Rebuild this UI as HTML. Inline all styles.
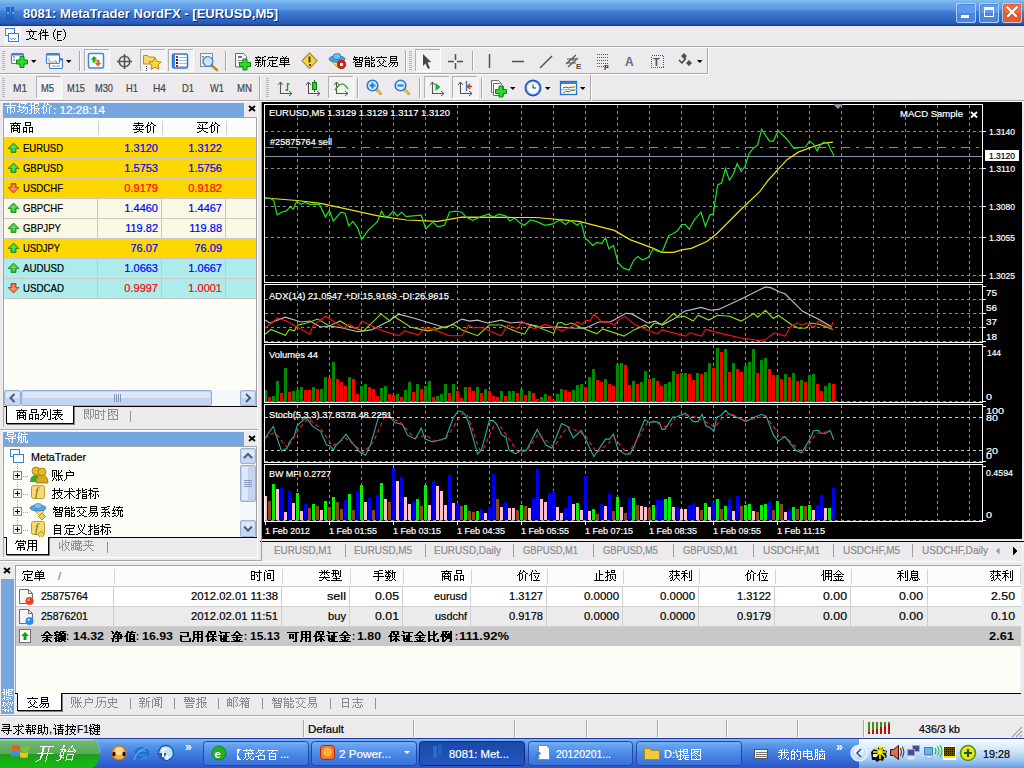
<!DOCTYPE html>
<html><head><meta charset="utf-8"><style>html,body{margin:0;padding:0;overflow:hidden;background:#ECEAEC}svg{display:block}</style></head>
<body><svg width="1024" height="768" viewBox="0 0 1024 768" shape-rendering="crispEdges" font-family="Liberation Sans"><rect x="0" y="0" width="1024" height="768" fill="#ECEAEC" /><rect x="0" y="0" width="1024" height="1" fill="#7DBDF0" /><rect x="0" y="1" width="1024" height="1" fill="#78B6EE" /><rect x="0" y="2" width="1024" height="1" fill="#72B0EC" /><rect x="0" y="3" width="1024" height="1" fill="#6CA9EA" /><rect x="0" y="4" width="1024" height="1" fill="#68A3EA" /><rect x="0" y="5" width="1024" height="1" fill="#66A0E9" /><rect x="0" y="6" width="1024" height="1" fill="#649EE9" /><rect x="0" y="7" width="1024" height="1" fill="#629CE8" /><rect x="0" y="8" width="1024" height="1" fill="#5F99E6" /><rect x="0" y="9" width="1024" height="1" fill="#5A94E3" /><rect x="0" y="10" width="1024" height="1" fill="#5089DC" /><rect x="0" y="11" width="1024" height="1" fill="#4180D5" /><rect x="0" y="12" width="1024" height="1" fill="#3D7CD2" /><rect x="0" y="13" width="1024" height="1" fill="#3A79CF" /><rect x="0" y="14" width="1024" height="1" fill="#3876CC" /><rect x="0" y="15" width="1024" height="1" fill="#3673C9" /><rect x="0" y="16" width="1024" height="1" fill="#3570C7" /><rect x="0" y="17" width="1024" height="1" fill="#336DC5" /><rect x="0" y="18" width="1024" height="1" fill="#316AC3" /><rect x="0" y="19" width="1024" height="1" fill="#2F67C1" /><rect x="0" y="20" width="1024" height="1" fill="#2D64BF" /><rect x="0" y="21" width="1024" height="1" fill="#2B60BC" /><rect x="0" y="22" width="1024" height="1" fill="#295CB9" /><rect x="0" y="23" width="1024" height="1" fill="#2658B5" /><rect x="0" y="24" width="1024" height="1" fill="#1E4CAD" /><rect x="0" y="25" width="1024" height="1" fill="#103A9C" /><rect x="6" y="7" width="4" height="13" fill="#1A6CC8" /><rect x="11" y="7" width="3" height="11" fill="#1A6CC8" /><rect x="7" y="12" width="2" height="2" fill="#5AAAE8" /><rect x="12" y="12" width="2" height="2" fill="#5AAAE8" /><rect x="6" y="17" width="8" height="3" fill="#1A62C0" /><text x="24" y="19" font-family="Liberation Sans" font-size="13" fill="#0A246A" text-anchor="start" textLength="255" lengthAdjust="spacingAndGlyphs" font-weight="bold" >8081: MetaTrader NordFX - [EURUSD,M5]</text><text x="23" y="18" font-family="Liberation Sans" font-size="13" fill="#FFFFFF" text-anchor="start" textLength="255" lengthAdjust="spacingAndGlyphs" font-weight="bold" >8081: MetaTrader NordFX - [EURUSD,M5]</text><rect x="956.5" y="3.5" width="19" height="19" rx="2.5" fill="#4A86E0" stroke="#D0E4FA" stroke-opacity="0.75"/><rect x="957.5" y="4.5" width="17" height="8" fill="#7EB0F0" opacity="0.5"/><rect x="961" y="15" width="8" height="3" fill="#FFFFFF" /><rect x="979.5" y="3.5" width="19" height="19" rx="2.5" fill="#4A86E0" stroke="#D0E4FA" stroke-opacity="0.75"/><rect x="980.5" y="4.5" width="17" height="8" fill="#7EB0F0" opacity="0.5"/><rect x="984.5" y="7.5" width="9" height="9" fill="none" stroke="#FFF" stroke-width="1"/><rect x="984" y="7" width="10" height="3" fill="#FFFFFF" /><rect x="1002.5" y="3.5" width="19" height="19" rx="2.5" fill="#E35B2E" stroke="#D0E4FA" stroke-opacity="0.75"/><rect x="1003.5" y="4.5" width="17" height="8" fill="#F08060" opacity="0.5"/><path d="M1007,7 L1017,17 M1017,7 L1007,17" stroke="#FFF" stroke-width="2.2"/><rect x="0" y="26" width="1024" height="20" fill="#ECEAEC" /><rect x="4" y="27" width="17" height="17" fill="#F8F8F6" /><rect x="5.5" y="28.5" width="9" height="7" fill="#FFF" stroke="#3A80D8"/><rect x="8.5" y="33.5" width="10" height="8" fill="#FFF" stroke="#3A80D8"/><path d="M10,38 l1.5,2 l1.5,-2 l1.5,2 l1.5,-2" stroke="#3A80D8" fill="none" stroke-width="0.8"/><path d="M30 29h1v1h-1zM31 30h1v1h-1zM26 31h11v1h-11zM29 32h1v1h-1zM33 32h1v1h-1zM29 33h1v1h-1zM33 33h1v1h-1zM29 34h1v1h-1zM33 34h1v1h-1zM30 35h1v1h-1zM32 35h1v1h-1zM30 36h1v1h-1zM32 36h1v1h-1zM31 37h1v1h-1zM29 38h2v1h-2zM32 38h2v1h-2zM26 39h3v1h-3zM34 39h3v1h-3zM41 29h1v1h-1zM45 29h1v1h-1zM41 30h1v1h-1zM43 30h1v1h-1zM45 30h1v1h-1zM40 31h1v1h-1zM43 31h1v1h-1zM45 31h1v1h-1zM40 32h1v1h-1zM42 32h6v1h-6zM39 33h3v1h-3zM45 33h1v1h-1zM38 34h1v1h-1zM40 34h1v1h-1zM45 34h1v1h-1zM40 35h1v1h-1zM42 35h7v1h-7zM40 36h1v1h-1zM45 36h1v1h-1zM40 37h1v1h-1zM45 37h1v1h-1zM40 38h1v1h-1zM45 38h1v1h-1zM40 39h1v1h-1zM45 39h1v1h-1z" fill="#000"/><path d="M55 29h1v1h-1zM54 30h1v1h-1zM54 31h1v1h-1zM53 32h1v1h-1zM53 33h1v1h-1zM53 34h1v1h-1zM53 35h1v1h-1zM53 36h1v1h-1zM54 37h1v1h-1zM54 38h1v1h-1zM55 39h1v1h-1zM57 31h5v1h-5zM57 32h1v1h-1zM57 33h1v1h-1zM57 34h4v1h-4zM57 35h1v1h-1zM57 36h1v1h-1zM57 37h1v1h-1zM57 38h1v1h-1zM63 29h1v1h-1zM64 30h1v1h-1zM64 31h1v1h-1zM65 32h1v1h-1zM65 33h1v1h-1zM65 34h1v1h-1zM65 35h1v1h-1zM65 36h1v1h-1zM64 37h1v1h-1zM64 38h1v1h-1zM63 39h1v1h-1z" fill="#000"/><rect x="57" y="40" width="5" height="1" fill="#000000" /><rect x="0" y="46" width="1024" height="1" fill="#ACA9AC" /><rect x="0" y="47" width="1024" height="1" fill="#FFFFFF" /><rect x="0" y="73" width="708" height="1" fill="#ACA9AC" /><rect x="0" y="74" width="709" height="1" fill="#FFFFFF" /><rect x="707" y="48" width="1" height="26" fill="#ACA9AC" /><rect x="708" y="47" width="1" height="28" fill="#FFFFFF" /><rect x="0" y="100" width="1024" height="1" fill="#ACA9AC" /><rect x="0" y="101" width="1024" height="1" fill="#FFFFFF" /><rect x="590" y="75" width="1" height="26" fill="#ACA9AC" /><rect x="591" y="74" width="1" height="27" fill="#FFFFFF" /><rect x="2" y="51" width="3" height="1" fill="#B8B6B8" /><rect x="2" y="53" width="3" height="1" fill="#B8B6B8" /><rect x="2" y="55" width="3" height="1" fill="#B8B6B8" /><rect x="2" y="57" width="3" height="1" fill="#B8B6B8" /><rect x="2" y="59" width="3" height="1" fill="#B8B6B8" /><rect x="2" y="61" width="3" height="1" fill="#B8B6B8" /><rect x="2" y="63" width="3" height="1" fill="#B8B6B8" /><rect x="2" y="65" width="3" height="1" fill="#B8B6B8" /><rect x="2" y="67" width="3" height="1" fill="#B8B6B8" /><rect x="2" y="69" width="3" height="1" fill="#B8B6B8" /><rect x="2" y="78" width="3" height="1" fill="#B8B6B8" /><rect x="2" y="80" width="3" height="1" fill="#B8B6B8" /><rect x="2" y="82" width="3" height="1" fill="#B8B6B8" /><rect x="2" y="84" width="3" height="1" fill="#B8B6B8" /><rect x="2" y="86" width="3" height="1" fill="#B8B6B8" /><rect x="2" y="88" width="3" height="1" fill="#B8B6B8" /><rect x="2" y="90" width="3" height="1" fill="#B8B6B8" /><rect x="2" y="92" width="3" height="1" fill="#B8B6B8" /><rect x="2" y="94" width="3" height="1" fill="#B8B6B8" /><rect x="2" y="96" width="3" height="1" fill="#B8B6B8" /><rect x="409" y="51" width="3" height="1" fill="#B8B6B8" /><rect x="409" y="53" width="3" height="1" fill="#B8B6B8" /><rect x="409" y="55" width="3" height="1" fill="#B8B6B8" /><rect x="409" y="57" width="3" height="1" fill="#B8B6B8" /><rect x="409" y="59" width="3" height="1" fill="#B8B6B8" /><rect x="409" y="61" width="3" height="1" fill="#B8B6B8" /><rect x="409" y="63" width="3" height="1" fill="#B8B6B8" /><rect x="409" y="65" width="3" height="1" fill="#B8B6B8" /><rect x="409" y="67" width="3" height="1" fill="#B8B6B8" /><rect x="409" y="69" width="3" height="1" fill="#B8B6B8" /><rect x="266" y="78" width="3" height="1" fill="#B8B6B8" /><rect x="266" y="80" width="3" height="1" fill="#B8B6B8" /><rect x="266" y="82" width="3" height="1" fill="#B8B6B8" /><rect x="266" y="84" width="3" height="1" fill="#B8B6B8" /><rect x="266" y="86" width="3" height="1" fill="#B8B6B8" /><rect x="266" y="88" width="3" height="1" fill="#B8B6B8" /><rect x="266" y="90" width="3" height="1" fill="#B8B6B8" /><rect x="266" y="92" width="3" height="1" fill="#B8B6B8" /><rect x="266" y="94" width="3" height="1" fill="#B8B6B8" /><rect x="266" y="96" width="3" height="1" fill="#B8B6B8" /><rect x="79" y="51" width="1" height="20" fill="#A9A7A9" /><rect x="80" y="51" width="1" height="20" fill="#FFFFFF" /><rect x="225" y="51" width="1" height="20" fill="#A9A7A9" /><rect x="226" y="51" width="1" height="20" fill="#FFFFFF" /><rect x="405" y="50" width="1" height="22" fill="#A9A7A9" /><rect x="406" y="50" width="1" height="22" fill="#FFFFFF" /><rect x="472" y="51" width="1" height="20" fill="#A9A7A9" /><rect x="473" y="51" width="1" height="20" fill="#FFFFFF" /><rect x="259" y="76" width="1" height="24" fill="#A9A7A9" /><rect x="260" y="76" width="1" height="24" fill="#FFFFFF" /><rect x="357" y="78" width="1" height="20" fill="#A9A7A9" /><rect x="358" y="78" width="1" height="20" fill="#FFFFFF" /><rect x="419" y="78" width="1" height="20" fill="#A9A7A9" /><rect x="420" y="78" width="1" height="20" fill="#FFFFFF" /><rect x="481" y="78" width="1" height="20" fill="#A9A7A9" /><rect x="482" y="78" width="1" height="20" fill="#FFFFFF" /><rect x="84" y="49" width="26" height="23" fill="#F4F3F4" /><rect x="84" y="49" width="26" height="1" fill="#B4B2B4" /><rect x="84" y="49" width="1" height="23" fill="#B4B2B4" /><rect x="84" y="71" width="26" height="1" fill="#FFFFFF" /><rect x="109" y="49" width="1" height="23" fill="#FFFFFF" /><rect x="140" y="49" width="26" height="23" fill="#F4F3F4" /><rect x="140" y="49" width="26" height="1" fill="#B4B2B4" /><rect x="140" y="49" width="1" height="23" fill="#B4B2B4" /><rect x="140" y="71" width="26" height="1" fill="#FFFFFF" /><rect x="165" y="49" width="1" height="23" fill="#FFFFFF" /><rect x="168" y="49" width="26" height="23" fill="#F4F3F4" /><rect x="168" y="49" width="26" height="1" fill="#B4B2B4" /><rect x="168" y="49" width="1" height="23" fill="#B4B2B4" /><rect x="168" y="71" width="26" height="1" fill="#FFFFFF" /><rect x="193" y="49" width="1" height="23" fill="#FFFFFF" /><rect x="415" y="49" width="26" height="23" fill="#F4F3F4" /><rect x="415" y="49" width="26" height="1" fill="#B4B2B4" /><rect x="415" y="49" width="1" height="23" fill="#B4B2B4" /><rect x="415" y="71" width="26" height="1" fill="#FFFFFF" /><rect x="440" y="49" width="1" height="23" fill="#FFFFFF" /><rect x="36" y="76" width="26" height="23" fill="#F4F3F4" /><rect x="36" y="76" width="26" height="1" fill="#B4B2B4" /><rect x="36" y="76" width="1" height="23" fill="#B4B2B4" /><rect x="36" y="98" width="26" height="1" fill="#FFFFFF" /><rect x="61" y="76" width="1" height="23" fill="#FFFFFF" /><rect x="328" y="76" width="26" height="23" fill="#F4F3F4" /><rect x="328" y="76" width="26" height="1" fill="#B4B2B4" /><rect x="328" y="76" width="1" height="23" fill="#B4B2B4" /><rect x="328" y="98" width="26" height="1" fill="#FFFFFF" /><rect x="353" y="76" width="1" height="23" fill="#FFFFFF" /><rect x="424" y="76" width="26" height="23" fill="#F4F3F4" /><rect x="424" y="76" width="26" height="1" fill="#B4B2B4" /><rect x="424" y="76" width="1" height="23" fill="#B4B2B4" /><rect x="424" y="98" width="26" height="1" fill="#FFFFFF" /><rect x="449" y="76" width="1" height="23" fill="#FFFFFF" /><rect x="452" y="76" width="26" height="23" fill="#F4F3F4" /><rect x="452" y="76" width="26" height="1" fill="#B4B2B4" /><rect x="452" y="76" width="1" height="23" fill="#B4B2B4" /><rect x="452" y="98" width="26" height="1" fill="#FFFFFF" /><rect x="477" y="76" width="1" height="23" fill="#FFFFFF" /><text x="13" y="92" font-family="Liberation Sans" font-size="11" fill="#444444" text-anchor="start" textLength="14" lengthAdjust="spacingAndGlyphs" stroke="#444444" stroke-width="0.2" >M1</text><text x="41" y="92" font-family="Liberation Sans" font-size="11" fill="#444444" text-anchor="start" textLength="13" lengthAdjust="spacingAndGlyphs" stroke="#444444" stroke-width="0.2" >M5</text><text x="67" y="92" font-family="Liberation Sans" font-size="11" fill="#444444" text-anchor="start" textLength="18" lengthAdjust="spacingAndGlyphs" stroke="#444444" stroke-width="0.2" >M15</text><text x="95" y="92" font-family="Liberation Sans" font-size="11" fill="#444444" text-anchor="start" textLength="18" lengthAdjust="spacingAndGlyphs" stroke="#444444" stroke-width="0.2" >M30</text><text x="126" y="92" font-family="Liberation Sans" font-size="11" fill="#444444" text-anchor="start" textLength="12" lengthAdjust="spacingAndGlyphs" stroke="#444444" stroke-width="0.2" >H1</text><text x="153" y="92" font-family="Liberation Sans" font-size="11" fill="#444444" text-anchor="start" textLength="13" lengthAdjust="spacingAndGlyphs" stroke="#444444" stroke-width="0.2" >H4</text><text x="182" y="92" font-family="Liberation Sans" font-size="11" fill="#444444" text-anchor="start" textLength="12" lengthAdjust="spacingAndGlyphs" stroke="#444444" stroke-width="0.2" >D1</text><text x="210" y="92" font-family="Liberation Sans" font-size="11" fill="#444444" text-anchor="start" textLength="14" lengthAdjust="spacingAndGlyphs" stroke="#444444" stroke-width="0.2" >W1</text><text x="237" y="92" font-family="Liberation Sans" font-size="11" fill="#444444" text-anchor="start" textLength="15" lengthAdjust="spacingAndGlyphs" stroke="#444444" stroke-width="0.2" >MN</text><path d="M258 56h1v1h-1zM264 56h2v1h-2zM255 57h6v1h-6zM262 57h2v1h-2zM256 58h1v1h-1zM260 58h1v1h-1zM262 58h1v1h-1zM257 59h1v1h-1zM259 59h1v1h-1zM262 59h1v1h-1zM255 60h6v1h-6zM262 60h4v1h-4zM258 61h1v1h-1zM262 61h1v1h-1zM264 61h1v1h-1zM255 62h6v1h-6zM262 62h1v1h-1zM264 62h1v1h-1zM258 63h1v1h-1zM262 63h1v1h-1zM264 63h1v1h-1zM256 64h1v1h-1zM258 64h1v1h-1zM260 64h1v1h-1zM262 64h1v1h-1zM264 64h1v1h-1zM255 65h1v1h-1zM258 65h1v1h-1zM261 65h1v1h-1zM264 65h1v1h-1zM257 66h2v1h-2zM260 66h1v1h-1zM264 66h1v1h-1zM272 56h1v1h-1zM268 57h10v1h-10zM268 58h1v1h-1zM277 58h1v1h-1zM267 59h1v1h-1zM276 59h1v1h-1zM269 60h8v1h-8zM272 61h1v1h-1zM269 62h1v1h-1zM272 62h1v1h-1zM269 63h1v1h-1zM272 63h4v1h-4zM269 64h1v1h-1zM272 64h1v1h-1zM268 65h1v1h-1zM270 65h1v1h-1zM272 65h1v1h-1zM267 66h1v1h-1zM271 66h7v1h-7zM282 56h1v1h-1zM286 56h1v1h-1zM283 57h1v1h-1zM285 57h1v1h-1zM280 58h9v1h-9zM280 59h1v1h-1zM284 59h1v1h-1zM288 59h1v1h-1zM280 60h9v1h-9zM280 61h1v1h-1zM284 61h1v1h-1zM288 61h1v1h-1zM280 62h9v1h-9zM284 63h1v1h-1zM279 64h11v1h-11zM284 65h1v1h-1zM284 66h1v1h-1z" fill="#000"/><path d="M354 56h1v1h-1zM354 57h4v1h-4zM359 57h4v1h-4zM353 58h1v1h-1zM355 58h1v1h-1zM359 58h1v1h-1zM362 58h1v1h-1zM353 59h7v1h-7zM362 59h1v1h-1zM355 60h2v1h-2zM359 60h4v1h-4zM354 61h1v1h-1zM357 61h1v1h-1zM359 61h1v1h-1zM362 61h1v1h-1zM353 62h1v1h-1zM355 62h7v1h-7zM355 63h1v1h-1zM361 63h1v1h-1zM355 64h7v1h-7zM355 65h1v1h-1zM361 65h1v1h-1zM355 66h7v1h-7zM366 56h1v1h-1zM371 56h1v1h-1zM365 57h1v1h-1zM368 57h1v1h-1zM371 57h1v1h-1zM373 57h1v1h-1zM364 58h6v1h-6zM371 58h2v1h-2zM371 59h1v1h-1zM374 59h1v1h-1zM365 60h5v1h-5zM371 60h4v1h-4zM365 61h1v1h-1zM369 61h1v1h-1zM365 62h5v1h-5zM371 62h1v1h-1zM373 62h1v1h-1zM365 63h1v1h-1zM369 63h1v1h-1zM371 63h2v1h-2zM365 64h5v1h-5zM371 64h1v1h-1zM374 64h1v1h-1zM365 65h1v1h-1zM369 65h1v1h-1zM371 65h1v1h-1zM374 65h1v1h-1zM365 66h1v1h-1zM368 66h2v1h-2zM371 66h4v1h-4zM381 56h1v1h-1zM376 57h11v1h-11zM379 59h1v1h-1zM383 59h1v1h-1zM378 60h1v1h-1zM384 60h1v1h-1zM377 61h1v1h-1zM379 61h1v1h-1zM383 61h1v1h-1zM385 61h1v1h-1zM379 62h1v1h-1zM383 62h1v1h-1zM380 63h1v1h-1zM382 63h1v1h-1zM381 64h1v1h-1zM379 65h2v1h-2zM382 65h2v1h-2zM377 66h2v1h-2zM384 66h3v1h-3zM390 56h7v1h-7zM390 57h1v1h-1zM396 57h1v1h-1zM390 58h7v1h-7zM390 59h1v1h-1zM396 59h1v1h-1zM390 60h7v1h-7zM390 61h1v1h-1zM390 62h8v1h-8zM389 63h1v1h-1zM392 63h1v1h-1zM394 63h1v1h-1zM397 63h1v1h-1zM388 64h1v1h-1zM391 64h1v1h-1zM394 64h1v1h-1zM397 64h1v1h-1zM390 65h1v1h-1zM393 65h1v1h-1zM397 65h1v1h-1zM389 66h1v1h-1zM392 66h1v1h-1zM395 66h2v1h-2z" fill="#000"/><rect x="257" y="102" width="1" height="456" fill="#FFFFFF" /><rect x="258" y="102" width="1" height="459" fill="#ECEAEC" /><rect x="3" y="103" width="241" height="14" fill="#75A6E0" /><path d="M10 103h1v1h-1zM10 104h1v1h-1zM5 105h11v1h-11zM10 106h1v1h-1zM7 107h8v1h-8zM7 108h1v1h-1zM10 108h1v1h-1zM14 108h1v1h-1zM7 109h1v1h-1zM10 109h1v1h-1zM14 109h1v1h-1zM7 110h1v1h-1zM10 110h1v1h-1zM14 110h1v1h-1zM7 111h1v1h-1zM10 111h1v1h-1zM12 111h1v1h-1zM14 111h1v1h-1zM7 112h1v1h-1zM10 112h1v1h-1zM13 112h1v1h-1zM10 113h1v1h-1zM19 103h1v1h-1zM21 103h6v1h-6zM19 104h1v1h-1zM25 104h1v1h-1zM19 105h1v1h-1zM24 105h1v1h-1zM17 106h4v1h-4zM23 106h1v1h-1zM19 107h1v1h-1zM21 107h7v1h-7zM19 108h1v1h-1zM23 108h1v1h-1zM25 108h1v1h-1zM27 108h1v1h-1zM19 109h1v1h-1zM22 109h1v1h-1zM25 109h1v1h-1zM27 109h1v1h-1zM19 110h3v1h-3zM24 110h1v1h-1zM27 110h1v1h-1zM17 111h2v1h-2zM23 111h1v1h-1zM27 111h1v1h-1zM21 112h2v1h-2zM27 112h1v1h-1zM25 113h2v1h-2zM31 103h1v1h-1zM34 103h5v1h-5zM31 104h1v1h-1zM34 104h1v1h-1zM38 104h1v1h-1zM29 105h6v1h-6zM38 105h1v1h-1zM31 106h1v1h-1zM34 106h1v1h-1zM36 106h2v1h-2zM31 107h1v1h-1zM33 107h2v1h-2zM31 108h2v1h-2zM34 108h6v1h-6zM30 109h2v1h-2zM34 109h1v1h-1zM36 109h1v1h-1zM38 109h1v1h-1zM29 110h1v1h-1zM31 110h1v1h-1zM34 110h1v1h-1zM36 110h1v1h-1zM38 110h1v1h-1zM31 111h1v1h-1zM34 111h1v1h-1zM37 111h1v1h-1zM31 112h1v1h-1zM34 112h1v1h-1zM36 112h1v1h-1zM38 112h1v1h-1zM29 113h3v1h-3zM34 113h2v1h-2zM39 113h1v1h-1zM44 103h1v1h-1zM47 103h1v1h-1zM44 104h1v1h-1zM47 104h2v1h-2zM43 105h1v1h-1zM46 105h1v1h-1zM49 105h1v1h-1zM43 106h3v1h-3zM50 106h2v1h-2zM42 107h2v1h-2zM46 107h1v1h-1zM49 107h1v1h-1zM41 108h1v1h-1zM43 108h1v1h-1zM46 108h1v1h-1zM49 108h1v1h-1zM43 109h1v1h-1zM46 109h1v1h-1zM49 109h1v1h-1zM43 110h1v1h-1zM46 110h1v1h-1zM49 110h1v1h-1zM43 111h1v1h-1zM46 111h1v1h-1zM49 111h1v1h-1zM43 112h1v1h-1zM45 112h1v1h-1zM49 112h1v1h-1zM43 113h2v1h-2zM49 113h1v1h-1z" fill="#FFFFFF"/><text x="53" y="114" font-family="Liberation Sans" font-size="11" fill="#FFFFFF" text-anchor="start" textLength="52" lengthAdjust="spacingAndGlyphs" stroke="#FFFFFF" stroke-width="0.2" >: 12:28:14</text><path d="M249,106 l6,5 M255,106 l-6,5" stroke="#000" stroke-width="1.8" shape-rendering="auto"/><rect x="3" y="117" width="254" height="289" fill="#A6A5A6" /><rect x="4" y="118" width="252" height="287" fill="#FCFDF7" /><rect x="4" y="118" width="252" height="19" fill="#FCFCFA" /><rect x="4" y="137" width="252" height="1" fill="#C9C9C9" /><rect x="98" y="121" width="1" height="14" fill="#D0D0D0" /><rect x="162" y="121" width="1" height="14" fill="#D0D0D0" /><rect x="226" y="121" width="1" height="14" fill="#D0D0D0" /><path d="M15 122h1v1h-1zM10 123h11v1h-11zM13 124h1v1h-1zM17 124h1v1h-1zM11 125h9v1h-9zM11 126h1v1h-1zM14 126h1v1h-1zM16 126h1v1h-1zM19 126h1v1h-1zM11 127h1v1h-1zM13 127h1v1h-1zM17 127h1v1h-1zM19 127h1v1h-1zM11 128h9v1h-9zM11 129h1v1h-1zM13 129h1v1h-1zM17 129h1v1h-1zM19 129h1v1h-1zM11 130h1v1h-1zM13 130h5v1h-5zM19 130h1v1h-1zM11 131h1v1h-1zM13 131h1v1h-1zM17 131h1v1h-1zM19 131h1v1h-1zM11 132h1v1h-1zM18 132h2v1h-2zM25 122h6v1h-6zM25 123h1v1h-1zM30 123h1v1h-1zM25 124h1v1h-1zM30 124h1v1h-1zM25 125h6v1h-6zM23 127h4v1h-4zM29 127h4v1h-4zM23 128h1v1h-1zM26 128h1v1h-1zM29 128h1v1h-1zM32 128h1v1h-1zM23 129h1v1h-1zM26 129h1v1h-1zM29 129h1v1h-1zM32 129h1v1h-1zM23 130h1v1h-1zM26 130h1v1h-1zM29 130h1v1h-1zM32 130h1v1h-1zM23 131h4v1h-4zM29 131h4v1h-4zM23 132h1v1h-1zM26 132h1v1h-1zM29 132h1v1h-1zM32 132h1v1h-1z" fill="#000"/><path d="M138 122h1v1h-1zM134 123h9v1h-9zM138 124h1v1h-1zM133 125h11v1h-11zM136 126h1v1h-1zM142 126h1v1h-1zM135 127h1v1h-1zM137 127h1v1h-1zM139 127h1v1h-1zM141 127h1v1h-1zM136 128h1v1h-1zM139 128h1v1h-1zM133 129h11v1h-11zM139 130h1v1h-1zM137 131h2v1h-2zM140 131h2v1h-2zM134 132h3v1h-3zM142 132h1v1h-1zM148 122h1v1h-1zM151 122h1v1h-1zM148 123h1v1h-1zM151 123h2v1h-2zM147 124h1v1h-1zM150 124h1v1h-1zM153 124h1v1h-1zM147 125h3v1h-3zM154 125h2v1h-2zM146 126h2v1h-2zM150 126h1v1h-1zM153 126h1v1h-1zM145 127h1v1h-1zM147 127h1v1h-1zM150 127h1v1h-1zM153 127h1v1h-1zM147 128h1v1h-1zM150 128h1v1h-1zM153 128h1v1h-1zM147 129h1v1h-1zM150 129h1v1h-1zM153 129h1v1h-1zM147 130h1v1h-1zM150 130h1v1h-1zM153 130h1v1h-1zM147 131h1v1h-1zM149 131h1v1h-1zM153 131h1v1h-1zM147 132h2v1h-2zM153 132h1v1h-1z" fill="#000"/><path d="M197 122h11v1h-11zM206 123h1v1h-1zM199 124h1v1h-1zM202 124h1v1h-1zM205 124h1v1h-1zM200 125h1v1h-1zM202 125h1v1h-1zM198 126h1v1h-1zM202 126h1v1h-1zM199 127h1v1h-1zM202 127h1v1h-1zM197 128h11v1h-11zM202 129h1v1h-1zM201 130h1v1h-1zM203 130h1v1h-1zM199 131h2v1h-2zM204 131h2v1h-2zM197 132h2v1h-2zM206 132h2v1h-2zM212 122h1v1h-1zM215 122h1v1h-1zM212 123h1v1h-1zM215 123h2v1h-2zM211 124h1v1h-1zM214 124h1v1h-1zM217 124h1v1h-1zM211 125h3v1h-3zM218 125h2v1h-2zM210 126h2v1h-2zM214 126h1v1h-1zM217 126h1v1h-1zM209 127h1v1h-1zM211 127h1v1h-1zM214 127h1v1h-1zM217 127h1v1h-1zM211 128h1v1h-1zM214 128h1v1h-1zM217 128h1v1h-1zM211 129h1v1h-1zM214 129h1v1h-1zM217 129h1v1h-1zM211 130h1v1h-1zM214 130h1v1h-1zM217 130h1v1h-1zM211 131h1v1h-1zM213 131h1v1h-1zM217 131h1v1h-1zM211 132h2v1h-2zM217 132h1v1h-1z" fill="#000"/><rect x="4" y="138" width="252" height="21" fill="#FFD700" /><rect x="4" y="158" width="252" height="21" fill="#FFD700" /><rect x="4" y="178" width="252" height="21" fill="#FFD700" /><rect x="4" y="198" width="252" height="21" fill="#F9F9E3" /><rect x="4" y="218" width="252" height="21" fill="#F9F9E3" /><rect x="4" y="238" width="252" height="21" fill="#FFD700" /><rect x="4" y="258" width="252" height="21" fill="#AEEBEB" /><rect x="4" y="278" width="252" height="21" fill="#AEEBEB" /><rect x="4" y="158" width="252" height="1" fill="#C8C8C8" /><rect x="4" y="178" width="252" height="1" fill="#C8C8C8" /><rect x="4" y="198" width="252" height="1" fill="#C8C8C8" /><rect x="4" y="218" width="252" height="1" fill="#C8C8C8" /><rect x="4" y="238" width="252" height="1" fill="#C8C8C8" /><rect x="4" y="258" width="252" height="1" fill="#C8C8C8" /><rect x="4" y="278" width="252" height="1" fill="#C8C8C8" /><rect x="4" y="298" width="252" height="1" fill="#C8C8C8" /><rect x="97" y="138" width="1" height="20" fill="#C8C8C8" /><rect x="161" y="138" width="1" height="20" fill="#C8C8C8" /><rect x="225" y="138" width="1" height="20" fill="#C8C8C8" /><path d="M13.5,143 L19,148.5 L16,148.5 L16,152.5 L11,152.5 L11,148.5 L8,148.5 Z" fill="#2EB82E" stroke="#178A17" stroke-width="0.8" shape-rendering="auto"/><path d="M13.5,144.5 L17,148 L14.5,148 L14.5,151 L12.5,151 L12.5,148 L10,148 Z" fill="#8CEB8C" opacity="0.6" shape-rendering="auto"/><text x="23" y="152" font-family="Liberation Sans" font-size="11" fill="#000" text-anchor="start" textLength="40" lengthAdjust="spacingAndGlyphs" stroke="#000" stroke-width="0.2" >EURUSD</text><text x="158" y="152" font-family="Liberation Sans" font-size="11" fill="#0000FF" text-anchor="end" stroke="#0000FF" stroke-width="0.2" >1.3120</text><text x="222" y="152" font-family="Liberation Sans" font-size="11" fill="#0000FF" text-anchor="end" stroke="#0000FF" stroke-width="0.2" >1.3122</text><rect x="97" y="158" width="1" height="20" fill="#C8C8C8" /><rect x="161" y="158" width="1" height="20" fill="#C8C8C8" /><rect x="225" y="158" width="1" height="20" fill="#C8C8C8" /><path d="M13.5,163 L19,168.5 L16,168.5 L16,172.5 L11,172.5 L11,168.5 L8,168.5 Z" fill="#2EB82E" stroke="#178A17" stroke-width="0.8" shape-rendering="auto"/><path d="M13.5,164.5 L17,168 L14.5,168 L14.5,171 L12.5,171 L12.5,168 L10,168 Z" fill="#8CEB8C" opacity="0.6" shape-rendering="auto"/><text x="23" y="172" font-family="Liberation Sans" font-size="11" fill="#000" text-anchor="start" textLength="40" lengthAdjust="spacingAndGlyphs" stroke="#000" stroke-width="0.2" >GBPUSD</text><text x="158" y="172" font-family="Liberation Sans" font-size="11" fill="#0000FF" text-anchor="end" stroke="#0000FF" stroke-width="0.2" >1.5753</text><text x="222" y="172" font-family="Liberation Sans" font-size="11" fill="#0000FF" text-anchor="end" stroke="#0000FF" stroke-width="0.2" >1.5756</text><rect x="97" y="178" width="1" height="20" fill="#C8C8C8" /><rect x="161" y="178" width="1" height="20" fill="#C8C8C8" /><rect x="225" y="178" width="1" height="20" fill="#C8C8C8" /><path d="M13.5,193 L19,187.5 L16,187.5 L16,183.5 L11,183.5 L11,187.5 L8,187.5 Z" fill="#F0603A" stroke="#B83A1A" stroke-width="0.8" shape-rendering="auto"/><path d="M13.5,191.5 L17,188 L14.5,188 L14.5,185 L12.5,185 L12.5,188 L10,188 Z" fill="#FFB090" opacity="0.6" shape-rendering="auto"/><text x="23" y="192" font-family="Liberation Sans" font-size="11" fill="#000" text-anchor="start" textLength="40" lengthAdjust="spacingAndGlyphs" stroke="#000" stroke-width="0.2" >USDCHF</text><text x="158" y="192" font-family="Liberation Sans" font-size="11" fill="#FF0000" text-anchor="end" stroke="#FF0000" stroke-width="0.2" >0.9179</text><text x="222" y="192" font-family="Liberation Sans" font-size="11" fill="#FF0000" text-anchor="end" stroke="#FF0000" stroke-width="0.2" >0.9182</text><rect x="97" y="198" width="1" height="20" fill="#C8C8C8" /><rect x="161" y="198" width="1" height="20" fill="#C8C8C8" /><rect x="225" y="198" width="1" height="20" fill="#C8C8C8" /><path d="M13.5,203 L19,208.5 L16,208.5 L16,212.5 L11,212.5 L11,208.5 L8,208.5 Z" fill="#2EB82E" stroke="#178A17" stroke-width="0.8" shape-rendering="auto"/><path d="M13.5,204.5 L17,208 L14.5,208 L14.5,211 L12.5,211 L12.5,208 L10,208 Z" fill="#8CEB8C" opacity="0.6" shape-rendering="auto"/><text x="23" y="212" font-family="Liberation Sans" font-size="11" fill="#000" text-anchor="start" textLength="40" lengthAdjust="spacingAndGlyphs" stroke="#000" stroke-width="0.2" >GBPCHF</text><text x="158" y="212" font-family="Liberation Sans" font-size="11" fill="#0000FF" text-anchor="end" stroke="#0000FF" stroke-width="0.2" >1.4460</text><text x="222" y="212" font-family="Liberation Sans" font-size="11" fill="#0000FF" text-anchor="end" stroke="#0000FF" stroke-width="0.2" >1.4467</text><rect x="97" y="218" width="1" height="20" fill="#C8C8C8" /><rect x="161" y="218" width="1" height="20" fill="#C8C8C8" /><rect x="225" y="218" width="1" height="20" fill="#C8C8C8" /><path d="M13.5,223 L19,228.5 L16,228.5 L16,232.5 L11,232.5 L11,228.5 L8,228.5 Z" fill="#2EB82E" stroke="#178A17" stroke-width="0.8" shape-rendering="auto"/><path d="M13.5,224.5 L17,228 L14.5,228 L14.5,231 L12.5,231 L12.5,228 L10,228 Z" fill="#8CEB8C" opacity="0.6" shape-rendering="auto"/><text x="23" y="232" font-family="Liberation Sans" font-size="11" fill="#000" text-anchor="start" textLength="38" lengthAdjust="spacingAndGlyphs" stroke="#000" stroke-width="0.2" >GBPJPY</text><text x="158" y="232" font-family="Liberation Sans" font-size="11" fill="#0000FF" text-anchor="end" stroke="#0000FF" stroke-width="0.2" >119.82</text><text x="222" y="232" font-family="Liberation Sans" font-size="11" fill="#0000FF" text-anchor="end" stroke="#0000FF" stroke-width="0.2" >119.88</text><rect x="97" y="238" width="1" height="20" fill="#C8C8C8" /><rect x="161" y="238" width="1" height="20" fill="#C8C8C8" /><rect x="225" y="238" width="1" height="20" fill="#C8C8C8" /><path d="M13.5,243 L19,248.5 L16,248.5 L16,252.5 L11,252.5 L11,248.5 L8,248.5 Z" fill="#2EB82E" stroke="#178A17" stroke-width="0.8" shape-rendering="auto"/><path d="M13.5,244.5 L17,248 L14.5,248 L14.5,251 L12.5,251 L12.5,248 L10,248 Z" fill="#8CEB8C" opacity="0.6" shape-rendering="auto"/><text x="23" y="252" font-family="Liberation Sans" font-size="11" fill="#000" text-anchor="start" textLength="37" lengthAdjust="spacingAndGlyphs" stroke="#000" stroke-width="0.2" >USDJPY</text><text x="158" y="252" font-family="Liberation Sans" font-size="11" fill="#0000FF" text-anchor="end" stroke="#0000FF" stroke-width="0.2" >76.07</text><text x="222" y="252" font-family="Liberation Sans" font-size="11" fill="#0000FF" text-anchor="end" stroke="#0000FF" stroke-width="0.2" >76.09</text><rect x="97" y="258" width="1" height="20" fill="#C8C8C8" /><rect x="161" y="258" width="1" height="20" fill="#C8C8C8" /><rect x="225" y="258" width="1" height="20" fill="#C8C8C8" /><path d="M13.5,263 L19,268.5 L16,268.5 L16,272.5 L11,272.5 L11,268.5 L8,268.5 Z" fill="#2EB82E" stroke="#178A17" stroke-width="0.8" shape-rendering="auto"/><path d="M13.5,264.5 L17,268 L14.5,268 L14.5,271 L12.5,271 L12.5,268 L10,268 Z" fill="#8CEB8C" opacity="0.6" shape-rendering="auto"/><text x="23" y="272" font-family="Liberation Sans" font-size="11" fill="#000" text-anchor="start" textLength="41" lengthAdjust="spacingAndGlyphs" stroke="#000" stroke-width="0.2" >AUDUSD</text><text x="158" y="272" font-family="Liberation Sans" font-size="11" fill="#0000FF" text-anchor="end" stroke="#0000FF" stroke-width="0.2" >1.0663</text><text x="222" y="272" font-family="Liberation Sans" font-size="11" fill="#0000FF" text-anchor="end" stroke="#0000FF" stroke-width="0.2" >1.0667</text><rect x="97" y="278" width="1" height="20" fill="#C8C8C8" /><rect x="161" y="278" width="1" height="20" fill="#C8C8C8" /><rect x="225" y="278" width="1" height="20" fill="#C8C8C8" /><path d="M13.5,293 L19,287.5 L16,287.5 L16,283.5 L11,283.5 L11,287.5 L8,287.5 Z" fill="#F0603A" stroke="#B83A1A" stroke-width="0.8" shape-rendering="auto"/><path d="M13.5,291.5 L17,288 L14.5,288 L14.5,285 L12.5,285 L12.5,288 L10,288 Z" fill="#FFB090" opacity="0.6" shape-rendering="auto"/><text x="23" y="292" font-family="Liberation Sans" font-size="11" fill="#000" text-anchor="start" textLength="41" lengthAdjust="spacingAndGlyphs" stroke="#000" stroke-width="0.2" >USDCAD</text><text x="158" y="292" font-family="Liberation Sans" font-size="11" fill="#FF0000" text-anchor="end" stroke="#FF0000" stroke-width="0.2" >0.9997</text><text x="222" y="292" font-family="Liberation Sans" font-size="11" fill="#FF0000" text-anchor="end" stroke="#FF0000" stroke-width="0.2" >1.0001</text><rect x="4" y="390" width="252" height="16" fill="#F4F7FC" /><rect x="4.5" y="390.5" width="16" height="15" rx="1.5" fill="#C6D6F2" stroke="#9AB0D8" shape-rendering="auto"/><rect x="6" y="392" width="13" height="6" fill="#DCE7F8" /><path d="M14.5,394.0 L10.5,398.0 L14.5,402.0" stroke="#4D5A78" stroke-width="2" fill="none" shape-rendering="auto"/><rect x="21.5" y="390.5" width="190" height="15" rx="1.5" fill="#C4D4F0" stroke="#98AEDA" shape-rendering="auto"/><rect x="23" y="392" width="187" height="6" fill="#DDE8F8" /><rect x="114" y="394" width="1" height="8" fill="#8898B8" /><rect x="116" y="394" width="1" height="8" fill="#8898B8" /><rect x="118" y="394" width="1" height="8" fill="#8898B8" /><rect x="120" y="394" width="1" height="8" fill="#8898B8" /><rect x="240.5" y="390.5" width="15" height="15" rx="1.5" fill="#C6D6F2" stroke="#9AB0D8" shape-rendering="auto"/><rect x="242" y="392" width="12" height="6" fill="#DCE7F8" /><path d="M246.0,394.0 L250.0,398.0 L246.0,402.0" stroke="#4D5A78" stroke-width="2" fill="none" shape-rendering="auto"/><rect x="3" y="406" width="254" height="20" fill="#ECEAEC" /><rect x="3" y="406" width="254" height="1" fill="#000000" /><rect x="6" y="406" width="68" height="18" fill="#FFFFFF" /><rect x="6" y="406" width="1" height="18" fill="#000" /><rect x="73" y="406" width="1" height="18" fill="#000" /><rect x="6" y="423" width="68" height="1" fill="#000" /><rect x="74" y="407" width="1" height="18" fill="#808080" /><rect x="7" y="424" width="68" height="1" fill="#808080" /><path d="M21 409h1v1h-1zM16 410h11v1h-11zM19 411h1v1h-1zM23 411h1v1h-1zM17 412h9v1h-9zM17 413h1v1h-1zM20 413h1v1h-1zM22 413h1v1h-1zM25 413h1v1h-1zM17 414h1v1h-1zM19 414h1v1h-1zM23 414h1v1h-1zM25 414h1v1h-1zM17 415h9v1h-9zM17 416h1v1h-1zM19 416h1v1h-1zM23 416h1v1h-1zM25 416h1v1h-1zM17 417h1v1h-1zM19 417h5v1h-5zM25 417h1v1h-1zM17 418h1v1h-1zM19 418h1v1h-1zM23 418h1v1h-1zM25 418h1v1h-1zM17 419h1v1h-1zM24 419h2v1h-2zM31 409h6v1h-6zM31 410h1v1h-1zM36 410h1v1h-1zM31 411h1v1h-1zM36 411h1v1h-1zM31 412h6v1h-6zM29 414h4v1h-4zM35 414h4v1h-4zM29 415h1v1h-1zM32 415h1v1h-1zM35 415h1v1h-1zM38 415h1v1h-1zM29 416h1v1h-1zM32 416h1v1h-1zM35 416h1v1h-1zM38 416h1v1h-1zM29 417h1v1h-1zM32 417h1v1h-1zM35 417h1v1h-1zM38 417h1v1h-1zM29 418h4v1h-4zM35 418h4v1h-4zM29 419h1v1h-1zM32 419h1v1h-1zM35 419h1v1h-1zM38 419h1v1h-1zM41 409h6v1h-6zM50 409h1v1h-1zM43 410h1v1h-1zM50 410h1v1h-1zM43 411h1v1h-1zM47 411h1v1h-1zM50 411h1v1h-1zM42 412h4v1h-4zM47 412h1v1h-1zM50 412h1v1h-1zM42 413h1v1h-1zM45 413h1v1h-1zM47 413h1v1h-1zM50 413h1v1h-1zM41 414h2v1h-2zM45 414h1v1h-1zM47 414h1v1h-1zM50 414h1v1h-1zM40 415h1v1h-1zM43 415h2v1h-2zM47 415h1v1h-1zM50 415h1v1h-1zM44 416h1v1h-1zM47 416h1v1h-1zM50 416h1v1h-1zM43 417h1v1h-1zM50 417h1v1h-1zM42 418h1v1h-1zM50 418h1v1h-1zM40 419h2v1h-2zM48 419h3v1h-3zM57 409h1v1h-1zM53 410h9v1h-9zM57 411h1v1h-1zM54 412h7v1h-7zM57 413h1v1h-1zM52 414h11v1h-11zM56 415h1v1h-1zM58 415h1v1h-1zM61 415h1v1h-1zM55 416h1v1h-1zM58 416h1v1h-1zM60 416h1v1h-1zM54 417h2v1h-2zM59 417h1v1h-1zM52 418h2v1h-2zM55 418h1v1h-1zM57 418h1v1h-1zM60 418h1v1h-1zM55 419h2v1h-2zM61 419h2v1h-2z" fill="#000"/><path d="M84 409h5v1h-5zM90 409h4v1h-4zM84 410h1v1h-1zM88 410h1v1h-1zM90 410h1v1h-1zM93 410h1v1h-1zM84 411h5v1h-5zM90 411h1v1h-1zM93 411h1v1h-1zM84 412h1v1h-1zM88 412h1v1h-1zM90 412h1v1h-1zM93 412h1v1h-1zM84 413h5v1h-5zM90 413h1v1h-1zM93 413h1v1h-1zM84 414h1v1h-1zM88 414h1v1h-1zM90 414h1v1h-1zM93 414h1v1h-1zM84 415h1v1h-1zM86 415h1v1h-1zM90 415h1v1h-1zM93 415h1v1h-1zM84 416h1v1h-1zM87 416h1v1h-1zM90 416h2v1h-2zM93 416h1v1h-1zM84 417h1v1h-1zM86 417h1v1h-1zM88 417h1v1h-1zM90 417h1v1h-1zM92 417h1v1h-1zM84 418h2v1h-2zM88 418h1v1h-1zM90 418h1v1h-1zM90 419h1v1h-1zM103 409h1v1h-1zM95 410h4v1h-4zM103 410h1v1h-1zM95 411h1v1h-1zM98 411h8v1h-8zM95 412h1v1h-1zM98 412h1v1h-1zM103 412h1v1h-1zM95 413h1v1h-1zM98 413h1v1h-1zM100 413h1v1h-1zM103 413h1v1h-1zM95 414h4v1h-4zM101 414h1v1h-1zM103 414h1v1h-1zM95 415h1v1h-1zM98 415h1v1h-1zM101 415h1v1h-1zM103 415h1v1h-1zM95 416h1v1h-1zM98 416h1v1h-1zM103 416h1v1h-1zM95 417h1v1h-1zM98 417h1v1h-1zM103 417h1v1h-1zM95 418h4v1h-4zM103 418h1v1h-1zM101 419h3v1h-3zM108 409h10v1h-10zM108 410h1v1h-1zM111 410h1v1h-1zM117 410h1v1h-1zM108 411h1v1h-1zM111 411h5v1h-5zM117 411h1v1h-1zM108 412h1v1h-1zM110 412h2v1h-2zM114 412h1v1h-1zM117 412h1v1h-1zM108 413h2v1h-2zM112 413h2v1h-2zM117 413h1v1h-1zM108 414h1v1h-1zM111 414h1v1h-1zM114 414h1v1h-1zM117 414h1v1h-1zM108 415h3v1h-3zM112 415h1v1h-1zM115 415h3v1h-3zM108 416h1v1h-1zM113 416h1v1h-1zM117 416h1v1h-1zM108 417h1v1h-1zM112 417h1v1h-1zM117 417h1v1h-1zM108 418h1v1h-1zM113 418h1v1h-1zM117 418h1v1h-1zM108 419h10v1h-10z" fill="#909090"/><rect x="130" y="411" width="1" height="11" fill="#909090" /><rect x="3" y="406" width="1" height="21" fill="#A8A8A8" /><rect x="0" y="429" width="258" height="1" fill="#A8A7A8" /><rect x="0" y="430" width="258" height="1" fill="#FFFFFF" /><rect x="3" y="432" width="241" height="14" fill="#75A6E0" /><path d="M7 432h7v1h-7zM7 433h1v1h-1zM13 433h1v1h-1zM7 434h7v1h-7zM15 434h1v1h-1zM7 435h1v1h-1zM15 435h1v1h-1zM8 436h8v1h-8zM12 437h1v1h-1zM5 438h11v1h-11zM8 439h1v1h-1zM12 439h1v1h-1zM9 440h1v1h-1zM12 440h1v1h-1zM9 441h1v1h-1zM12 441h1v1h-1zM11 442h2v1h-2zM19 432h1v1h-1zM24 432h1v1h-1zM18 433h4v1h-4zM25 433h1v1h-1zM18 434h1v1h-1zM21 434h7v1h-7zM18 435h2v1h-2zM21 435h1v1h-1zM18 436h1v1h-1zM20 436h2v1h-2zM23 436h3v1h-3zM17 437h5v1h-5zM23 437h1v1h-1zM25 437h1v1h-1zM18 438h1v1h-1zM21 438h1v1h-1zM23 438h1v1h-1zM25 438h1v1h-1zM18 439h2v1h-2zM21 439h1v1h-1zM23 439h1v1h-1zM25 439h1v1h-1zM18 440h1v1h-1zM20 440h2v1h-2zM23 440h1v1h-1zM25 440h1v1h-1zM27 440h1v1h-1zM18 441h1v1h-1zM21 441h1v1h-1zM23 441h1v1h-1zM25 441h1v1h-1zM27 441h1v1h-1zM17 442h1v1h-1zM20 442h3v1h-3zM25 442h3v1h-3z" fill="#FFFFFF"/><path d="M249,436 l6,5 M255,436 l-6,5" stroke="#000" stroke-width="1.8" shape-rendering="auto"/><rect x="3" y="446" width="254" height="92" fill="#A6A5A6" /><rect x="4" y="447" width="252" height="90" fill="#FCFDF7" /><rect x="10.5" y="449.5" width="9" height="7" fill="#FFF" stroke="#3A80D8"/><rect x="13.5" y="454.5" width="10" height="8" fill="#FFF" stroke="#3A80D8"/><text x="31" y="461" font-family="Liberation Sans" font-size="11" fill="#000" text-anchor="start" textLength="55" lengthAdjust="spacingAndGlyphs" stroke="#000" stroke-width="0.2" >MetaTrader</text><rect x="17" y="464" width="1" height="1" fill="#A0A0A0" /><rect x="17" y="466" width="1" height="1" fill="#A0A0A0" /><rect x="17" y="468" width="1" height="1" fill="#A0A0A0" /><rect x="17" y="470" width="1" height="1" fill="#A0A0A0" /><rect x="17" y="472" width="1" height="1" fill="#A0A0A0" /><rect x="17" y="474" width="1" height="1" fill="#A0A0A0" /><rect x="17" y="476" width="1" height="1" fill="#A0A0A0" /><rect x="23" y="476" width="1" height="1" fill="#A0A0A0" /><rect x="25" y="476" width="1" height="1" fill="#A0A0A0" /><rect x="27" y="476" width="1" height="1" fill="#A0A0A0" /><rect x="13.5" y="471.5" width="8" height="8" fill="#F4F4F4" stroke="#7A8AA8"/><rect x="15" y="475" width="5" height="1" fill="#000" /><rect x="17" y="473" width="1" height="5" fill="#000" /><path d="M52 470h5v1h-5zM58 470h1v1h-1zM61 470h1v1h-1zM52 471h1v1h-1zM56 471h1v1h-1zM58 471h1v1h-1zM61 471h1v1h-1zM52 472h1v1h-1zM54 472h1v1h-1zM56 472h1v1h-1zM58 472h1v1h-1zM60 472h1v1h-1zM52 473h1v1h-1zM54 473h1v1h-1zM56 473h1v1h-1zM58 473h2v1h-2zM52 474h1v1h-1zM54 474h1v1h-1zM56 474h1v1h-1zM58 474h1v1h-1zM52 475h1v1h-1zM54 475h1v1h-1zM56 475h7v1h-7zM52 476h1v1h-1zM54 476h1v1h-1zM56 476h1v1h-1zM58 476h1v1h-1zM60 476h1v1h-1zM54 477h1v1h-1zM58 477h1v1h-1zM60 477h1v1h-1zM53 478h1v1h-1zM55 478h1v1h-1zM58 478h1v1h-1zM61 478h1v1h-1zM53 479h1v1h-1zM56 479h1v1h-1zM58 479h2v1h-2zM61 479h1v1h-1zM52 480h1v1h-1zM56 480h1v1h-1zM58 480h1v1h-1zM62 480h1v1h-1zM69 470h1v1h-1zM70 471h1v1h-1zM66 472h8v1h-8zM66 473h1v1h-1zM73 473h1v1h-1zM66 474h1v1h-1zM73 474h1v1h-1zM66 475h8v1h-8zM66 476h1v1h-1zM66 477h1v1h-1zM66 478h1v1h-1zM65 479h1v1h-1zM64 480h1v1h-1z" fill="#000"/><rect x="17" y="482" width="1" height="1" fill="#A0A0A0" /><rect x="17" y="484" width="1" height="1" fill="#A0A0A0" /><rect x="17" y="486" width="1" height="1" fill="#A0A0A0" /><rect x="17" y="488" width="1" height="1" fill="#A0A0A0" /><rect x="17" y="490" width="1" height="1" fill="#A0A0A0" /><rect x="17" y="492" width="1" height="1" fill="#A0A0A0" /><rect x="17" y="494" width="1" height="1" fill="#A0A0A0" /><rect x="23" y="494" width="1" height="1" fill="#A0A0A0" /><rect x="25" y="494" width="1" height="1" fill="#A0A0A0" /><rect x="27" y="494" width="1" height="1" fill="#A0A0A0" /><rect x="13.5" y="489.5" width="8" height="8" fill="#F4F4F4" stroke="#7A8AA8"/><rect x="15" y="493" width="5" height="1" fill="#000" /><rect x="17" y="491" width="1" height="5" fill="#000" /><path d="M54 488h1v1h-1zM59 488h1v1h-1zM54 489h1v1h-1zM59 489h1v1h-1zM52 490h11v1h-11zM54 491h1v1h-1zM59 491h1v1h-1zM54 492h1v1h-1zM56 492h6v1h-6zM54 493h2v1h-2zM57 493h1v1h-1zM61 493h1v1h-1zM53 494h2v1h-2zM57 494h1v1h-1zM61 494h1v1h-1zM52 495h1v1h-1zM54 495h1v1h-1zM58 495h1v1h-1zM60 495h1v1h-1zM54 496h1v1h-1zM59 496h1v1h-1zM54 497h1v1h-1zM58 497h1v1h-1zM60 497h1v1h-1zM52 498h3v1h-3zM56 498h2v1h-2zM61 498h2v1h-2zM69 488h1v1h-1zM71 488h1v1h-1zM69 489h1v1h-1zM72 489h1v1h-1zM69 490h1v1h-1zM64 491h11v1h-11zM69 492h1v1h-1zM68 493h3v1h-3zM67 494h1v1h-1zM69 494h1v1h-1zM71 494h1v1h-1zM66 495h1v1h-1zM69 495h1v1h-1zM72 495h1v1h-1zM65 496h1v1h-1zM69 496h1v1h-1zM73 496h1v1h-1zM64 497h1v1h-1zM69 497h1v1h-1zM74 497h1v1h-1zM69 498h1v1h-1zM78 488h1v1h-1zM82 488h1v1h-1zM78 489h1v1h-1zM82 489h1v1h-1zM85 489h2v1h-2zM76 490h5v1h-5zM82 490h3v1h-3zM78 491h1v1h-1zM82 491h1v1h-1zM86 491h1v1h-1zM78 492h1v1h-1zM80 492h1v1h-1zM82 492h5v1h-5zM78 493h2v1h-2zM77 494h2v1h-2zM82 494h5v1h-5zM76 495h1v1h-1zM78 495h1v1h-1zM82 495h1v1h-1zM86 495h1v1h-1zM78 496h1v1h-1zM82 496h5v1h-5zM78 497h1v1h-1zM82 497h1v1h-1zM86 497h1v1h-1zM76 498h3v1h-3zM82 498h5v1h-5zM90 488h1v1h-1zM93 488h5v1h-5zM90 489h1v1h-1zM88 490h5v1h-5zM90 491h1v1h-1zM92 491h7v1h-7zM90 492h1v1h-1zM95 492h1v1h-1zM89 493h3v1h-3zM95 493h1v1h-1zM89 494h2v1h-2zM93 494h1v1h-1zM95 494h1v1h-1zM97 494h1v1h-1zM88 495h1v1h-1zM90 495h1v1h-1zM93 495h1v1h-1zM95 495h1v1h-1zM98 495h1v1h-1zM90 496h1v1h-1zM92 496h1v1h-1zM95 496h1v1h-1zM98 496h1v1h-1zM90 497h1v1h-1zM95 497h1v1h-1zM90 498h1v1h-1zM94 498h2v1h-2z" fill="#000"/><rect x="17" y="500" width="1" height="1" fill="#A0A0A0" /><rect x="17" y="502" width="1" height="1" fill="#A0A0A0" /><rect x="17" y="504" width="1" height="1" fill="#A0A0A0" /><rect x="17" y="506" width="1" height="1" fill="#A0A0A0" /><rect x="17" y="508" width="1" height="1" fill="#A0A0A0" /><rect x="17" y="510" width="1" height="1" fill="#A0A0A0" /><rect x="17" y="512" width="1" height="1" fill="#A0A0A0" /><rect x="23" y="512" width="1" height="1" fill="#A0A0A0" /><rect x="25" y="512" width="1" height="1" fill="#A0A0A0" /><rect x="27" y="512" width="1" height="1" fill="#A0A0A0" /><rect x="13.5" y="507.5" width="8" height="8" fill="#F4F4F4" stroke="#7A8AA8"/><rect x="15" y="511" width="5" height="1" fill="#000" /><rect x="17" y="509" width="1" height="5" fill="#000" /><path d="M54 506h1v1h-1zM54 507h4v1h-4zM59 507h4v1h-4zM53 508h1v1h-1zM55 508h1v1h-1zM59 508h1v1h-1zM62 508h1v1h-1zM53 509h7v1h-7zM62 509h1v1h-1zM55 510h2v1h-2zM59 510h4v1h-4zM54 511h1v1h-1zM57 511h1v1h-1zM59 511h1v1h-1zM62 511h1v1h-1zM53 512h1v1h-1zM55 512h7v1h-7zM55 513h1v1h-1zM61 513h1v1h-1zM55 514h7v1h-7zM55 515h1v1h-1zM61 515h1v1h-1zM55 516h7v1h-7zM66 506h1v1h-1zM71 506h1v1h-1zM65 507h1v1h-1zM68 507h1v1h-1zM71 507h1v1h-1zM73 507h1v1h-1zM64 508h6v1h-6zM71 508h2v1h-2zM71 509h1v1h-1zM74 509h1v1h-1zM65 510h5v1h-5zM71 510h4v1h-4zM65 511h1v1h-1zM69 511h1v1h-1zM65 512h5v1h-5zM71 512h1v1h-1zM73 512h1v1h-1zM65 513h1v1h-1zM69 513h1v1h-1zM71 513h2v1h-2zM65 514h5v1h-5zM71 514h1v1h-1zM74 514h1v1h-1zM65 515h1v1h-1zM69 515h1v1h-1zM71 515h1v1h-1zM74 515h1v1h-1zM65 516h1v1h-1zM68 516h2v1h-2zM71 516h4v1h-4zM81 506h1v1h-1zM76 507h11v1h-11zM79 509h1v1h-1zM83 509h1v1h-1zM78 510h1v1h-1zM84 510h1v1h-1zM77 511h1v1h-1zM79 511h1v1h-1zM83 511h1v1h-1zM85 511h1v1h-1zM79 512h1v1h-1zM83 512h1v1h-1zM80 513h1v1h-1zM82 513h1v1h-1zM81 514h1v1h-1zM79 515h2v1h-2zM82 515h2v1h-2zM77 516h2v1h-2zM84 516h3v1h-3zM90 506h7v1h-7zM90 507h1v1h-1zM96 507h1v1h-1zM90 508h7v1h-7zM90 509h1v1h-1zM96 509h1v1h-1zM90 510h7v1h-7zM90 511h1v1h-1zM90 512h8v1h-8zM89 513h1v1h-1zM92 513h1v1h-1zM94 513h1v1h-1zM97 513h1v1h-1zM88 514h1v1h-1zM91 514h1v1h-1zM94 514h1v1h-1zM97 514h1v1h-1zM90 515h1v1h-1zM93 515h1v1h-1zM97 515h1v1h-1zM89 516h1v1h-1zM92 516h1v1h-1zM95 516h2v1h-2zM107 506h3v1h-3zM101 507h6v1h-6zM104 508h1v1h-1zM108 508h1v1h-1zM102 509h6v1h-6zM105 510h1v1h-1zM104 511h1v1h-1zM108 511h1v1h-1zM101 512h9v1h-9zM105 513h1v1h-1zM109 513h1v1h-1zM103 514h1v1h-1zM105 514h1v1h-1zM107 514h1v1h-1zM102 515h1v1h-1zM105 515h1v1h-1zM108 515h1v1h-1zM101 516h1v1h-1zM104 516h2v1h-2zM109 516h1v1h-1zM114 506h1v1h-1zM119 506h1v1h-1zM114 507h1v1h-1zM116 507h7v1h-7zM113 508h1v1h-1zM118 508h1v1h-1zM113 509h1v1h-1zM115 509h1v1h-1zM117 509h1v1h-1zM121 509h1v1h-1zM112 510h3v1h-3zM116 510h7v1h-7zM114 511h1v1h-1zM118 511h1v1h-1zM120 511h1v1h-1zM122 511h1v1h-1zM113 512h1v1h-1zM118 512h1v1h-1zM120 512h1v1h-1zM112 513h4v1h-4zM118 513h1v1h-1zM120 513h1v1h-1zM118 514h1v1h-1zM120 514h1v1h-1zM122 514h1v1h-1zM114 515h2v1h-2zM117 515h1v1h-1zM120 515h1v1h-1zM122 515h1v1h-1zM112 516h2v1h-2zM116 516h1v1h-1zM120 516h3v1h-3z" fill="#000"/><rect x="17" y="518" width="1" height="1" fill="#A0A0A0" /><rect x="17" y="520" width="1" height="1" fill="#A0A0A0" /><rect x="17" y="522" width="1" height="1" fill="#A0A0A0" /><rect x="17" y="524" width="1" height="1" fill="#A0A0A0" /><rect x="17" y="526" width="1" height="1" fill="#A0A0A0" /><rect x="17" y="528" width="1" height="1" fill="#A0A0A0" /><rect x="17" y="530" width="1" height="1" fill="#A0A0A0" /><rect x="23" y="530" width="1" height="1" fill="#A0A0A0" /><rect x="25" y="530" width="1" height="1" fill="#A0A0A0" /><rect x="27" y="530" width="1" height="1" fill="#A0A0A0" /><rect x="13.5" y="525.5" width="8" height="8" fill="#F4F4F4" stroke="#7A8AA8"/><rect x="15" y="529" width="5" height="1" fill="#000" /><rect x="17" y="527" width="1" height="5" fill="#000" /><path d="M56 524h1v1h-1zM54 525h7v1h-7zM54 526h1v1h-1zM60 526h1v1h-1zM54 527h1v1h-1zM60 527h1v1h-1zM54 528h7v1h-7zM54 529h1v1h-1zM60 529h1v1h-1zM54 530h7v1h-7zM54 531h1v1h-1zM60 531h1v1h-1zM54 532h1v1h-1zM60 532h1v1h-1zM54 533h7v1h-7zM54 534h1v1h-1zM60 534h1v1h-1zM69 524h1v1h-1zM65 525h10v1h-10zM65 526h1v1h-1zM74 526h1v1h-1zM64 527h1v1h-1zM73 527h1v1h-1zM66 528h8v1h-8zM69 529h1v1h-1zM66 530h1v1h-1zM69 530h1v1h-1zM66 531h1v1h-1zM69 531h4v1h-4zM66 532h1v1h-1zM69 532h1v1h-1zM65 533h1v1h-1zM67 533h1v1h-1zM69 533h1v1h-1zM64 534h1v1h-1zM68 534h7v1h-7zM80 524h1v1h-1zM84 524h1v1h-1zM78 525h1v1h-1zM81 525h1v1h-1zM84 525h1v1h-1zM78 526h1v1h-1zM81 526h1v1h-1zM84 526h1v1h-1zM78 527h1v1h-1zM83 527h1v1h-1zM79 528h1v1h-1zM83 528h1v1h-1zM79 529h1v1h-1zM82 529h1v1h-1zM80 530h1v1h-1zM82 530h1v1h-1zM81 531h1v1h-1zM80 532h1v1h-1zM82 532h1v1h-1zM78 533h2v1h-2zM83 533h2v1h-2zM76 534h2v1h-2zM85 534h2v1h-2zM90 524h1v1h-1zM94 524h1v1h-1zM90 525h1v1h-1zM94 525h1v1h-1zM97 525h2v1h-2zM88 526h5v1h-5zM94 526h3v1h-3zM90 527h1v1h-1zM94 527h1v1h-1zM98 527h1v1h-1zM90 528h1v1h-1zM92 528h1v1h-1zM94 528h5v1h-5zM90 529h2v1h-2zM89 530h2v1h-2zM94 530h5v1h-5zM88 531h1v1h-1zM90 531h1v1h-1zM94 531h1v1h-1zM98 531h1v1h-1zM90 532h1v1h-1zM94 532h5v1h-5zM90 533h1v1h-1zM94 533h1v1h-1zM98 533h1v1h-1zM88 534h3v1h-3zM94 534h5v1h-5zM102 524h1v1h-1zM105 524h5v1h-5zM102 525h1v1h-1zM100 526h5v1h-5zM102 527h1v1h-1zM104 527h7v1h-7zM102 528h1v1h-1zM107 528h1v1h-1zM101 529h3v1h-3zM107 529h1v1h-1zM101 530h2v1h-2zM105 530h1v1h-1zM107 530h1v1h-1zM109 530h1v1h-1zM100 531h1v1h-1zM102 531h1v1h-1zM105 531h1v1h-1zM107 531h1v1h-1zM110 531h1v1h-1zM102 532h1v1h-1zM104 532h1v1h-1zM107 532h1v1h-1zM110 532h1v1h-1zM102 533h1v1h-1zM107 533h1v1h-1zM102 534h1v1h-1zM106 534h2v1h-2z" fill="#000"/><circle cx="36" cy="471" r="4" fill="#E8B828" stroke="#A07810" stroke-width="0.8" shape-rendering="auto"/><circle cx="42" cy="472" r="4" fill="#E8B828" stroke="#A07810" stroke-width="0.8" shape-rendering="auto"/><path d="M30,482 q0,-7 6,-7 q6,0 6,7 z" fill="#2CB02C" shape-rendering="auto"/><path d="M36,483 q0,-8 6,-8 q6,0 6,8 z" fill="#D8A820" stroke="#A07810" stroke-width="0.8" shape-rendering="auto"/><rect x="31.5" y="485.5" width="13" height="13" rx="2" fill="#F4DC70" stroke="#C09A28" shape-rendering="auto"/><text x="35" y="496" font-family="Liberation Serif" font-style="italic" font-size="12" fill="#806010">f</text><rect x="31.5" y="521.5" width="13" height="13" rx="2" fill="#F4DC70" stroke="#C09A28" shape-rendering="auto"/><text x="35" y="532" font-family="Liberation Serif" font-style="italic" font-size="12" fill="#806010">f</text><path d="M41,531 l3.5,3.5 l-3.5,3.5 l-3.5,-3.5 z" fill="#F4D050" stroke="#A88010" stroke-width="0.8" shape-rendering="auto"/><path d="M34,510 L41,517 L44,510 Z" fill="#F4E080" stroke="#B89020" stroke-width="0.8" shape-rendering="auto"/><ellipse cx="38" cy="508" rx="8" ry="3" fill="#58A8E8" stroke="#2070B8" stroke-width="0.8" shape-rendering="auto"/><ellipse cx="38" cy="506" rx="4" ry="2.5" fill="#80C8F8" stroke="#2070B8" stroke-width="0.6" shape-rendering="auto"/><path d="M42,513 l3.5,3.5 l-3.5,3.5 l-3.5,-3.5 z" fill="#F4D050" stroke="#A88010" stroke-width="0.8" shape-rendering="auto"/><rect x="240" y="447" width="16" height="90" fill="#F4F7FC" /><rect x="240.5" y="448.5" width="15" height="15" rx="1.5" fill="#C6D6F2" stroke="#9AB0D8" shape-rendering="auto"/><rect x="242" y="450" width="12" height="6" fill="#DCE7F8" /><path d="M244.0,458.0 L248.0,454.0 L252.0,458.0" stroke="#4D5A78" stroke-width="2" fill="none" shape-rendering="auto"/><rect x="240.5" y="465.5" width="15" height="36" rx="1.5" fill="#C4D4F0" stroke="#98AEDA" shape-rendering="auto"/><rect x="242" y="467" width="6" height="33" fill="#DDE8F8" /><rect x="244" y="480" width="8" height="1" fill="#8898B8" /><rect x="244" y="482" width="8" height="1" fill="#8898B8" /><rect x="244" y="484" width="8" height="1" fill="#8898B8" /><rect x="244" y="486" width="8" height="1" fill="#8898B8" /><rect x="240.5" y="520.5" width="15" height="16" rx="1.5" fill="#C6D6F2" stroke="#9AB0D8" shape-rendering="auto"/><rect x="242" y="522" width="12" height="6" fill="#DCE7F8" /><path d="M244.0,526.5 L248.0,530.5 L252.0,526.5" stroke="#4D5A78" stroke-width="2" fill="none" shape-rendering="auto"/><rect x="3" y="537" width="254" height="20" fill="#ECEAEC" /><rect x="3" y="537" width="254" height="1" fill="#000000" /><rect x="6" y="537" width="43" height="18" fill="#FFFFFF" /><rect x="6" y="537" width="1" height="18" fill="#000" /><rect x="48" y="537" width="1" height="18" fill="#000" /><rect x="6" y="554" width="43" height="1" fill="#000" /><rect x="49" y="538" width="1" height="18" fill="#808080" /><rect x="7" y="555" width="43" height="1" fill="#808080" /><path d="M17 540h1v1h-1zM20 540h1v1h-1zM23 540h1v1h-1zM16 541h10v1h-10zM16 542h1v1h-1zM25 542h1v1h-1zM15 543h1v1h-1zM18 543h6v1h-6zM25 543h1v1h-1zM18 544h1v1h-1zM23 544h1v1h-1zM18 545h6v1h-6zM20 546h1v1h-1zM17 547h8v1h-8zM17 548h1v1h-1zM20 548h1v1h-1zM24 548h1v1h-1zM17 549h1v1h-1zM20 549h1v1h-1zM23 549h2v1h-2zM20 550h1v1h-1zM28 540h9v1h-9zM28 541h1v1h-1zM32 541h1v1h-1zM36 541h1v1h-1zM28 542h1v1h-1zM32 542h1v1h-1zM36 542h1v1h-1zM28 543h9v1h-9zM28 544h1v1h-1zM32 544h1v1h-1zM36 544h1v1h-1zM28 545h1v1h-1zM32 545h1v1h-1zM36 545h1v1h-1zM28 546h9v1h-9zM28 547h1v1h-1zM32 547h1v1h-1zM36 547h1v1h-1zM28 548h1v1h-1zM32 548h1v1h-1zM36 548h1v1h-1zM27 549h1v1h-1zM32 549h1v1h-1zM36 549h1v1h-1zM27 550h1v1h-1zM32 550h1v1h-1zM35 550h2v1h-2z" fill="#000"/><path d="M62 540h1v1h-1zM65 540h1v1h-1zM62 541h1v1h-1zM65 541h1v1h-1zM59 542h1v1h-1zM62 542h1v1h-1zM65 542h5v1h-5zM59 543h1v1h-1zM62 543h1v1h-1zM64 543h1v1h-1zM68 543h1v1h-1zM59 544h1v1h-1zM62 544h2v1h-2zM65 544h1v1h-1zM68 544h1v1h-1zM59 545h1v1h-1zM62 545h1v1h-1zM65 545h1v1h-1zM68 545h1v1h-1zM59 546h1v1h-1zM61 546h2v1h-2zM65 546h1v1h-1zM67 546h1v1h-1zM59 547h2v1h-2zM62 547h1v1h-1zM66 547h1v1h-1zM59 548h1v1h-1zM62 548h1v1h-1zM66 548h2v1h-2zM62 549h1v1h-1zM65 549h1v1h-1zM68 549h1v1h-1zM62 550h1v1h-1zM64 550h1v1h-1zM69 550h1v1h-1zM75 540h1v1h-1zM78 540h1v1h-1zM71 541h11v1h-11zM75 542h1v1h-1zM78 542h1v1h-1zM80 542h1v1h-1zM71 543h1v1h-1zM73 543h9v1h-9zM71 544h1v1h-1zM73 544h1v1h-1zM75 544h1v1h-1zM77 544h1v1h-1zM79 544h1v1h-1zM71 545h3v1h-3zM75 545h5v1h-5zM81 545h1v1h-1zM73 546h1v1h-1zM75 546h1v1h-1zM79 546h1v1h-1zM81 546h1v1h-1zM71 547h3v1h-3zM75 547h6v1h-6zM71 548h1v1h-1zM73 548h1v1h-1zM75 548h1v1h-1zM77 548h1v1h-1zM79 548h1v1h-1zM81 548h1v1h-1zM71 549h1v1h-1zM73 549h1v1h-1zM75 549h5v1h-5zM81 549h1v1h-1zM72 550h1v1h-1zM78 550h1v1h-1zM80 550h2v1h-2zM88 540h1v1h-1zM84 541h9v1h-9zM88 542h1v1h-1zM85 543h1v1h-1zM88 543h1v1h-1zM91 543h1v1h-1zM86 544h1v1h-1zM88 544h1v1h-1zM90 544h1v1h-1zM83 545h11v1h-11zM88 546h1v1h-1zM87 547h1v1h-1zM89 547h1v1h-1zM86 548h1v1h-1zM90 548h1v1h-1zM85 549h1v1h-1zM91 549h1v1h-1zM83 550h2v1h-2zM92 550h2v1h-2z" fill="#909090"/><rect x="107" y="542" width="1" height="11" fill="#909090" /><rect x="3" y="537" width="1" height="21" fill="#A8A8A8" /><rect x="0" y="560" width="262" height="1" fill="#A8A7A8" /><rect x="0" y="561" width="1024" height="1" fill="#FFFFFF" /><rect x="0" y="557" width="258" height="1" fill="#FFFFFF" /><rect x="262" y="102" width="760" height="437" fill="#000000" /><line x1="297.5" y1="105" x2="297.5" y2="282" stroke="#7B8DA0" stroke-width="1" stroke-dasharray="3 3" stroke-dashoffset="0"/><line x1="329.5" y1="105" x2="329.5" y2="282" stroke="#7B8DA0" stroke-width="1" stroke-dasharray="3 3" stroke-dashoffset="0"/><line x1="361.5" y1="105" x2="361.5" y2="282" stroke="#7B8DA0" stroke-width="1" stroke-dasharray="3 3" stroke-dashoffset="0"/><line x1="393.5" y1="105" x2="393.5" y2="282" stroke="#7B8DA0" stroke-width="1" stroke-dasharray="3 3" stroke-dashoffset="0"/><line x1="425.5" y1="105" x2="425.5" y2="282" stroke="#7B8DA0" stroke-width="1" stroke-dasharray="3 3" stroke-dashoffset="0"/><line x1="457.5" y1="105" x2="457.5" y2="282" stroke="#7B8DA0" stroke-width="1" stroke-dasharray="3 3" stroke-dashoffset="0"/><line x1="489.5" y1="105" x2="489.5" y2="282" stroke="#7B8DA0" stroke-width="1" stroke-dasharray="3 3" stroke-dashoffset="0"/><line x1="521.5" y1="105" x2="521.5" y2="282" stroke="#7B8DA0" stroke-width="1" stroke-dasharray="3 3" stroke-dashoffset="0"/><line x1="553.5" y1="105" x2="553.5" y2="282" stroke="#7B8DA0" stroke-width="1" stroke-dasharray="3 3" stroke-dashoffset="0"/><line x1="585.5" y1="105" x2="585.5" y2="282" stroke="#7B8DA0" stroke-width="1" stroke-dasharray="3 3" stroke-dashoffset="0"/><line x1="617.5" y1="105" x2="617.5" y2="282" stroke="#7B8DA0" stroke-width="1" stroke-dasharray="3 3" stroke-dashoffset="0"/><line x1="649.5" y1="105" x2="649.5" y2="282" stroke="#7B8DA0" stroke-width="1" stroke-dasharray="3 3" stroke-dashoffset="0"/><line x1="681.5" y1="105" x2="681.5" y2="282" stroke="#7B8DA0" stroke-width="1" stroke-dasharray="3 3" stroke-dashoffset="0"/><line x1="713.5" y1="105" x2="713.5" y2="282" stroke="#7B8DA0" stroke-width="1" stroke-dasharray="3 3" stroke-dashoffset="0"/><line x1="745.5" y1="105" x2="745.5" y2="282" stroke="#7B8DA0" stroke-width="1" stroke-dasharray="3 3" stroke-dashoffset="0"/><line x1="777.5" y1="105" x2="777.5" y2="282" stroke="#7B8DA0" stroke-width="1" stroke-dasharray="3 3" stroke-dashoffset="0"/><line x1="809.5" y1="105" x2="809.5" y2="282" stroke="#7B8DA0" stroke-width="1" stroke-dasharray="3 3" stroke-dashoffset="0"/><line x1="841.5" y1="105" x2="841.5" y2="282" stroke="#7B8DA0" stroke-width="1" stroke-dasharray="3 3" stroke-dashoffset="0"/><line x1="873.5" y1="105" x2="873.5" y2="282" stroke="#7B8DA0" stroke-width="1" stroke-dasharray="3 3" stroke-dashoffset="0"/><line x1="905.5" y1="105" x2="905.5" y2="282" stroke="#7B8DA0" stroke-width="1" stroke-dasharray="3 3" stroke-dashoffset="0"/><line x1="937.5" y1="105" x2="937.5" y2="282" stroke="#7B8DA0" stroke-width="1" stroke-dasharray="3 3" stroke-dashoffset="0"/><line x1="969.5" y1="105" x2="969.5" y2="282" stroke="#7B8DA0" stroke-width="1" stroke-dasharray="3 3" stroke-dashoffset="0"/><line x1="297.5" y1="285" x2="297.5" y2="342" stroke="#7B8DA0" stroke-width="1" stroke-dasharray="3 3" stroke-dashoffset="0"/><line x1="329.5" y1="285" x2="329.5" y2="342" stroke="#7B8DA0" stroke-width="1" stroke-dasharray="3 3" stroke-dashoffset="0"/><line x1="361.5" y1="285" x2="361.5" y2="342" stroke="#7B8DA0" stroke-width="1" stroke-dasharray="3 3" stroke-dashoffset="0"/><line x1="393.5" y1="285" x2="393.5" y2="342" stroke="#7B8DA0" stroke-width="1" stroke-dasharray="3 3" stroke-dashoffset="0"/><line x1="425.5" y1="285" x2="425.5" y2="342" stroke="#7B8DA0" stroke-width="1" stroke-dasharray="3 3" stroke-dashoffset="0"/><line x1="457.5" y1="285" x2="457.5" y2="342" stroke="#7B8DA0" stroke-width="1" stroke-dasharray="3 3" stroke-dashoffset="0"/><line x1="489.5" y1="285" x2="489.5" y2="342" stroke="#7B8DA0" stroke-width="1" stroke-dasharray="3 3" stroke-dashoffset="0"/><line x1="521.5" y1="285" x2="521.5" y2="342" stroke="#7B8DA0" stroke-width="1" stroke-dasharray="3 3" stroke-dashoffset="0"/><line x1="553.5" y1="285" x2="553.5" y2="342" stroke="#7B8DA0" stroke-width="1" stroke-dasharray="3 3" stroke-dashoffset="0"/><line x1="585.5" y1="285" x2="585.5" y2="342" stroke="#7B8DA0" stroke-width="1" stroke-dasharray="3 3" stroke-dashoffset="0"/><line x1="617.5" y1="285" x2="617.5" y2="342" stroke="#7B8DA0" stroke-width="1" stroke-dasharray="3 3" stroke-dashoffset="0"/><line x1="649.5" y1="285" x2="649.5" y2="342" stroke="#7B8DA0" stroke-width="1" stroke-dasharray="3 3" stroke-dashoffset="0"/><line x1="681.5" y1="285" x2="681.5" y2="342" stroke="#7B8DA0" stroke-width="1" stroke-dasharray="3 3" stroke-dashoffset="0"/><line x1="713.5" y1="285" x2="713.5" y2="342" stroke="#7B8DA0" stroke-width="1" stroke-dasharray="3 3" stroke-dashoffset="0"/><line x1="745.5" y1="285" x2="745.5" y2="342" stroke="#7B8DA0" stroke-width="1" stroke-dasharray="3 3" stroke-dashoffset="0"/><line x1="777.5" y1="285" x2="777.5" y2="342" stroke="#7B8DA0" stroke-width="1" stroke-dasharray="3 3" stroke-dashoffset="0"/><line x1="809.5" y1="285" x2="809.5" y2="342" stroke="#7B8DA0" stroke-width="1" stroke-dasharray="3 3" stroke-dashoffset="0"/><line x1="841.5" y1="285" x2="841.5" y2="342" stroke="#7B8DA0" stroke-width="1" stroke-dasharray="3 3" stroke-dashoffset="0"/><line x1="873.5" y1="285" x2="873.5" y2="342" stroke="#7B8DA0" stroke-width="1" stroke-dasharray="3 3" stroke-dashoffset="0"/><line x1="905.5" y1="285" x2="905.5" y2="342" stroke="#7B8DA0" stroke-width="1" stroke-dasharray="3 3" stroke-dashoffset="0"/><line x1="937.5" y1="285" x2="937.5" y2="342" stroke="#7B8DA0" stroke-width="1" stroke-dasharray="3 3" stroke-dashoffset="0"/><line x1="969.5" y1="285" x2="969.5" y2="342" stroke="#7B8DA0" stroke-width="1" stroke-dasharray="3 3" stroke-dashoffset="0"/><line x1="297.5" y1="345" x2="297.5" y2="402" stroke="#7B8DA0" stroke-width="1" stroke-dasharray="3 3" stroke-dashoffset="0"/><line x1="329.5" y1="345" x2="329.5" y2="402" stroke="#7B8DA0" stroke-width="1" stroke-dasharray="3 3" stroke-dashoffset="0"/><line x1="361.5" y1="345" x2="361.5" y2="402" stroke="#7B8DA0" stroke-width="1" stroke-dasharray="3 3" stroke-dashoffset="0"/><line x1="393.5" y1="345" x2="393.5" y2="402" stroke="#7B8DA0" stroke-width="1" stroke-dasharray="3 3" stroke-dashoffset="0"/><line x1="425.5" y1="345" x2="425.5" y2="402" stroke="#7B8DA0" stroke-width="1" stroke-dasharray="3 3" stroke-dashoffset="0"/><line x1="457.5" y1="345" x2="457.5" y2="402" stroke="#7B8DA0" stroke-width="1" stroke-dasharray="3 3" stroke-dashoffset="0"/><line x1="489.5" y1="345" x2="489.5" y2="402" stroke="#7B8DA0" stroke-width="1" stroke-dasharray="3 3" stroke-dashoffset="0"/><line x1="521.5" y1="345" x2="521.5" y2="402" stroke="#7B8DA0" stroke-width="1" stroke-dasharray="3 3" stroke-dashoffset="0"/><line x1="553.5" y1="345" x2="553.5" y2="402" stroke="#7B8DA0" stroke-width="1" stroke-dasharray="3 3" stroke-dashoffset="0"/><line x1="585.5" y1="345" x2="585.5" y2="402" stroke="#7B8DA0" stroke-width="1" stroke-dasharray="3 3" stroke-dashoffset="0"/><line x1="617.5" y1="345" x2="617.5" y2="402" stroke="#7B8DA0" stroke-width="1" stroke-dasharray="3 3" stroke-dashoffset="0"/><line x1="649.5" y1="345" x2="649.5" y2="402" stroke="#7B8DA0" stroke-width="1" stroke-dasharray="3 3" stroke-dashoffset="0"/><line x1="681.5" y1="345" x2="681.5" y2="402" stroke="#7B8DA0" stroke-width="1" stroke-dasharray="3 3" stroke-dashoffset="0"/><line x1="713.5" y1="345" x2="713.5" y2="402" stroke="#7B8DA0" stroke-width="1" stroke-dasharray="3 3" stroke-dashoffset="0"/><line x1="745.5" y1="345" x2="745.5" y2="402" stroke="#7B8DA0" stroke-width="1" stroke-dasharray="3 3" stroke-dashoffset="0"/><line x1="777.5" y1="345" x2="777.5" y2="402" stroke="#7B8DA0" stroke-width="1" stroke-dasharray="3 3" stroke-dashoffset="0"/><line x1="809.5" y1="345" x2="809.5" y2="402" stroke="#7B8DA0" stroke-width="1" stroke-dasharray="3 3" stroke-dashoffset="0"/><line x1="841.5" y1="345" x2="841.5" y2="402" stroke="#7B8DA0" stroke-width="1" stroke-dasharray="3 3" stroke-dashoffset="0"/><line x1="873.5" y1="345" x2="873.5" y2="402" stroke="#7B8DA0" stroke-width="1" stroke-dasharray="3 3" stroke-dashoffset="0"/><line x1="905.5" y1="345" x2="905.5" y2="402" stroke="#7B8DA0" stroke-width="1" stroke-dasharray="3 3" stroke-dashoffset="0"/><line x1="937.5" y1="345" x2="937.5" y2="402" stroke="#7B8DA0" stroke-width="1" stroke-dasharray="3 3" stroke-dashoffset="0"/><line x1="969.5" y1="345" x2="969.5" y2="402" stroke="#7B8DA0" stroke-width="1" stroke-dasharray="3 3" stroke-dashoffset="0"/><line x1="297.5" y1="405" x2="297.5" y2="462" stroke="#7B8DA0" stroke-width="1" stroke-dasharray="3 3" stroke-dashoffset="0"/><line x1="329.5" y1="405" x2="329.5" y2="462" stroke="#7B8DA0" stroke-width="1" stroke-dasharray="3 3" stroke-dashoffset="0"/><line x1="361.5" y1="405" x2="361.5" y2="462" stroke="#7B8DA0" stroke-width="1" stroke-dasharray="3 3" stroke-dashoffset="0"/><line x1="393.5" y1="405" x2="393.5" y2="462" stroke="#7B8DA0" stroke-width="1" stroke-dasharray="3 3" stroke-dashoffset="0"/><line x1="425.5" y1="405" x2="425.5" y2="462" stroke="#7B8DA0" stroke-width="1" stroke-dasharray="3 3" stroke-dashoffset="0"/><line x1="457.5" y1="405" x2="457.5" y2="462" stroke="#7B8DA0" stroke-width="1" stroke-dasharray="3 3" stroke-dashoffset="0"/><line x1="489.5" y1="405" x2="489.5" y2="462" stroke="#7B8DA0" stroke-width="1" stroke-dasharray="3 3" stroke-dashoffset="0"/><line x1="521.5" y1="405" x2="521.5" y2="462" stroke="#7B8DA0" stroke-width="1" stroke-dasharray="3 3" stroke-dashoffset="0"/><line x1="553.5" y1="405" x2="553.5" y2="462" stroke="#7B8DA0" stroke-width="1" stroke-dasharray="3 3" stroke-dashoffset="0"/><line x1="585.5" y1="405" x2="585.5" y2="462" stroke="#7B8DA0" stroke-width="1" stroke-dasharray="3 3" stroke-dashoffset="0"/><line x1="617.5" y1="405" x2="617.5" y2="462" stroke="#7B8DA0" stroke-width="1" stroke-dasharray="3 3" stroke-dashoffset="0"/><line x1="649.5" y1="405" x2="649.5" y2="462" stroke="#7B8DA0" stroke-width="1" stroke-dasharray="3 3" stroke-dashoffset="0"/><line x1="681.5" y1="405" x2="681.5" y2="462" stroke="#7B8DA0" stroke-width="1" stroke-dasharray="3 3" stroke-dashoffset="0"/><line x1="713.5" y1="405" x2="713.5" y2="462" stroke="#7B8DA0" stroke-width="1" stroke-dasharray="3 3" stroke-dashoffset="0"/><line x1="745.5" y1="405" x2="745.5" y2="462" stroke="#7B8DA0" stroke-width="1" stroke-dasharray="3 3" stroke-dashoffset="0"/><line x1="777.5" y1="405" x2="777.5" y2="462" stroke="#7B8DA0" stroke-width="1" stroke-dasharray="3 3" stroke-dashoffset="0"/><line x1="809.5" y1="405" x2="809.5" y2="462" stroke="#7B8DA0" stroke-width="1" stroke-dasharray="3 3" stroke-dashoffset="0"/><line x1="841.5" y1="405" x2="841.5" y2="462" stroke="#7B8DA0" stroke-width="1" stroke-dasharray="3 3" stroke-dashoffset="0"/><line x1="873.5" y1="405" x2="873.5" y2="462" stroke="#7B8DA0" stroke-width="1" stroke-dasharray="3 3" stroke-dashoffset="0"/><line x1="905.5" y1="405" x2="905.5" y2="462" stroke="#7B8DA0" stroke-width="1" stroke-dasharray="3 3" stroke-dashoffset="0"/><line x1="937.5" y1="405" x2="937.5" y2="462" stroke="#7B8DA0" stroke-width="1" stroke-dasharray="3 3" stroke-dashoffset="0"/><line x1="969.5" y1="405" x2="969.5" y2="462" stroke="#7B8DA0" stroke-width="1" stroke-dasharray="3 3" stroke-dashoffset="0"/><line x1="297.5" y1="465" x2="297.5" y2="521" stroke="#7B8DA0" stroke-width="1" stroke-dasharray="3 3" stroke-dashoffset="0"/><line x1="329.5" y1="465" x2="329.5" y2="521" stroke="#7B8DA0" stroke-width="1" stroke-dasharray="3 3" stroke-dashoffset="0"/><line x1="361.5" y1="465" x2="361.5" y2="521" stroke="#7B8DA0" stroke-width="1" stroke-dasharray="3 3" stroke-dashoffset="0"/><line x1="393.5" y1="465" x2="393.5" y2="521" stroke="#7B8DA0" stroke-width="1" stroke-dasharray="3 3" stroke-dashoffset="0"/><line x1="425.5" y1="465" x2="425.5" y2="521" stroke="#7B8DA0" stroke-width="1" stroke-dasharray="3 3" stroke-dashoffset="0"/><line x1="457.5" y1="465" x2="457.5" y2="521" stroke="#7B8DA0" stroke-width="1" stroke-dasharray="3 3" stroke-dashoffset="0"/><line x1="489.5" y1="465" x2="489.5" y2="521" stroke="#7B8DA0" stroke-width="1" stroke-dasharray="3 3" stroke-dashoffset="0"/><line x1="521.5" y1="465" x2="521.5" y2="521" stroke="#7B8DA0" stroke-width="1" stroke-dasharray="3 3" stroke-dashoffset="0"/><line x1="553.5" y1="465" x2="553.5" y2="521" stroke="#7B8DA0" stroke-width="1" stroke-dasharray="3 3" stroke-dashoffset="0"/><line x1="585.5" y1="465" x2="585.5" y2="521" stroke="#7B8DA0" stroke-width="1" stroke-dasharray="3 3" stroke-dashoffset="0"/><line x1="617.5" y1="465" x2="617.5" y2="521" stroke="#7B8DA0" stroke-width="1" stroke-dasharray="3 3" stroke-dashoffset="0"/><line x1="649.5" y1="465" x2="649.5" y2="521" stroke="#7B8DA0" stroke-width="1" stroke-dasharray="3 3" stroke-dashoffset="0"/><line x1="681.5" y1="465" x2="681.5" y2="521" stroke="#7B8DA0" stroke-width="1" stroke-dasharray="3 3" stroke-dashoffset="0"/><line x1="713.5" y1="465" x2="713.5" y2="521" stroke="#7B8DA0" stroke-width="1" stroke-dasharray="3 3" stroke-dashoffset="0"/><line x1="745.5" y1="465" x2="745.5" y2="521" stroke="#7B8DA0" stroke-width="1" stroke-dasharray="3 3" stroke-dashoffset="0"/><line x1="777.5" y1="465" x2="777.5" y2="521" stroke="#7B8DA0" stroke-width="1" stroke-dasharray="3 3" stroke-dashoffset="0"/><line x1="809.5" y1="465" x2="809.5" y2="521" stroke="#7B8DA0" stroke-width="1" stroke-dasharray="3 3" stroke-dashoffset="0"/><line x1="841.5" y1="465" x2="841.5" y2="521" stroke="#7B8DA0" stroke-width="1" stroke-dasharray="3 3" stroke-dashoffset="0"/><line x1="873.5" y1="465" x2="873.5" y2="521" stroke="#7B8DA0" stroke-width="1" stroke-dasharray="3 3" stroke-dashoffset="0"/><line x1="905.5" y1="465" x2="905.5" y2="521" stroke="#7B8DA0" stroke-width="1" stroke-dasharray="3 3" stroke-dashoffset="0"/><line x1="937.5" y1="465" x2="937.5" y2="521" stroke="#7B8DA0" stroke-width="1" stroke-dasharray="3 3" stroke-dashoffset="0"/><line x1="969.5" y1="465" x2="969.5" y2="521" stroke="#7B8DA0" stroke-width="1" stroke-dasharray="3 3" stroke-dashoffset="0"/><line x1="265" y1="131.5" x2="982" y2="131.5" stroke="#7B8DA0" stroke-width="1" stroke-dasharray="3 3" stroke-dashoffset="0"/><line x1="265" y1="168.5" x2="982" y2="168.5" stroke="#7B8DA0" stroke-width="1" stroke-dasharray="3 3" stroke-dashoffset="0"/><line x1="265" y1="206.5" x2="982" y2="206.5" stroke="#7B8DA0" stroke-width="1" stroke-dasharray="3 3" stroke-dashoffset="0"/><line x1="265" y1="237.5" x2="982" y2="237.5" stroke="#7B8DA0" stroke-width="1" stroke-dasharray="3 3" stroke-dashoffset="0"/><line x1="265" y1="275.5" x2="982" y2="275.5" stroke="#7B8DA0" stroke-width="1" stroke-dasharray="3 3" stroke-dashoffset="0"/><line x1="265" y1="299.5" x2="982" y2="299.5" stroke="#7B8DA0" stroke-width="1" stroke-dasharray="3 3" stroke-dashoffset="0"/><line x1="265" y1="313.5" x2="982" y2="313.5" stroke="#7B8DA0" stroke-width="1" stroke-dasharray="3 3" stroke-dashoffset="0"/><line x1="265" y1="327.5" x2="982" y2="327.5" stroke="#7B8DA0" stroke-width="1" stroke-dasharray="3 3" stroke-dashoffset="0"/><line x1="265" y1="341.5" x2="982" y2="341.5" stroke="#7B8DA0" stroke-width="1" stroke-dasharray="3 3" stroke-dashoffset="0"/><line x1="265" y1="401.5" x2="982" y2="401.5" stroke="#7B8DA0" stroke-width="1" stroke-dasharray="3 3" stroke-dashoffset="0"/><line x1="265" y1="461.5" x2="982" y2="461.5" stroke="#7B8DA0" stroke-width="1" stroke-dasharray="3 3" stroke-dashoffset="0"/><line x1="265" y1="520.5" x2="982" y2="520.5" stroke="#7B8DA0" stroke-width="1" stroke-dasharray="3 3" stroke-dashoffset="0"/><line x1="265" y1="417.5" x2="982" y2="417.5" stroke="#C8C8C8" stroke-width="1" stroke-dasharray="3 3" stroke-dashoffset="0"/><line x1="265" y1="450.5" x2="982" y2="450.5" stroke="#C8C8C8" stroke-width="1" stroke-dasharray="3 3" stroke-dashoffset="0"/><rect x="264" y="104" width="719" height="1" fill="#FFFFFF" /><rect x="264" y="282" width="719" height="1" fill="#FFFFFF" /><rect x="264" y="104" width="1" height="179" fill="#FFFFFF" /><rect x="982" y="104" width="1" height="179" fill="#FFFFFF" /><rect x="264" y="284" width="719" height="1" fill="#FFFFFF" /><rect x="264" y="342" width="719" height="1" fill="#FFFFFF" /><rect x="264" y="284" width="1" height="59" fill="#FFFFFF" /><rect x="982" y="284" width="1" height="59" fill="#FFFFFF" /><rect x="264" y="344" width="719" height="1" fill="#FFFFFF" /><rect x="264" y="402" width="719" height="1" fill="#FFFFFF" /><rect x="264" y="344" width="1" height="59" fill="#FFFFFF" /><rect x="982" y="344" width="1" height="59" fill="#FFFFFF" /><rect x="264" y="404" width="719" height="1" fill="#FFFFFF" /><rect x="264" y="462" width="719" height="1" fill="#FFFFFF" /><rect x="264" y="404" width="1" height="59" fill="#FFFFFF" /><rect x="982" y="404" width="1" height="59" fill="#FFFFFF" /><rect x="264" y="464" width="719" height="1" fill="#FFFFFF" /><rect x="264" y="521" width="719" height="1" fill="#FFFFFF" /><rect x="264" y="464" width="1" height="58" fill="#FFFFFF" /><rect x="982" y="464" width="1" height="58" fill="#FFFFFF" /><rect x="983" y="131" width="3" height="1" fill="#FFFFFF" /><rect x="983" y="168" width="3" height="1" fill="#FFFFFF" /><rect x="983" y="206" width="3" height="1" fill="#FFFFFF" /><rect x="983" y="237" width="3" height="1" fill="#FFFFFF" /><rect x="983" y="275" width="3" height="1" fill="#FFFFFF" /><rect x="983" y="286" width="3" height="1" fill="#FFFFFF" /><rect x="983" y="299" width="3" height="1" fill="#FFFFFF" /><rect x="983" y="313" width="3" height="1" fill="#FFFFFF" /><rect x="983" y="327" width="3" height="1" fill="#FFFFFF" /><rect x="983" y="341" width="3" height="1" fill="#FFFFFF" /><rect x="983" y="346" width="3" height="1" fill="#FFFFFF" /><rect x="983" y="401" width="3" height="1" fill="#FFFFFF" /><rect x="983" y="406" width="3" height="1" fill="#FFFFFF" /><rect x="983" y="461" width="3" height="1" fill="#FFFFFF" /><rect x="983" y="466" width="3" height="1" fill="#FFFFFF" /><rect x="983" y="520" width="3" height="1" fill="#FFFFFF" /><line x1="265" y1="147.5" x2="982" y2="147.5" stroke="#22CC22" stroke-width="1" stroke-dasharray="9 6 3 6" stroke-dashoffset="0"/><rect x="265" y="156" width="717" height="1" fill="#8094A8" /><polyline points="265.0,198.0 297.0,200.5 320.6,203.4 346.0,208.9 379.2,216.1 406.5,220.0 437.8,221.4 462.0,217.1 514.7,217.5 536.2,217.5 579.2,221.4 614.3,230.4 630.0,239.6 653.4,248.4 662.0,252.3 673.7,252.3 681.5,249.9 691.3,248.4 706.9,241.5 716.7,233.7 740.1,210.3 759.7,191.7 768.4,180.0 787.0,159.7 798.7,151.9 812.4,147.0 824.1,143.1 832.9,142.1" fill="none" stroke="#F0E010" stroke-width="1.2" shape-rendering="auto"/><polyline points="265.0,197.6 270.8,198.5 273.7,200.5 277.2,214.8 281.5,212.2 286.4,210.9 290.3,206.4 293.2,209.3 296.8,201.1 301.0,204.4 305.0,202.5 309.9,204.4 319.6,204.4 325.5,217.1 329.4,210.3 333.3,221.0 341.1,212.2 345.0,213.2 348.9,225.9 352.8,221.4 357.7,227.9 361.6,239.6 368.4,229.8 377.2,222.0 381.5,211.2 385.0,217.1 389.0,216.0 393.2,211.2 397.2,216.1 401.6,212.2 406.1,216.7 410.4,216.1 421.2,215.2 425.7,228.8 432.9,222.0 437.8,226.9 444.6,225.3 449.5,212.2 455.4,211.2 462.0,212.2 465.9,217.1 472.7,220.4 480.6,216.7 488.4,214.2 493.2,217.1 499.1,214.2 506.0,216.1 509.9,221.0 514.7,218.1 520.6,223.4 524.5,225.3 530.4,220.0 536.2,221.4 545.0,225.3 552.8,223.9 559.7,220.0 565.5,224.5 570.4,220.6 577.2,225.3 581.1,222.0 585.0,237.6 592.9,245.4 596.8,242.5 601.6,243.5 605.5,237.6 608.9,248.8 613.4,245.4 618.2,263.0 623.1,267.9 629.0,270.2 633.9,260.1 637.8,256.6 642.7,260.1 648.5,257.1 653.4,248.8 657.3,251.3 662.0,252.3 668.8,235.7 672.7,233.7 677.6,230.8 681.5,224.5 685.4,224.5 689.3,229.2 694.2,220.0 701.0,212.2 705.4,226.5 709.9,214.8 713.2,214.2 714.7,203.6 717.7,185.0 721.6,183.1 725.5,168.5 729.4,180.2 733.3,174.3 737.2,163.6 741.1,171.4 745.0,166.5 748.9,153.8 752.8,148.9 757.7,145.0 761.6,129.4 769.4,141.1 773.3,141.1 778.2,130.8 787.0,139.2 793.8,148.4 805.5,147.0 809.5,141.1 813.4,144.1 817.3,150.9 820.2,145.0 824.1,142.1 828.0,143.7 833.9,155.8" fill="none" stroke="#22E022" stroke-width="1.2" shape-rendering="auto"/><text x="989" y="135" font-family="Liberation Sans" font-size="9.5" fill="#FFFFFF" text-anchor="start" textLength="26" lengthAdjust="spacingAndGlyphs" stroke="#FFFFFF" stroke-width="0.2" >1.3140</text><text x="989" y="172" font-family="Liberation Sans" font-size="9.5" fill="#FFFFFF" text-anchor="start" textLength="26" lengthAdjust="spacingAndGlyphs" stroke="#FFFFFF" stroke-width="0.2" >1.3110</text><text x="989" y="210" font-family="Liberation Sans" font-size="9.5" fill="#FFFFFF" text-anchor="start" textLength="26" lengthAdjust="spacingAndGlyphs" stroke="#FFFFFF" stroke-width="0.2" >1.3080</text><text x="989" y="241" font-family="Liberation Sans" font-size="9.5" fill="#FFFFFF" text-anchor="start" textLength="26" lengthAdjust="spacingAndGlyphs" stroke="#FFFFFF" stroke-width="0.2" >1.3055</text><text x="989" y="279" font-family="Liberation Sans" font-size="9.5" fill="#FFFFFF" text-anchor="start" textLength="26" lengthAdjust="spacingAndGlyphs" stroke="#FFFFFF" stroke-width="0.2" >1.3025</text><rect x="985" y="150" width="34" height="11" fill="#FFFFFF" /><text x="989" y="159" font-family="Liberation Sans" font-size="9.5" fill="#000000" text-anchor="start" textLength="26" lengthAdjust="spacingAndGlyphs" stroke="#000000" stroke-width="0.2" >1.3120</text><path d="M833,104 L843,104 L838,109 Z" fill="#8A9AAA" shape-rendering="auto"/><text x="269" y="116" font-family="Liberation Sans" font-size="9.5" fill="#FFFFFF" text-anchor="start" textLength="181" lengthAdjust="spacingAndGlyphs" stroke="#FFFFFF" stroke-width="0.2" >EURUSD,M5  1.3129 1.3129 1.3117 1.3120</text><text x="270" y="145" font-family="Liberation Sans" font-size="9.5" fill="#FFFFFF" text-anchor="start" textLength="62" lengthAdjust="spacingAndGlyphs" stroke="#FFFFFF" stroke-width="0.2" >#25875764 sell</text><text x="900" y="117" font-family="Liberation Sans" font-size="9.5" fill="#FFFFFF" text-anchor="start" textLength="63" lengthAdjust="spacingAndGlyphs" stroke="#FFFFFF" stroke-width="0.2" >MACD Sample</text><path d="M971,112 l6,5.5 M977,112 l-6,5.5" stroke="#FFF" stroke-width="1.7" shape-rendering="auto"/><text x="269" y="299" font-family="Liberation Sans" font-size="9.5" fill="#FFFFFF" text-anchor="start" textLength="180" lengthAdjust="spacingAndGlyphs" stroke="#FFFFFF" stroke-width="0.2" >ADX(14) 21.0547 +DI:15.9163 -DI:26.9615</text><polyline points="265.0,320.0 269.8,323.0 285.4,317.2 301.0,322.0 309.9,321.0 320.6,327.0 329.4,326.0 340.1,327.5 357.7,331.8 371.4,329.9 389.0,321.0 398.7,314.2 414.3,318.2 430.0,323.0 445.6,328.0 462.0,319.1 469.8,321.1 477.6,320.1 487.4,323.0 501.0,320.1 510.8,323.0 520.6,322.0 532.3,325.0 544.0,327.5 559.7,327.0 571.4,328.0 585.0,328.3 598.7,322.0 610.4,322.0 626.0,313.3 631.9,313.9 647.5,323.0 655.4,321.1 662.0,325.0 673.7,319.1 684.5,311.3 701.0,307.4 710.8,310.3 718.6,309.4 740.1,299.6 765.5,286.9 771.4,287.9 779.2,291.8 785.0,293.8 802.6,311.3 818.2,319.1 831.9,327.0" fill="none" stroke="#C0C0C0" stroke-width="1.1" shape-rendering="auto"/><polyline points="265.0,334.2 270.8,329.5 285.4,335.3 289.3,329.5 294.2,330.9 298.1,325.0 306.9,323.0 317.7,319.0 329.4,326.0 340.1,321.0 348.0,326.0 363.6,330.9 381.1,313.9 389.9,321.0 393.8,316.2 410.4,327.0 418.2,328.9 428.0,330.9 447.5,326.4 453.4,324.4 462.0,329.9 477.6,335.7 489.3,325.0 501.0,325.0 516.7,331.8 524.5,334.2 530.4,325.0 540.1,328.0 553.8,333.4 557.7,323.0 561.6,322.5 565.5,325.0 571.4,323.0 581.1,327.5 596.8,333.8 602.6,328.9 624.1,336.1 633.9,329.9 645.6,325.0 649.5,328.0 654.4,323.0 662.0,324.4 673.7,313.3 677.6,317.2 684.5,316.2 693.2,321.1 698.1,315.2 708.9,320.1 717.7,315.2 729.4,316.2 741.1,321.1 745.0,319.1 753.8,313.3 757.7,317.2 765.5,310.3 773.3,318.5 778.2,315.2 791.9,325.0 798.7,328.3 806.5,328.0 810.4,323.0 818.2,324.0 832.9,329.5" fill="none" stroke="#8EE010" stroke-width="1.1" shape-rendering="auto"/><polyline points="265.0,328.0 277.6,318.2 286.4,321.0 309.9,334.2 312.8,326.0 325.5,316.2 344.0,328.0 348.9,324.4 357.7,328.9 361.6,321.0 367.5,324.0 383.1,330.9 398.7,335.7 404.6,330.9 418.2,334.8 424.1,328.3 432.0,328.9 449.5,335.7 462.0,335.7 468.8,325.0 473.7,328.0 481.5,327.5 501.0,335.7 507.9,325.0 517.7,328.9 521.6,321.1 534.3,328.9 545.0,324.4 555.8,328.0 561.6,330.9 571.4,326.4 577.2,322.0 582.1,324.4 586.0,320.1 589.9,321.1 593.8,314.2 601.6,321.7 610.4,323.0 614.3,325.0 618.2,320.1 625.1,316.6 633.9,324.0 649.5,330.9 657.3,333.8 662.0,329.9 685.4,336.1 690.3,332.8 701.0,336.1 706.0,329.5 720.6,333.4 740.1,337.7 759.7,340.6 765.5,339.6 774.3,332.8 785.0,336.1 790.9,326.4 796.8,323.0 802.6,325.0 806.5,323.0 814.3,327.0 818.2,321.1 830.9,328.0 832.9,322.0" fill="none" stroke="#FF1010" stroke-width="1.1" shape-rendering="auto"/><text x="986" y="296" font-family="Liberation Sans" font-size="9.5" fill="#FFFFFF" text-anchor="start" textLength="11" lengthAdjust="spacingAndGlyphs" stroke="#FFFFFF" stroke-width="0.2" >75</text><text x="986" y="311" font-family="Liberation Sans" font-size="9.5" fill="#FFFFFF" text-anchor="start" textLength="11" lengthAdjust="spacingAndGlyphs" stroke="#FFFFFF" stroke-width="0.2" >56</text><text x="986" y="325" font-family="Liberation Sans" font-size="9.5" fill="#FFFFFF" text-anchor="start" textLength="11" lengthAdjust="spacingAndGlyphs" stroke="#FFFFFF" stroke-width="0.2" >37</text><text x="986" y="340" font-family="Liberation Sans" font-size="9.5" fill="#FFFFFF" text-anchor="start" textLength="11" lengthAdjust="spacingAndGlyphs" stroke="#FFFFFF" stroke-width="0.2" >18</text><text x="269" y="358" font-family="Liberation Sans" font-size="9.5" fill="#FFFFFF" text-anchor="start" textLength="49" lengthAdjust="spacingAndGlyphs" stroke="#FFFFFF" stroke-width="0.2" >Volumes 44</text><rect x="265" y="390" width="2" height="12" fill="#008A00" /><rect x="268" y="397" width="3" height="5" fill="#FF0000" /><rect x="272" y="396" width="3" height="6" fill="#008A00" /><rect x="276" y="381" width="3" height="21" fill="#008A00" /><rect x="280" y="393" width="3" height="9" fill="#FF0000" /><rect x="284" y="368" width="3" height="34" fill="#008A00" /><rect x="288" y="392" width="3" height="10" fill="#FF0000" /><rect x="292" y="391" width="3" height="11" fill="#008A00" /><rect x="296" y="390" width="3" height="12" fill="#008A00" /><rect x="300" y="387" width="3" height="15" fill="#008A00" /><rect x="304" y="390" width="3" height="12" fill="#FF0000" /><rect x="308" y="390" width="3" height="12" fill="#FF0000" /><rect x="312" y="387" width="3" height="15" fill="#008A00" /><rect x="316" y="389" width="3" height="13" fill="#FF0000" /><rect x="320" y="389" width="3" height="13" fill="#008A00" /><rect x="324" y="377" width="3" height="25" fill="#008A00" /><rect x="328" y="378" width="3" height="24" fill="#FF0000" /><rect x="332" y="362" width="3" height="40" fill="#008A00" /><rect x="336" y="379" width="3" height="23" fill="#FF0000" /><rect x="340" y="382" width="3" height="20" fill="#FF0000" /><rect x="344" y="386" width="3" height="16" fill="#FF0000" /><rect x="348" y="377" width="3" height="25" fill="#008A00" /><rect x="352" y="379" width="3" height="23" fill="#FF0000" /><rect x="356" y="394" width="3" height="8" fill="#FF0000" /><rect x="360" y="386" width="3" height="16" fill="#008A00" /><rect x="364" y="384" width="3" height="18" fill="#008A00" /><rect x="368" y="387" width="3" height="15" fill="#FF0000" /><rect x="372" y="389" width="3" height="13" fill="#FF0000" /><rect x="376" y="396" width="3" height="6" fill="#FF0000" /><rect x="380" y="388" width="3" height="14" fill="#008A00" /><rect x="384" y="386" width="3" height="16" fill="#008A00" /><rect x="388" y="394" width="3" height="8" fill="#FF0000" /><rect x="392" y="395" width="3" height="7" fill="#FF0000" /><rect x="396" y="394" width="3" height="8" fill="#008A00" /><rect x="400" y="397" width="3" height="5" fill="#FF0000" /><rect x="404" y="390" width="3" height="12" fill="#008A00" /><rect x="408" y="382" width="3" height="20" fill="#008A00" /><rect x="412" y="392" width="3" height="10" fill="#FF0000" /><rect x="416" y="384" width="3" height="18" fill="#008A00" /><rect x="420" y="389" width="3" height="13" fill="#FF0000" /><rect x="424" y="386" width="3" height="16" fill="#008A00" /><rect x="428" y="381" width="3" height="21" fill="#008A00" /><rect x="432" y="397" width="3" height="5" fill="#FF0000" /><rect x="436" y="396" width="3" height="6" fill="#008A00" /><rect x="440" y="394" width="3" height="8" fill="#008A00" /><rect x="444" y="384" width="3" height="18" fill="#008A00" /><rect x="448" y="393" width="3" height="9" fill="#FF0000" /><rect x="452" y="384" width="3" height="18" fill="#008A00" /><rect x="456" y="391" width="3" height="11" fill="#FF0000" /><rect x="460" y="398" width="3" height="4" fill="#FF0000" /><rect x="464" y="387" width="3" height="15" fill="#008A00" /><rect x="468" y="387" width="3" height="15" fill="#FF0000" /><rect x="472" y="391" width="3" height="11" fill="#FF0000" /><rect x="476" y="387" width="3" height="15" fill="#008A00" /><rect x="480" y="393" width="3" height="9" fill="#FF0000" /><rect x="484" y="389" width="3" height="13" fill="#008A00" /><rect x="488" y="391" width="3" height="11" fill="#FF0000" /><rect x="492" y="396" width="3" height="6" fill="#FF0000" /><rect x="496" y="397" width="3" height="5" fill="#FF0000" /><rect x="500" y="391" width="3" height="11" fill="#008A00" /><rect x="504" y="396" width="3" height="6" fill="#FF0000" /><rect x="508" y="391" width="3" height="11" fill="#008A00" /><rect x="512" y="391" width="3" height="11" fill="#008A00" /><rect x="516" y="393" width="3" height="9" fill="#FF0000" /><rect x="520" y="389" width="3" height="13" fill="#008A00" /><rect x="524" y="395" width="3" height="7" fill="#FF0000" /><rect x="528" y="391" width="3" height="11" fill="#008A00" /><rect x="532" y="393" width="3" height="9" fill="#FF0000" /><rect x="536" y="399" width="3" height="3" fill="#FF0000" /><rect x="540" y="397" width="3" height="5" fill="#008A00" /><rect x="544" y="394" width="3" height="8" fill="#008A00" /><rect x="548" y="396" width="3" height="6" fill="#FF0000" /><rect x="552" y="400" width="3" height="2" fill="#FF0000" /><rect x="556" y="394" width="3" height="8" fill="#008A00" /><rect x="560" y="389" width="3" height="13" fill="#008A00" /><rect x="564" y="390" width="3" height="12" fill="#FF0000" /><rect x="568" y="392" width="3" height="10" fill="#FF0000" /><rect x="572" y="390" width="3" height="12" fill="#008A00" /><rect x="576" y="385" width="3" height="17" fill="#008A00" /><rect x="580" y="384" width="3" height="18" fill="#008A00" /><rect x="584" y="387" width="3" height="15" fill="#FF0000" /><rect x="588" y="377" width="3" height="25" fill="#008A00" /><rect x="592" y="369" width="3" height="33" fill="#008A00" /><rect x="596" y="380" width="3" height="22" fill="#FF0000" /><rect x="600" y="382" width="3" height="20" fill="#FF0000" /><rect x="604" y="379" width="3" height="23" fill="#008A00" /><rect x="608" y="384" width="3" height="18" fill="#FF0000" /><rect x="612" y="386" width="3" height="16" fill="#FF0000" /><rect x="616" y="364" width="3" height="38" fill="#008A00" /><rect x="620" y="363" width="3" height="39" fill="#008A00" /><rect x="624" y="365" width="3" height="37" fill="#FF0000" /><rect x="628" y="385" width="3" height="17" fill="#FF0000" /><rect x="632" y="381" width="3" height="21" fill="#008A00" /><rect x="636" y="384" width="3" height="18" fill="#FF0000" /><rect x="640" y="382" width="3" height="20" fill="#008A00" /><rect x="644" y="371" width="3" height="31" fill="#008A00" /><rect x="648" y="379" width="3" height="23" fill="#FF0000" /><rect x="652" y="378" width="3" height="24" fill="#008A00" /><rect x="656" y="381" width="3" height="21" fill="#FF0000" /><rect x="660" y="386" width="3" height="16" fill="#FF0000" /><rect x="664" y="384" width="3" height="18" fill="#008A00" /><rect x="668" y="382" width="3" height="20" fill="#008A00" /><rect x="672" y="371" width="3" height="31" fill="#008A00" /><rect x="676" y="374" width="3" height="28" fill="#FF0000" /><rect x="680" y="373" width="3" height="29" fill="#008A00" /><rect x="684" y="373" width="3" height="29" fill="#008A00" /><rect x="688" y="374" width="3" height="28" fill="#FF0000" /><rect x="692" y="380" width="3" height="22" fill="#FF0000" /><rect x="696" y="373" width="3" height="29" fill="#008A00" /><rect x="700" y="374" width="3" height="28" fill="#FF0000" /><rect x="704" y="372" width="3" height="30" fill="#008A00" /><rect x="708" y="363" width="3" height="39" fill="#008A00" /><rect x="712" y="368" width="3" height="34" fill="#FF0000" /><rect x="716" y="348" width="3" height="54" fill="#008A00" /><rect x="720" y="352" width="3" height="50" fill="#FF0000" /><rect x="724" y="349" width="3" height="53" fill="#008A00" /><rect x="728" y="372" width="3" height="30" fill="#FF0000" /><rect x="732" y="363" width="3" height="39" fill="#008A00" /><rect x="736" y="369" width="3" height="33" fill="#FF0000" /><rect x="740" y="372" width="3" height="30" fill="#FF0000" /><rect x="744" y="366" width="3" height="36" fill="#008A00" /><rect x="748" y="362" width="3" height="40" fill="#008A00" /><rect x="752" y="349" width="3" height="53" fill="#008A00" /><rect x="756" y="373" width="3" height="29" fill="#FF0000" /><rect x="760" y="360" width="3" height="42" fill="#008A00" /><rect x="764" y="358" width="3" height="44" fill="#008A00" /><rect x="768" y="369" width="3" height="33" fill="#FF0000" /><rect x="772" y="375" width="3" height="27" fill="#FF0000" /><rect x="776" y="375" width="3" height="27" fill="#008A00" /><rect x="780" y="379" width="3" height="23" fill="#FF0000" /><rect x="784" y="374" width="3" height="28" fill="#008A00" /><rect x="788" y="377" width="3" height="25" fill="#FF0000" /><rect x="792" y="373" width="3" height="29" fill="#008A00" /><rect x="796" y="381" width="3" height="21" fill="#FF0000" /><rect x="800" y="380" width="3" height="22" fill="#008A00" /><rect x="804" y="382" width="3" height="20" fill="#FF0000" /><rect x="808" y="375" width="3" height="27" fill="#008A00" /><rect x="812" y="374" width="3" height="28" fill="#008A00" /><rect x="816" y="384" width="3" height="18" fill="#FF0000" /><rect x="820" y="391" width="3" height="11" fill="#FF0000" /><rect x="824" y="386" width="3" height="16" fill="#008A00" /><rect x="828" y="383" width="3" height="19" fill="#008A00" /><rect x="832" y="384" width="3" height="18" fill="#FF0000" /><text x="987" y="356" font-family="Liberation Sans" font-size="9.5" fill="#FFFFFF" text-anchor="start" textLength="14" lengthAdjust="spacingAndGlyphs" stroke="#FFFFFF" stroke-width="0.2" >144</text><text x="986" y="400" font-family="Liberation Sans" font-size="9.5" fill="#FFFFFF" text-anchor="start" textLength="6" lengthAdjust="spacingAndGlyphs" stroke="#FFFFFF" stroke-width="0.2" >0</text><polyline points="265.0,438.2 273.3,426.4 275.7,434.2 281.5,450.9 287.4,447.9 289.3,442.0 294.2,436.2 297.2,425.5 306.0,417.6 312.8,426.4 320.6,431.3 326.5,445.0 330.4,446.0 333.3,449.9 336.2,445.0 341.1,440.1 346.0,434.2 350.9,441.1 359.7,451.8 365.5,455.3 370.4,445.0 379.2,414.7 387.0,413.7 394.8,422.5 402.6,424.5 407.5,435.2 415.3,439.1 421.2,428.0 425.1,439.1 432.9,442.0 445.6,438.2 453.4,417.6 458.3,410.8 462.0,411.8 465.9,415.7 469.8,426.4 477.6,454.2 481.5,449.9 489.3,420.6 493.2,420.6 497.2,425.5 502.0,435.2 506.0,437.2 508.9,449.9 515.7,453.8 520.6,450.3 526.5,450.3 537.2,429.4 546.0,445.0 551.8,448.3 561.6,423.5 567.5,426.4 573.3,437.8 581.1,430.3 586.0,440.1 593.8,456.7 605.5,439.1 609.5,439.1 613.4,434.2 618.2,449.9 625.1,454.2 630.0,454.2 633.9,447.0 644.6,419.6 649.5,422.5 655.4,421.6 659.3,422.5 662.0,429.4 664.9,429.4 672.7,417.1 677.6,416.7 685.4,413.2 693.2,421.6 698.1,421.6 702.0,414.3 706.0,426.0 709.9,427.4 713.8,431.3 716.7,417.1 720.6,415.7 725.5,410.4 729.4,414.3 742.1,419.6 746.0,421.6 753.8,417.6 761.6,414.3 766.5,416.7 773.3,435.2 778.2,441.1 785.0,436.6 795.8,450.3 801.6,452.8 810.4,438.2 813.4,430.7 818.2,430.3 821.2,433.3 826.1,433.3 830.0,430.3 833.9,439.7" fill="none" stroke="#20B2AA" stroke-width="1.1" shape-rendering="auto"/><polyline points="265.0,438.2 274.7,432.3 287.4,447.9 299.1,428.4 307.9,418.6 320.6,428.4 332.3,446.0 346.0,438.2 363.6,452.8 373.3,442.0 385.0,415.7 400.7,422.5 414.3,438.2 426.1,435.2 433.9,441.1 445.6,439.1 462.0,413.7 466.9,413.7 479.6,449.9 483.5,448.9 495.2,422.5 501.0,427.4 518.6,452.8 526.5,450.9 538.2,434.2 553.8,447.0 567.5,426.4 585.0,435.2 596.8,452.8 614.3,438.2 628.0,454.2 647.5,422.5 653.4,421.2 662.0,425.5 669.8,427.4 676.6,415.7 687.4,415.1 695.2,417.1 710.8,424.5 714.7,427.4 721.6,418.6 729.4,413.2 746.0,421.0 765.5,415.7 775.3,429.4 778.2,435.2 787.0,438.2 798.7,449.9 804.6,450.3 816.3,433.3 828.0,431.9 830.0,432.3" fill="none" stroke="#FF2020" stroke-width="1.1" shape-rendering="auto" stroke-dasharray="4 3"/><text x="269" y="418" font-family="Liberation Sans" font-size="9.5" fill="#FFFFFF" text-anchor="start" textLength="123" lengthAdjust="spacingAndGlyphs" stroke="#FFFFFF" stroke-width="0.2" >Stoch(5,3,3) 37.8378 48.2251</text><text x="986" y="414" font-family="Liberation Sans" font-size="9.5" fill="#FFFFFF" text-anchor="start" textLength="18" lengthAdjust="spacingAndGlyphs" stroke="#FFFFFF" stroke-width="0.2" >100</text><text x="986" y="421" font-family="Liberation Sans" font-size="9.5" fill="#FFFFFF" text-anchor="start" textLength="12" lengthAdjust="spacingAndGlyphs" stroke="#FFFFFF" stroke-width="0.2" >80</text><text x="986" y="454" font-family="Liberation Sans" font-size="9.5" fill="#FFFFFF" text-anchor="start" textLength="12" lengthAdjust="spacingAndGlyphs" stroke="#FFFFFF" stroke-width="0.2" >20</text><text x="986" y="459" font-family="Liberation Sans" font-size="9.5" fill="#FFFFFF" text-anchor="start" textLength="6" lengthAdjust="spacingAndGlyphs" stroke="#FFFFFF" stroke-width="0.2" >0</text><rect x="265" y="496" width="2" height="24" fill="#FFC0CB" /><rect x="268" y="501" width="3" height="19" fill="#8B4A1A" /><rect x="272" y="484" width="3" height="36" fill="#00F000" /><rect x="276" y="489" width="3" height="31" fill="#FFC0CB" /><rect x="280" y="488" width="3" height="32" fill="#0000F0" /><rect x="284" y="512" width="3" height="8" fill="#FFC0CB" /><rect x="288" y="491" width="3" height="29" fill="#0000F0" /><rect x="292" y="503" width="3" height="17" fill="#FFC0CB" /><rect x="296" y="493" width="3" height="27" fill="#00F000" /><rect x="300" y="511" width="3" height="9" fill="#FFC0CB" /><rect x="304" y="504" width="3" height="16" fill="#0000F0" /><rect x="308" y="508" width="3" height="12" fill="#8B4A1A" /><rect x="312" y="504" width="3" height="16" fill="#00F000" /><rect x="316" y="506" width="3" height="14" fill="#8B4A1A" /><rect x="320" y="510" width="3" height="10" fill="#FFC0CB" /><rect x="324" y="501" width="3" height="19" fill="#00F000" /><rect x="328" y="507" width="3" height="13" fill="#8B4A1A" /><rect x="332" y="497" width="3" height="23" fill="#00F000" /><rect x="336" y="502" width="3" height="18" fill="#8B4A1A" /><rect x="340" y="509" width="3" height="11" fill="#8B4A1A" /><rect x="344" y="500" width="3" height="20" fill="#0000F0" /><rect x="348" y="494" width="3" height="26" fill="#00F000" /><rect x="352" y="510" width="3" height="10" fill="#8B4A1A" /><rect x="356" y="491" width="3" height="29" fill="#0000F0" /><rect x="360" y="485" width="3" height="35" fill="#00F000" /><rect x="364" y="502" width="3" height="18" fill="#FFC0CB" /><rect x="368" y="498" width="3" height="22" fill="#0000F0" /><rect x="372" y="510" width="3" height="10" fill="#8B4A1A" /><rect x="376" y="495" width="3" height="25" fill="#0000F0" /><rect x="380" y="483" width="3" height="37" fill="#00F000" /><rect x="384" y="499" width="3" height="21" fill="#FFC0CB" /><rect x="388" y="502" width="3" height="18" fill="#8B4A1A" /><rect x="392" y="468" width="3" height="52" fill="#0000F0" /><rect x="396" y="481" width="3" height="39" fill="#FFC0CB" /><rect x="400" y="477" width="3" height="43" fill="#0000F0" /><rect x="404" y="497" width="3" height="23" fill="#FFC0CB" /><rect x="408" y="504" width="3" height="16" fill="#FFC0CB" /><rect x="412" y="501" width="3" height="19" fill="#0000F0" /><rect x="416" y="499" width="3" height="21" fill="#00F000" /><rect x="420" y="506" width="3" height="14" fill="#8B4A1A" /><rect x="424" y="485" width="3" height="35" fill="#00F000" /><rect x="428" y="505" width="3" height="15" fill="#FFC0CB" /><rect x="432" y="481" width="3" height="39" fill="#0000F0" /><rect x="436" y="486" width="3" height="34" fill="#FFC0CB" /><rect x="440" y="491" width="3" height="29" fill="#FFC0CB" /><rect x="444" y="505" width="3" height="15" fill="#FFC0CB" /><rect x="448" y="475" width="3" height="45" fill="#0000F0" /><rect x="452" y="503" width="3" height="17" fill="#FFC0CB" /><rect x="456" y="503" width="3" height="17" fill="#0000F0" /><rect x="460" y="506" width="3" height="14" fill="#8B4A1A" /><rect x="464" y="505" width="3" height="15" fill="#00F000" /><rect x="468" y="511" width="3" height="9" fill="#8B4A1A" /><rect x="472" y="512" width="3" height="8" fill="#8B4A1A" /><rect x="476" y="511" width="3" height="9" fill="#00F000" /><rect x="480" y="509" width="3" height="11" fill="#0000F0" /><rect x="484" y="513" width="3" height="7" fill="#FFC0CB" /><rect x="488" y="507" width="3" height="13" fill="#0000F0" /><rect x="492" y="474" width="3" height="46" fill="#0000F0" /><rect x="496" y="499" width="3" height="21" fill="#8B4A1A" /><rect x="500" y="507" width="3" height="13" fill="#FFC0CB" /><rect x="504" y="502" width="3" height="18" fill="#0000F0" /><rect x="508" y="508" width="3" height="12" fill="#FFC0CB" /><rect x="512" y="508" width="3" height="12" fill="#FFC0CB" /><rect x="516" y="510" width="3" height="10" fill="#8B4A1A" /><rect x="520" y="505" width="3" height="15" fill="#00F000" /><rect x="524" y="506" width="3" height="14" fill="#8B4A1A" /><rect x="528" y="508" width="3" height="12" fill="#FFC0CB" /><rect x="532" y="498" width="3" height="22" fill="#0000F0" /><rect x="536" y="469" width="3" height="51" fill="#0000F0" /><rect x="540" y="499" width="3" height="21" fill="#FFC0CB" /><rect x="544" y="502" width="3" height="18" fill="#FFC0CB" /><rect x="548" y="493" width="3" height="27" fill="#0000F0" /><rect x="552" y="491" width="3" height="29" fill="#0000F0" /><rect x="556" y="507" width="3" height="13" fill="#FFC0CB" /><rect x="560" y="513" width="3" height="7" fill="#FFC0CB" /><rect x="564" y="508" width="3" height="12" fill="#0000F0" /><rect x="568" y="496" width="3" height="24" fill="#0000F0" /><rect x="572" y="504" width="3" height="16" fill="#FFC0CB" /><rect x="576" y="503" width="3" height="17" fill="#00F000" /><rect x="580" y="510" width="3" height="10" fill="#FFC0CB" /><rect x="584" y="476" width="3" height="44" fill="#0000F0" /><rect x="588" y="511" width="3" height="9" fill="#FFC0CB" /><rect x="592" y="509" width="3" height="11" fill="#00F000" /><rect x="596" y="514" width="3" height="6" fill="#8B4A1A" /><rect x="600" y="504" width="3" height="16" fill="#0000F0" /><rect x="604" y="506" width="3" height="14" fill="#FFC0CB" /><rect x="608" y="494" width="3" height="26" fill="#0000F0" /><rect x="612" y="511" width="3" height="9" fill="#8B4A1A" /><rect x="616" y="497" width="3" height="23" fill="#00F000" /><rect x="620" y="507" width="3" height="13" fill="#FFC0CB" /><rect x="624" y="513" width="3" height="7" fill="#8B4A1A" /><rect x="628" y="498" width="3" height="22" fill="#0000F0" /><rect x="632" y="498" width="3" height="22" fill="#00F000" /><rect x="636" y="505" width="3" height="15" fill="#8B4A1A" /><rect x="640" y="506" width="3" height="14" fill="#FFC0CB" /><rect x="644" y="507" width="3" height="13" fill="#FFC0CB" /><rect x="648" y="508" width="3" height="12" fill="#8B4A1A" /><rect x="652" y="505" width="3" height="15" fill="#00F000" /><rect x="656" y="500" width="3" height="20" fill="#0000F0" /><rect x="660" y="500" width="3" height="20" fill="#0000F0" /><rect x="664" y="499" width="3" height="21" fill="#00F000" /><rect x="668" y="497" width="3" height="23" fill="#00F000" /><rect x="672" y="507" width="3" height="13" fill="#FFC0CB" /><rect x="676" y="507" width="3" height="13" fill="#0000F0" /><rect x="680" y="509" width="3" height="11" fill="#FFC0CB" /><rect x="684" y="509" width="3" height="11" fill="#FFC0CB" /><rect x="688" y="505" width="3" height="15" fill="#0000F0" /><rect x="692" y="503" width="3" height="17" fill="#0000F0" /><rect x="696" y="507" width="3" height="13" fill="#FFC0CB" /><rect x="700" y="510" width="3" height="10" fill="#8B4A1A" /><rect x="704" y="503" width="3" height="17" fill="#00F000" /><rect x="708" y="507" width="3" height="13" fill="#FFC0CB" /><rect x="712" y="502" width="3" height="18" fill="#0000F0" /><rect x="716" y="499" width="3" height="21" fill="#00F000" /><rect x="720" y="509" width="3" height="11" fill="#8B4A1A" /><rect x="724" y="506" width="3" height="14" fill="#00F000" /><rect x="728" y="499" width="3" height="21" fill="#0000F0" /><rect x="732" y="511" width="3" height="9" fill="#FFC0CB" /><rect x="736" y="496" width="3" height="24" fill="#0000F0" /><rect x="740" y="506" width="3" height="14" fill="#8B4A1A" /><rect x="744" y="505" width="3" height="15" fill="#00F000" /><rect x="748" y="504" width="3" height="16" fill="#00F000" /><rect x="752" y="511" width="3" height="9" fill="#FFC0CB" /><rect x="756" y="512" width="3" height="8" fill="#8B4A1A" /><rect x="760" y="505" width="3" height="15" fill="#00F000" /><rect x="764" y="504" width="3" height="16" fill="#00F000" /><rect x="768" y="502" width="3" height="18" fill="#0000F0" /><rect x="772" y="510" width="3" height="10" fill="#8B4A1A" /><rect x="776" y="501" width="3" height="19" fill="#00F000" /><rect x="780" y="504" width="3" height="16" fill="#8B4A1A" /><rect x="784" y="512" width="3" height="8" fill="#FFC0CB" /><rect x="788" y="509" width="3" height="11" fill="#0000F0" /><rect x="792" y="507" width="3" height="13" fill="#00F000" /><rect x="796" y="509" width="3" height="11" fill="#8B4A1A" /><rect x="800" y="506" width="3" height="14" fill="#00F000" /><rect x="804" y="506" width="3" height="14" fill="#8B4A1A" /><rect x="808" y="505" width="3" height="15" fill="#00F000" /><rect x="812" y="510" width="3" height="10" fill="#FFC0CB" /><rect x="816" y="505" width="3" height="15" fill="#0000F0" /><rect x="820" y="495" width="3" height="25" fill="#0000F0" /><rect x="824" y="508" width="3" height="12" fill="#FFC0CB" /><rect x="828" y="508" width="3" height="12" fill="#00F000" /><rect x="832" y="488" width="3" height="32" fill="#0000F0" /><text x="269" y="477" font-family="Liberation Sans" font-size="9.5" fill="#FFFFFF" text-anchor="start" textLength="62" lengthAdjust="spacingAndGlyphs" stroke="#FFFFFF" stroke-width="0.2" >BW MFI 0.2727</text><text x="986" y="476" font-family="Liberation Sans" font-size="9.5" fill="#FFFFFF" text-anchor="start" textLength="27" lengthAdjust="spacingAndGlyphs" stroke="#FFFFFF" stroke-width="0.2" >0.4594</text><text x="986" y="518" font-family="Liberation Sans" font-size="9.5" fill="#FFFFFF" text-anchor="start" textLength="6" lengthAdjust="spacingAndGlyphs" stroke="#FFFFFF" stroke-width="0.2" >0</text><rect x="265" y="522" width="1" height="3" fill="#FFFFFF" /><text x="265" y="534" font-family="Liberation Sans" font-size="9.5" fill="#FFFFFF" text-anchor="start" textLength="45" lengthAdjust="spacingAndGlyphs" stroke="#FFFFFF" stroke-width="0.2" >1 Feb 2012</text><rect x="329" y="522" width="1" height="3" fill="#FFFFFF" /><text x="329" y="534" font-family="Liberation Sans" font-size="9.5" fill="#FFFFFF" text-anchor="start" textLength="48" lengthAdjust="spacingAndGlyphs" stroke="#FFFFFF" stroke-width="0.2" >1 Feb 01:55</text><rect x="393" y="522" width="1" height="3" fill="#FFFFFF" /><text x="393" y="534" font-family="Liberation Sans" font-size="9.5" fill="#FFFFFF" text-anchor="start" textLength="48" lengthAdjust="spacingAndGlyphs" stroke="#FFFFFF" stroke-width="0.2" >1 Feb 03:15</text><rect x="457" y="522" width="1" height="3" fill="#FFFFFF" /><text x="457" y="534" font-family="Liberation Sans" font-size="9.5" fill="#FFFFFF" text-anchor="start" textLength="48" lengthAdjust="spacingAndGlyphs" stroke="#FFFFFF" stroke-width="0.2" >1 Feb 04:35</text><rect x="521" y="522" width="1" height="3" fill="#FFFFFF" /><text x="521" y="534" font-family="Liberation Sans" font-size="9.5" fill="#FFFFFF" text-anchor="start" textLength="48" lengthAdjust="spacingAndGlyphs" stroke="#FFFFFF" stroke-width="0.2" >1 Feb 05:55</text><rect x="585" y="522" width="1" height="3" fill="#FFFFFF" /><text x="585" y="534" font-family="Liberation Sans" font-size="9.5" fill="#FFFFFF" text-anchor="start" textLength="48" lengthAdjust="spacingAndGlyphs" stroke="#FFFFFF" stroke-width="0.2" >1 Feb 07:15</text><rect x="649" y="522" width="1" height="3" fill="#FFFFFF" /><text x="649" y="534" font-family="Liberation Sans" font-size="9.5" fill="#FFFFFF" text-anchor="start" textLength="48" lengthAdjust="spacingAndGlyphs" stroke="#FFFFFF" stroke-width="0.2" >1 Feb 08:35</text><rect x="713" y="522" width="1" height="3" fill="#FFFFFF" /><text x="713" y="534" font-family="Liberation Sans" font-size="9.5" fill="#FFFFFF" text-anchor="start" textLength="48" lengthAdjust="spacingAndGlyphs" stroke="#FFFFFF" stroke-width="0.2" >1 Feb 09:55</text><rect x="777" y="522" width="1" height="3" fill="#FFFFFF" /><text x="777" y="534" font-family="Liberation Sans" font-size="9.5" fill="#FFFFFF" text-anchor="start" textLength="48" lengthAdjust="spacingAndGlyphs" stroke="#FFFFFF" stroke-width="0.2" >1 Feb 11:15</text><rect x="258" y="539" width="766" height="21" fill="#ECEAEC" /><rect x="260" y="541" width="764" height="1" fill="#000000" /><rect x="261" y="102" width="1" height="459" fill="#A0A0A0" /><rect x="1022" y="542" width="1" height="18" fill="#F8F8F8" /><text x="274" y="554" font-family="Liberation Sans" font-size="11" fill="#8A8A8A" text-anchor="start" textLength="58" lengthAdjust="spacingAndGlyphs" stroke="#8A8A8A" stroke-width="0.2" >EURUSD,M1</text><text x="354" y="554" font-family="Liberation Sans" font-size="11" fill="#8A8A8A" text-anchor="start" textLength="58" lengthAdjust="spacingAndGlyphs" stroke="#8A8A8A" stroke-width="0.2" >EURUSD,M5</text><text x="434" y="554" font-family="Liberation Sans" font-size="11" fill="#8A8A8A" text-anchor="start" textLength="67" lengthAdjust="spacingAndGlyphs" stroke="#8A8A8A" stroke-width="0.2" >EURUSD,Daily</text><text x="523" y="554" font-family="Liberation Sans" font-size="11" fill="#8A8A8A" text-anchor="start" textLength="55" lengthAdjust="spacingAndGlyphs" stroke="#8A8A8A" stroke-width="0.2" >GBPUSD,M1</text><text x="603" y="554" font-family="Liberation Sans" font-size="11" fill="#8A8A8A" text-anchor="start" textLength="55" lengthAdjust="spacingAndGlyphs" stroke="#8A8A8A" stroke-width="0.2" >GBPUSD,M5</text><text x="683" y="554" font-family="Liberation Sans" font-size="11" fill="#8A8A8A" text-anchor="start" textLength="55" lengthAdjust="spacingAndGlyphs" stroke="#8A8A8A" stroke-width="0.2" >GBPUSD,M1</text><text x="763" y="554" font-family="Liberation Sans" font-size="11" fill="#8A8A8A" text-anchor="start" textLength="57" lengthAdjust="spacingAndGlyphs" stroke="#8A8A8A" stroke-width="0.2" >USDCHF,M1</text><text x="843" y="554" font-family="Liberation Sans" font-size="11" fill="#8A8A8A" text-anchor="start" textLength="57" lengthAdjust="spacingAndGlyphs" stroke="#8A8A8A" stroke-width="0.2" >USDCHF,M5</text><text x="922" y="554" font-family="Liberation Sans" font-size="11" fill="#8A8A8A" text-anchor="start" textLength="66" lengthAdjust="spacingAndGlyphs" stroke="#8A8A8A" stroke-width="0.2" >USDCHF,Daily</text><rect x="345" y="544" width="1" height="13" fill="#A0A0A0" /><rect x="425" y="544" width="1" height="13" fill="#A0A0A0" /><rect x="513" y="544" width="1" height="13" fill="#A0A0A0" /><rect x="593" y="544" width="1" height="13" fill="#A0A0A0" /><rect x="673" y="544" width="1" height="13" fill="#A0A0A0" /><rect x="753" y="544" width="1" height="13" fill="#A0A0A0" /><rect x="833" y="544" width="1" height="13" fill="#A0A0A0" /><rect x="912" y="544" width="1" height="13" fill="#A0A0A0" /><path d="M999.5,547.5 l-3.5,3.5 l3.5,3.5 z" fill="#8A96A8" shape-rendering="auto"/><path d="M1013,547 l4,4 l-4,4 z" fill="#000000"/><rect x="0" y="562" width="1024" height="154" fill="#ECEAEC" /><path d="M4,568 l6,5 M10,568 l-6,5" stroke="#000" stroke-width="1.8" shape-rendering="auto"/><rect x="1" y="579" width="13" height="135" fill="#75A6E0" /><g transform="translate(0,712) rotate(-90)"><path d="M2 2h1v1h-1zM6 2h1v1h-1zM2 3h1v1h-1zM6 3h4v1h-4zM1 4h1v1h-1zM3 4h1v1h-1zM5 4h1v1h-1zM9 4h1v1h-1zM0 5h3v1h-3zM4 5h1v1h-1zM6 5h1v1h-1zM8 5h1v1h-1zM2 6h1v1h-1zM7 6h1v1h-1zM1 7h1v1h-1zM6 7h1v1h-1zM8 7h1v1h-1zM0 8h3v1h-3zM4 8h2v1h-2zM9 8h2v1h-2zM7 9h1v1h-1zM2 10h2v1h-2zM8 10h2v1h-2zM0 11h2v1h-2zM6 11h2v1h-2zM8 12h2v1h-2zM12 2h1v1h-1zM19 2h1v1h-1zM13 3h1v1h-1zM17 3h1v1h-1zM19 3h1v1h-1zM22 3h1v1h-1zM12 4h4v1h-4zM17 4h6v1h-6zM12 6h1v1h-1zM14 6h1v1h-1zM16 6h7v1h-7zM12 7h1v1h-1zM14 7h1v1h-1zM19 7h1v1h-1zM12 8h1v1h-1zM14 8h1v1h-1zM16 8h7v1h-7zM13 9h1v1h-1zM16 9h1v1h-1zM18 9h1v1h-1zM20 9h1v1h-1zM22 9h1v1h-1zM13 10h2v1h-2zM16 10h1v1h-1zM18 10h1v1h-1zM20 10h1v1h-1zM22 10h1v1h-1zM12 11h1v1h-1zM16 11h1v1h-1zM18 11h1v1h-1zM20 11h1v1h-1zM22 11h1v1h-1zM16 12h1v1h-1zM21 12h2v1h-2z" fill="#FFFFFF"/></g><rect x="15" y="565" width="1006" height="129" fill="#A6A5A6" /><rect x="16" y="566" width="1004" height="127" fill="#FCFDF7" /><rect x="1020" y="566" width="1" height="128" fill="#F0F0F0" /><rect x="16" y="566" width="1005" height="20" fill="#FCFCFA" /><rect x="16" y="586" width="1005" height="1" fill="#C9C9C9" /><rect x="114" y="569" width="1" height="15" fill="#D4D4D4" /><rect x="282" y="569" width="1" height="15" fill="#D4D4D4" /><rect x="350" y="569" width="1" height="15" fill="#D4D4D4" /><rect x="403" y="569" width="1" height="15" fill="#D4D4D4" /><rect x="471" y="569" width="1" height="15" fill="#D4D4D4" /><rect x="547" y="569" width="1" height="15" fill="#D4D4D4" /><rect x="623" y="569" width="1" height="15" fill="#D4D4D4" /><rect x="699" y="569" width="1" height="15" fill="#D4D4D4" /><rect x="775" y="569" width="1" height="15" fill="#D4D4D4" /><rect x="851" y="569" width="1" height="15" fill="#D4D4D4" /><rect x="927" y="569" width="1" height="15" fill="#D4D4D4" /><rect x="1020" y="569" width="1" height="15" fill="#D4D4D4" /><path d="M27 570h1v1h-1zM23 571h10v1h-10zM23 572h1v1h-1zM32 572h1v1h-1zM22 573h1v1h-1zM31 573h1v1h-1zM24 574h8v1h-8zM27 575h1v1h-1zM24 576h1v1h-1zM27 576h1v1h-1zM24 577h1v1h-1zM27 577h4v1h-4zM24 578h1v1h-1zM27 578h1v1h-1zM23 579h1v1h-1zM25 579h1v1h-1zM27 579h1v1h-1zM22 580h1v1h-1zM26 580h7v1h-7zM37 570h1v1h-1zM41 570h1v1h-1zM38 571h1v1h-1zM40 571h1v1h-1zM35 572h9v1h-9zM35 573h1v1h-1zM39 573h1v1h-1zM43 573h1v1h-1zM35 574h9v1h-9zM35 575h1v1h-1zM39 575h1v1h-1zM43 575h1v1h-1zM35 576h9v1h-9zM39 577h1v1h-1zM34 578h11v1h-11zM39 579h1v1h-1zM39 580h1v1h-1z" fill="#000"/><text x="58" y="580" font-family="Liberation Sans" font-size="11" fill="#808080" text-anchor="start" stroke="#808080" stroke-width="0.2" >/</text><path d="M259 570h1v1h-1zM251 571h4v1h-4zM259 571h1v1h-1zM251 572h1v1h-1zM254 572h8v1h-8zM251 573h1v1h-1zM254 573h1v1h-1zM259 573h1v1h-1zM251 574h1v1h-1zM254 574h1v1h-1zM256 574h1v1h-1zM259 574h1v1h-1zM251 575h4v1h-4zM257 575h1v1h-1zM259 575h1v1h-1zM251 576h1v1h-1zM254 576h1v1h-1zM257 576h1v1h-1zM259 576h1v1h-1zM251 577h1v1h-1zM254 577h1v1h-1zM259 577h1v1h-1zM251 578h1v1h-1zM254 578h1v1h-1zM259 578h1v1h-1zM251 579h4v1h-4zM259 579h1v1h-1zM257 580h3v1h-3zM265 570h1v1h-1zM268 570h6v1h-6zM266 571h1v1h-1zM273 571h1v1h-1zM264 572h1v1h-1zM273 572h1v1h-1zM264 573h1v1h-1zM267 573h4v1h-4zM273 573h1v1h-1zM264 574h1v1h-1zM267 574h1v1h-1zM270 574h1v1h-1zM273 574h1v1h-1zM264 575h1v1h-1zM267 575h4v1h-4zM273 575h1v1h-1zM264 576h1v1h-1zM267 576h1v1h-1zM270 576h1v1h-1zM273 576h1v1h-1zM264 577h1v1h-1zM267 577h1v1h-1zM270 577h1v1h-1zM273 577h1v1h-1zM264 578h1v1h-1zM267 578h4v1h-4zM273 578h1v1h-1zM264 579h1v1h-1zM273 579h1v1h-1zM264 580h1v1h-1zM271 580h3v1h-3z" fill="#000"/><path d="M321 570h1v1h-1zM324 570h1v1h-1zM327 570h1v1h-1zM322 571h1v1h-1zM324 571h1v1h-1zM326 571h1v1h-1zM319 572h11v1h-11zM322 573h1v1h-1zM324 573h1v1h-1zM326 573h1v1h-1zM321 574h1v1h-1zM324 574h1v1h-1zM327 574h1v1h-1zM320 575h1v1h-1zM328 575h1v1h-1zM324 576h1v1h-1zM319 577h11v1h-11zM323 578h1v1h-1zM325 578h1v1h-1zM322 579h1v1h-1zM326 579h1v1h-1zM319 580h3v1h-3zM327 580h3v1h-3zM332 570h6v1h-6zM340 570h1v1h-1zM333 571h1v1h-1zM335 571h1v1h-1zM338 571h1v1h-1zM340 571h1v1h-1zM333 572h1v1h-1zM335 572h1v1h-1zM338 572h1v1h-1zM340 572h1v1h-1zM331 573h8v1h-8zM340 573h1v1h-1zM333 574h1v1h-1zM335 574h1v1h-1zM338 574h1v1h-1zM340 574h1v1h-1zM333 575h1v1h-1zM335 575h1v1h-1zM340 575h1v1h-1zM332 576h1v1h-1zM335 576h2v1h-2zM339 576h2v1h-2zM336 577h1v1h-1zM333 578h7v1h-7zM336 579h1v1h-1zM331 580h11v1h-11z" fill="#000"/><path d="M379 570h4v1h-4zM374 571h5v1h-5zM378 572h1v1h-1zM374 573h9v1h-9zM378 574h1v1h-1zM378 575h1v1h-1zM373 576h11v1h-11zM378 577h1v1h-1zM378 578h1v1h-1zM378 579h1v1h-1zM377 580h2v1h-2zM385 570h1v1h-1zM388 570h1v1h-1zM390 570h1v1h-1zM392 570h1v1h-1zM386 571h1v1h-1zM388 571h2v1h-2zM392 571h1v1h-1zM385 572h6v1h-6zM392 572h4v1h-4zM387 573h2v1h-2zM391 573h2v1h-2zM394 573h1v1h-1zM386 574h1v1h-1zM388 574h2v1h-2zM392 574h1v1h-1zM394 574h1v1h-1zM385 575h1v1h-1zM388 575h1v1h-1zM390 575h1v1h-1zM392 575h1v1h-1zM394 575h1v1h-1zM385 576h6v1h-6zM392 576h1v1h-1zM394 576h1v1h-1zM387 577h1v1h-1zM389 577h1v1h-1zM392 577h1v1h-1zM394 577h1v1h-1zM386 578h2v1h-2zM389 578h1v1h-1zM393 578h1v1h-1zM388 579h1v1h-1zM392 579h1v1h-1zM394 579h1v1h-1zM385 580h3v1h-3zM389 580h3v1h-3zM395 580h1v1h-1z" fill="#000"/><path d="M446 570h1v1h-1zM441 571h11v1h-11zM444 572h1v1h-1zM448 572h1v1h-1zM442 573h9v1h-9zM442 574h1v1h-1zM445 574h1v1h-1zM447 574h1v1h-1zM450 574h1v1h-1zM442 575h1v1h-1zM444 575h1v1h-1zM448 575h1v1h-1zM450 575h1v1h-1zM442 576h9v1h-9zM442 577h1v1h-1zM444 577h1v1h-1zM448 577h1v1h-1zM450 577h1v1h-1zM442 578h1v1h-1zM444 578h5v1h-5zM450 578h1v1h-1zM442 579h1v1h-1zM444 579h1v1h-1zM448 579h1v1h-1zM450 579h1v1h-1zM442 580h1v1h-1zM449 580h2v1h-2zM456 570h6v1h-6zM456 571h1v1h-1zM461 571h1v1h-1zM456 572h1v1h-1zM461 572h1v1h-1zM456 573h6v1h-6zM454 575h4v1h-4zM460 575h4v1h-4zM454 576h1v1h-1zM457 576h1v1h-1zM460 576h1v1h-1zM463 576h1v1h-1zM454 577h1v1h-1zM457 577h1v1h-1zM460 577h1v1h-1zM463 577h1v1h-1zM454 578h1v1h-1zM457 578h1v1h-1zM460 578h1v1h-1zM463 578h1v1h-1zM454 579h4v1h-4zM460 579h4v1h-4zM454 580h1v1h-1zM457 580h1v1h-1zM460 580h1v1h-1zM463 580h1v1h-1z" fill="#000"/><path d="M520 570h1v1h-1zM523 570h1v1h-1zM520 571h1v1h-1zM523 571h2v1h-2zM519 572h1v1h-1zM522 572h1v1h-1zM525 572h1v1h-1zM519 573h3v1h-3zM526 573h2v1h-2zM518 574h2v1h-2zM522 574h1v1h-1zM525 574h1v1h-1zM517 575h1v1h-1zM519 575h1v1h-1zM522 575h1v1h-1zM525 575h1v1h-1zM519 576h1v1h-1zM522 576h1v1h-1zM525 576h1v1h-1zM519 577h1v1h-1zM522 577h1v1h-1zM525 577h1v1h-1zM519 578h1v1h-1zM522 578h1v1h-1zM525 578h1v1h-1zM519 579h1v1h-1zM521 579h1v1h-1zM525 579h1v1h-1zM519 580h2v1h-2zM525 580h1v1h-1zM532 570h1v1h-1zM535 570h1v1h-1zM532 571h1v1h-1zM536 571h1v1h-1zM531 572h1v1h-1zM531 573h1v1h-1zM533 573h7v1h-7zM530 574h2v1h-2zM529 575h1v1h-1zM531 575h1v1h-1zM534 575h1v1h-1zM538 575h1v1h-1zM531 576h1v1h-1zM535 576h1v1h-1zM538 576h1v1h-1zM531 577h1v1h-1zM535 577h1v1h-1zM537 577h1v1h-1zM531 578h1v1h-1zM537 578h1v1h-1zM531 579h1v1h-1zM536 579h1v1h-1zM531 580h1v1h-1zM533 580h7v1h-7z" fill="#000"/><path d="M599 570h1v1h-1zM599 571h1v1h-1zM599 572h1v1h-1zM596 573h1v1h-1zM599 573h1v1h-1zM596 574h1v1h-1zM599 574h4v1h-4zM596 575h1v1h-1zM599 575h1v1h-1zM596 576h1v1h-1zM599 576h1v1h-1zM596 577h1v1h-1zM599 577h1v1h-1zM596 578h1v1h-1zM599 578h1v1h-1zM596 579h1v1h-1zM599 579h1v1h-1zM594 580h10v1h-10zM607 570h1v1h-1zM611 570h4v1h-4zM607 571h1v1h-1zM611 571h1v1h-1zM614 571h1v1h-1zM605 572h5v1h-5zM611 572h4v1h-4zM607 573h1v1h-1zM607 574h1v1h-1zM609 574h7v1h-7zM607 575h2v1h-2zM610 575h1v1h-1zM615 575h1v1h-1zM606 576h2v1h-2zM610 576h1v1h-1zM612 576h1v1h-1zM615 576h1v1h-1zM605 577h1v1h-1zM607 577h1v1h-1zM610 577h1v1h-1zM612 577h1v1h-1zM615 577h1v1h-1zM607 578h1v1h-1zM610 578h1v1h-1zM612 578h1v1h-1zM615 578h1v1h-1zM607 579h1v1h-1zM611 579h1v1h-1zM613 579h1v1h-1zM605 580h3v1h-3zM609 580h2v1h-2zM614 580h2v1h-2z" fill="#000"/><path d="M672 570h1v1h-1zM676 570h1v1h-1zM669 571h11v1h-11zM672 572h1v1h-1zM676 572h1v1h-1zM670 573h1v1h-1zM672 573h1v1h-1zM676 573h2v1h-2zM671 574h1v1h-1zM676 574h1v1h-1zM678 574h1v1h-1zM670 575h1v1h-1zM672 575h1v1h-1zM674 575h6v1h-6zM669 576h1v1h-1zM672 576h1v1h-1zM676 576h1v1h-1zM671 577h2v1h-2zM676 577h1v1h-1zM670 578h1v1h-1zM672 578h1v1h-1zM675 578h1v1h-1zM677 578h1v1h-1zM672 579h1v1h-1zM674 579h1v1h-1zM678 579h1v1h-1zM670 580h2v1h-2zM673 580h1v1h-1zM679 580h1v1h-1zM685 570h2v1h-2zM691 570h1v1h-1zM682 571h3v1h-3zM689 571h1v1h-1zM691 571h1v1h-1zM684 572h1v1h-1zM689 572h1v1h-1zM691 572h1v1h-1zM681 573h7v1h-7zM689 573h1v1h-1zM691 573h1v1h-1zM684 574h1v1h-1zM689 574h1v1h-1zM691 574h1v1h-1zM683 575h3v1h-3zM689 575h1v1h-1zM691 575h1v1h-1zM683 576h2v1h-2zM686 576h1v1h-1zM689 576h1v1h-1zM691 576h1v1h-1zM682 577h1v1h-1zM684 577h1v1h-1zM687 577h1v1h-1zM689 577h1v1h-1zM691 577h1v1h-1zM681 578h1v1h-1zM684 578h1v1h-1zM691 578h1v1h-1zM684 579h1v1h-1zM691 579h1v1h-1zM684 580h1v1h-1zM689 580h3v1h-3z" fill="#000"/><path d="M748 570h1v1h-1zM751 570h1v1h-1zM748 571h1v1h-1zM751 571h2v1h-2zM747 572h1v1h-1zM750 572h1v1h-1zM753 572h1v1h-1zM747 573h3v1h-3zM754 573h2v1h-2zM746 574h2v1h-2zM750 574h1v1h-1zM753 574h1v1h-1zM745 575h1v1h-1zM747 575h1v1h-1zM750 575h1v1h-1zM753 575h1v1h-1zM747 576h1v1h-1zM750 576h1v1h-1zM753 576h1v1h-1zM747 577h1v1h-1zM750 577h1v1h-1zM753 577h1v1h-1zM747 578h1v1h-1zM750 578h1v1h-1zM753 578h1v1h-1zM747 579h1v1h-1zM749 579h1v1h-1zM753 579h1v1h-1zM747 580h2v1h-2zM753 580h1v1h-1zM760 570h1v1h-1zM763 570h1v1h-1zM760 571h1v1h-1zM764 571h1v1h-1zM759 572h1v1h-1zM759 573h1v1h-1zM761 573h7v1h-7zM758 574h2v1h-2zM757 575h1v1h-1zM759 575h1v1h-1zM762 575h1v1h-1zM766 575h1v1h-1zM759 576h1v1h-1zM763 576h1v1h-1zM766 576h1v1h-1zM759 577h1v1h-1zM763 577h1v1h-1zM765 577h1v1h-1zM759 578h1v1h-1zM765 578h1v1h-1zM759 579h1v1h-1zM764 579h1v1h-1zM759 580h1v1h-1zM761 580h7v1h-7z" fill="#000"/><path d="M823 570h1v1h-1zM825 570h7v1h-7zM823 571h1v1h-1zM825 571h1v1h-1zM828 571h1v1h-1zM831 571h1v1h-1zM823 572h1v1h-1zM825 572h1v1h-1zM828 572h1v1h-1zM831 572h1v1h-1zM823 573h1v1h-1zM825 573h7v1h-7zM822 574h2v1h-2zM825 574h1v1h-1zM828 574h1v1h-1zM831 574h1v1h-1zM821 575h1v1h-1zM823 575h1v1h-1zM825 575h1v1h-1zM828 575h1v1h-1zM831 575h1v1h-1zM823 576h1v1h-1zM825 576h7v1h-7zM823 577h1v1h-1zM825 577h1v1h-1zM828 577h1v1h-1zM831 577h1v1h-1zM823 578h1v1h-1zM825 578h1v1h-1zM828 578h1v1h-1zM831 578h1v1h-1zM823 579h1v1h-1zM825 579h1v1h-1zM828 579h1v1h-1zM831 579h1v1h-1zM823 580h2v1h-2zM830 580h2v1h-2zM838 570h1v1h-1zM837 571h1v1h-1zM839 571h1v1h-1zM836 572h1v1h-1zM840 572h1v1h-1zM835 573h1v1h-1zM841 573h1v1h-1zM833 574h2v1h-2zM836 574h5v1h-5zM842 574h2v1h-2zM838 575h1v1h-1zM834 576h9v1h-9zM838 577h1v1h-1zM835 578h1v1h-1zM838 578h1v1h-1zM841 578h1v1h-1zM836 579h1v1h-1zM838 579h1v1h-1zM840 579h1v1h-1zM833 580h11v1h-11z" fill="#000"/><path d="M901 570h2v1h-2zM907 570h1v1h-1zM898 571h3v1h-3zM905 571h1v1h-1zM907 571h1v1h-1zM900 572h1v1h-1zM905 572h1v1h-1zM907 572h1v1h-1zM897 573h7v1h-7zM905 573h1v1h-1zM907 573h1v1h-1zM900 574h1v1h-1zM905 574h1v1h-1zM907 574h1v1h-1zM899 575h3v1h-3zM905 575h1v1h-1zM907 575h1v1h-1zM899 576h2v1h-2zM902 576h1v1h-1zM905 576h1v1h-1zM907 576h1v1h-1zM898 577h1v1h-1zM900 577h1v1h-1zM903 577h1v1h-1zM905 577h1v1h-1zM907 577h1v1h-1zM897 578h1v1h-1zM900 578h1v1h-1zM907 578h1v1h-1zM900 579h1v1h-1zM907 579h1v1h-1zM900 580h1v1h-1zM905 580h3v1h-3zM913 570h1v1h-1zM911 571h7v1h-7zM911 572h1v1h-1zM917 572h1v1h-1zM911 573h7v1h-7zM911 574h1v1h-1zM917 574h1v1h-1zM911 575h7v1h-7zM911 576h1v1h-1zM917 576h1v1h-1zM911 577h7v1h-7zM910 578h1v1h-1zM912 578h1v1h-1zM914 578h1v1h-1zM918 578h1v1h-1zM910 579h1v1h-1zM912 579h1v1h-1zM915 579h1v1h-1zM917 579h1v1h-1zM919 579h1v1h-1zM909 580h1v1h-1zM913 580h5v1h-5z" fill="#000"/><path d="M993 570h1v1h-1zM997 570h1v1h-1zM990 571h11v1h-11zM993 572h1v1h-1zM997 572h1v1h-1zM991 573h1v1h-1zM993 573h1v1h-1zM997 573h2v1h-2zM992 574h1v1h-1zM997 574h1v1h-1zM999 574h1v1h-1zM991 575h1v1h-1zM993 575h1v1h-1zM995 575h6v1h-6zM990 576h1v1h-1zM993 576h1v1h-1zM997 576h1v1h-1zM992 577h2v1h-2zM997 577h1v1h-1zM991 578h1v1h-1zM993 578h1v1h-1zM996 578h1v1h-1zM998 578h1v1h-1zM993 579h1v1h-1zM995 579h1v1h-1zM999 579h1v1h-1zM991 580h2v1h-2zM994 580h1v1h-1zM1000 580h1v1h-1zM1006 570h2v1h-2zM1012 570h1v1h-1zM1003 571h3v1h-3zM1010 571h1v1h-1zM1012 571h1v1h-1zM1005 572h1v1h-1zM1010 572h1v1h-1zM1012 572h1v1h-1zM1002 573h7v1h-7zM1010 573h1v1h-1zM1012 573h1v1h-1zM1005 574h1v1h-1zM1010 574h1v1h-1zM1012 574h1v1h-1zM1004 575h3v1h-3zM1010 575h1v1h-1zM1012 575h1v1h-1zM1004 576h2v1h-2zM1007 576h1v1h-1zM1010 576h1v1h-1zM1012 576h1v1h-1zM1003 577h1v1h-1zM1005 577h1v1h-1zM1008 577h1v1h-1zM1010 577h1v1h-1zM1012 577h1v1h-1zM1002 578h1v1h-1zM1005 578h1v1h-1zM1012 578h1v1h-1zM1005 579h1v1h-1zM1012 579h1v1h-1zM1005 580h1v1h-1zM1010 580h3v1h-3z" fill="#000"/><rect x="16" y="587" width="1005" height="19" fill="#FFFFFF" /><rect x="16" y="606" width="1005" height="1" fill="#D0D0D0" /><rect x="16" y="607" width="1005" height="19" fill="#EBEBEB" /><rect x="16" y="626" width="1005" height="1" fill="#D0D0D0" /><rect x="113" y="587" width="1" height="39" fill="#D0D0D0" /><rect x="281" y="587" width="1" height="39" fill="#D0D0D0" /><rect x="349" y="587" width="1" height="39" fill="#D0D0D0" /><rect x="402" y="587" width="1" height="39" fill="#D0D0D0" /><rect x="470" y="587" width="1" height="39" fill="#D0D0D0" /><rect x="546" y="587" width="1" height="39" fill="#D0D0D0" /><rect x="622" y="587" width="1" height="39" fill="#D0D0D0" /><rect x="698" y="587" width="1" height="39" fill="#D0D0D0" /><rect x="774" y="587" width="1" height="39" fill="#D0D0D0" /><rect x="850" y="587" width="1" height="39" fill="#D0D0D0" /><rect x="927" y="587" width="1" height="39" fill="#D0D0D0" /><path d="M19.5,589.5 h9 l4,4 v10 h-13 z" fill="#F6F6F6" stroke="#6E6E6E" shape-rendering="auto"/><path d="M28.5,589.5 v4 h4" fill="none" stroke="#6E6E6E" shape-rendering="auto"/><circle cx="29.5" cy="601" r="3.8" fill="#E8401A" stroke="#E8401A" stroke-width="0.5" shape-rendering="auto"/><circle cx="28.7" cy="599.9" r="1.4" fill="#FF9070" shape-rendering="auto"/><path d="M19.5,609.5 h9 l4,4 v10 h-13 z" fill="#F6F6F6" stroke="#6E6E6E" shape-rendering="auto"/><path d="M28.5,609.5 v4 h4" fill="none" stroke="#6E6E6E" shape-rendering="auto"/><circle cx="29.5" cy="621" r="3.8" fill="#2A8AE8" stroke="#2A8AE8" stroke-width="0.5" shape-rendering="auto"/><circle cx="28.7" cy="619.9" r="1.4" fill="#90D0FF" shape-rendering="auto"/><text x="41" y="600" font-family="Liberation Sans" font-size="11" fill="#000" text-anchor="start" textLength="47" lengthAdjust="spacingAndGlyphs" stroke="#000" stroke-width="0.2" >25875764</text><text x="41" y="620" font-family="Liberation Sans" font-size="11" fill="#000" text-anchor="start" textLength="47" lengthAdjust="spacingAndGlyphs" stroke="#000" stroke-width="0.2" >25876201</text><text x="191" y="600" font-family="Liberation Sans" font-size="11" fill="#000" text-anchor="start" textLength="87" lengthAdjust="spacingAndGlyphs" stroke="#000" stroke-width="0.2" >2012.02.01 11:38</text><text x="327" y="600" font-family="Liberation Sans" font-size="11" fill="#000" text-anchor="start" textLength="19" lengthAdjust="spacingAndGlyphs" stroke="#000" stroke-width="0.2" >sell</text><text x="375" y="600" font-family="Liberation Sans" font-size="11" fill="#000" text-anchor="start" textLength="24" lengthAdjust="spacingAndGlyphs" stroke="#000" stroke-width="0.2" >0.05</text><text x="434" y="600" font-family="Liberation Sans" font-size="11" fill="#000" text-anchor="start" textLength="33" lengthAdjust="spacingAndGlyphs" stroke="#000" stroke-width="0.2" >eurusd</text><text x="509" y="600" font-family="Liberation Sans" font-size="11" fill="#000" text-anchor="start" textLength="34" lengthAdjust="spacingAndGlyphs" stroke="#000" stroke-width="0.2" >1.3127</text><text x="584" y="600" font-family="Liberation Sans" font-size="11" fill="#000" text-anchor="start" textLength="35" lengthAdjust="spacingAndGlyphs" stroke="#000" stroke-width="0.2" >0.0000</text><text x="660" y="600" font-family="Liberation Sans" font-size="11" fill="#000" text-anchor="start" textLength="35" lengthAdjust="spacingAndGlyphs" stroke="#000" stroke-width="0.2" >0.0000</text><text x="737" y="600" font-family="Liberation Sans" font-size="11" fill="#000" text-anchor="start" textLength="34" lengthAdjust="spacingAndGlyphs" stroke="#000" stroke-width="0.2" >1.3122</text><text x="823" y="600" font-family="Liberation Sans" font-size="11" fill="#000" text-anchor="start" textLength="24" lengthAdjust="spacingAndGlyphs" stroke="#000" stroke-width="0.2" >0.00</text><text x="899" y="600" font-family="Liberation Sans" font-size="11" fill="#000" text-anchor="start" textLength="24" lengthAdjust="spacingAndGlyphs" stroke="#000" stroke-width="0.2" >0.00</text><text x="991" y="600" font-family="Liberation Sans" font-size="11" fill="#000" text-anchor="start" textLength="24" lengthAdjust="spacingAndGlyphs" stroke="#000" stroke-width="0.2" >2.50</text><text x="191" y="620" font-family="Liberation Sans" font-size="11" fill="#000" text-anchor="start" textLength="87" lengthAdjust="spacingAndGlyphs" stroke="#000" stroke-width="0.2" >2012.02.01 11:51</text><text x="328" y="620" font-family="Liberation Sans" font-size="11" fill="#000" text-anchor="start" textLength="18" lengthAdjust="spacingAndGlyphs" stroke="#000" stroke-width="0.2" >buy</text><text x="375" y="620" font-family="Liberation Sans" font-size="11" fill="#000" text-anchor="start" textLength="24" lengthAdjust="spacingAndGlyphs" stroke="#000" stroke-width="0.2" >0.01</text><text x="435" y="620" font-family="Liberation Sans" font-size="11" fill="#000" text-anchor="start" textLength="32" lengthAdjust="spacingAndGlyphs" stroke="#000" stroke-width="0.2" >usdchf</text><text x="509" y="620" font-family="Liberation Sans" font-size="11" fill="#000" text-anchor="start" textLength="34" lengthAdjust="spacingAndGlyphs" stroke="#000" stroke-width="0.2" >0.9178</text><text x="584" y="620" font-family="Liberation Sans" font-size="11" fill="#000" text-anchor="start" textLength="35" lengthAdjust="spacingAndGlyphs" stroke="#000" stroke-width="0.2" >0.0000</text><text x="660" y="620" font-family="Liberation Sans" font-size="11" fill="#000" text-anchor="start" textLength="35" lengthAdjust="spacingAndGlyphs" stroke="#000" stroke-width="0.2" >0.0000</text><text x="737" y="620" font-family="Liberation Sans" font-size="11" fill="#000" text-anchor="start" textLength="34" lengthAdjust="spacingAndGlyphs" stroke="#000" stroke-width="0.2" >0.9179</text><text x="823" y="620" font-family="Liberation Sans" font-size="11" fill="#000" text-anchor="start" textLength="24" lengthAdjust="spacingAndGlyphs" stroke="#000" stroke-width="0.2" >0.00</text><text x="899" y="620" font-family="Liberation Sans" font-size="11" fill="#000" text-anchor="start" textLength="24" lengthAdjust="spacingAndGlyphs" stroke="#000" stroke-width="0.2" >0.00</text><text x="991" y="620" font-family="Liberation Sans" font-size="11" fill="#000" text-anchor="start" textLength="24" lengthAdjust="spacingAndGlyphs" stroke="#000" stroke-width="0.2" >0.10</text><rect x="16" y="627" width="1005" height="19" fill="#C8C8C8" /><rect x="19.5" y="629.5" width="11" height="13" fill="#FFFFFF" stroke="#707070" shape-rendering="auto"/><path d="M25,632 l4,4 h-2.5 v4 h-3 v-4 h-2.5 z" fill="#10A010" shape-rendering="auto"/><path d="M46 631h2v1h-2zM45 632h2v1h-2zM47 632h2v1h-2zM44 633h2v1h-2zM48 633h2v1h-2zM43 634h2v1h-2zM49 634h2v1h-2zM41 635h3v1h-3zM44 635h6v1h-6zM50 635h3v1h-3zM46 636h2v1h-2zM42 637h10v1h-10zM46 638h2v1h-2zM44 639h2v1h-2zM46 639h2v1h-2zM48 639h2v1h-2zM43 640h2v1h-2zM46 640h2v1h-2zM49 640h2v1h-2zM42 641h2v1h-2zM45 641h3v1h-3zM50 641h2v1h-2zM56 631h2v1h-2zM60 631h6v1h-6zM54 632h7v1h-7zM62 632h2v1h-2zM54 633h2v1h-2zM59 633h7v1h-7zM55 634h5v1h-5zM60 634h2v1h-2zM64 634h2v1h-2zM54 635h3v1h-3zM58 635h2v1h-2zM60 635h2v1h-2zM62 635h2v1h-2zM64 635h2v1h-2zM56 636h3v1h-3zM60 636h2v1h-2zM62 636h2v1h-2zM64 636h2v1h-2zM55 637h2v1h-2zM58 637h2v1h-2zM60 637h2v1h-2zM62 637h2v1h-2zM64 637h2v1h-2zM54 638h8v1h-8zM62 638h2v1h-2zM64 638h2v1h-2zM55 639h2v1h-2zM58 639h2v1h-2zM60 639h2v1h-2zM62 639h2v1h-2zM64 639h2v1h-2zM55 640h5v1h-5zM61 640h2v1h-2zM63 640h2v1h-2zM55 641h2v1h-2zM58 641h4v1h-4zM64 641h2v1h-2z" fill="#000"/><text x="66" y="640" font-family="Liberation Sans" font-size="11" fill="#000" text-anchor="start" textLength="3" lengthAdjust="spacingAndGlyphs" font-weight="bold" >:</text><text x="73" y="640" font-family="Liberation Sans" font-size="11" fill="#000" text-anchor="start" textLength="31" lengthAdjust="spacingAndGlyphs" font-weight="bold" >14.32</text><path d="M111 631h2v1h-2zM116 631h2v1h-2zM112 632h2v1h-2zM115 632h6v1h-6zM112 633h2v1h-2zM115 633h2v1h-2zM118 633h2v1h-2zM114 634h8v1h-8zM113 635h2v1h-2zM117 635h2v1h-2zM120 635h2v1h-2zM113 636h10v1h-10zM113 637h2v1h-2zM117 637h2v1h-2zM120 637h2v1h-2zM111 638h3v1h-3zM115 638h7v1h-7zM112 639h2v1h-2zM117 639h2v1h-2zM112 640h2v1h-2zM117 640h2v1h-2zM112 641h2v1h-2zM115 641h4v1h-4zM127 631h2v1h-2zM131 631h2v1h-2zM127 632h9v1h-9zM126 633h2v1h-2zM130 633h2v1h-2zM126 634h2v1h-2zM129 634h6v1h-6zM125 635h3v1h-3zM129 635h2v1h-2zM133 635h2v1h-2zM124 636h2v1h-2zM126 636h2v1h-2zM129 636h6v1h-6zM126 637h2v1h-2zM129 637h2v1h-2zM133 637h2v1h-2zM126 638h2v1h-2zM129 638h4v1h-4zM133 638h2v1h-2zM126 639h2v1h-2zM129 639h2v1h-2zM131 639h4v1h-4zM126 640h2v1h-2zM129 640h2v1h-2zM133 640h2v1h-2zM126 641h2v1h-2zM128 641h8v1h-8z" fill="#000"/><text x="136" y="640" font-family="Liberation Sans" font-size="11" fill="#000" text-anchor="start" textLength="3" lengthAdjust="spacingAndGlyphs" font-weight="bold" >:</text><text x="142" y="640" font-family="Liberation Sans" font-size="11" fill="#000" text-anchor="start" textLength="31" lengthAdjust="spacingAndGlyphs" font-weight="bold" >16.93</text><path d="M180 632h9v1h-9zM187 633h2v1h-2zM187 634h2v1h-2zM180 635h2v1h-2zM187 635h2v1h-2zM180 636h9v1h-9zM180 637h2v1h-2zM180 638h2v1h-2zM189 638h2v1h-2zM180 639h2v1h-2zM189 639h2v1h-2zM180 640h2v1h-2zM189 640h2v1h-2zM181 641h10v1h-10zM193 631h10v1h-10zM193 632h2v1h-2zM197 632h2v1h-2zM201 632h2v1h-2zM193 633h2v1h-2zM197 633h2v1h-2zM201 633h2v1h-2zM193 634h10v1h-10zM193 635h2v1h-2zM197 635h2v1h-2zM201 635h2v1h-2zM193 636h2v1h-2zM197 636h2v1h-2zM201 636h2v1h-2zM193 637h10v1h-10zM193 638h2v1h-2zM197 638h2v1h-2zM201 638h2v1h-2zM193 639h2v1h-2zM197 639h2v1h-2zM201 639h2v1h-2zM192 640h2v1h-2zM197 640h2v1h-2zM201 640h2v1h-2zM192 641h2v1h-2zM197 641h2v1h-2zM200 641h3v1h-3zM208 631h2v1h-2zM210 631h6v1h-6zM208 632h2v1h-2zM210 632h2v1h-2zM214 632h2v1h-2zM207 633h2v1h-2zM210 633h2v1h-2zM214 633h2v1h-2zM207 634h2v1h-2zM210 634h6v1h-6zM206 635h3v1h-3zM212 635h2v1h-2zM205 636h2v1h-2zM207 636h2v1h-2zM209 636h8v1h-8zM207 637h2v1h-2zM212 637h2v1h-2zM207 638h2v1h-2zM211 638h4v1h-4zM207 639h2v1h-2zM210 639h2v1h-2zM212 639h2v1h-2zM214 639h2v1h-2zM207 640h2v1h-2zM209 640h2v1h-2zM212 640h2v1h-2zM215 640h2v1h-2zM207 641h2v1h-2zM212 641h2v1h-2zM219 631h2v1h-2zM220 632h2v1h-2zM222 632h8v1h-8zM220 633h2v1h-2zM225 633h2v1h-2zM225 634h2v1h-2zM218 635h4v1h-4zM223 635h2v1h-2zM225 635h2v1h-2zM220 636h2v1h-2zM223 636h2v1h-2zM225 636h4v1h-4zM220 637h2v1h-2zM223 637h2v1h-2zM225 637h2v1h-2zM220 638h2v1h-2zM222 638h3v1h-3zM225 638h2v1h-2zM220 639h3v1h-3zM223 639h2v1h-2zM225 639h2v1h-2zM220 640h2v1h-2zM223 640h2v1h-2zM225 640h2v1h-2zM221 641h9v1h-9zM236 631h2v1h-2zM235 632h2v1h-2zM237 632h2v1h-2zM234 633h2v1h-2zM238 633h2v1h-2zM233 634h2v1h-2zM239 634h2v1h-2zM231 635h3v1h-3zM234 635h6v1h-6zM240 635h3v1h-3zM236 636h2v1h-2zM232 637h10v1h-10zM236 638h2v1h-2zM233 639h2v1h-2zM236 639h2v1h-2zM239 639h2v1h-2zM234 640h2v1h-2zM236 640h2v1h-2zM238 640h2v1h-2zM231 641h12v1h-12z" fill="#000"/><text x="244" y="640" font-family="Liberation Sans" font-size="11" fill="#000" text-anchor="start" textLength="3" lengthAdjust="spacingAndGlyphs" font-weight="bold" >:</text><text x="250" y="640" font-family="Liberation Sans" font-size="11" fill="#000" text-anchor="start" textLength="30" lengthAdjust="spacingAndGlyphs" font-weight="bold" >15.13</text><path d="M287 632h12v1h-12zM295 633h2v1h-2zM289 634h5v1h-5zM295 634h2v1h-2zM289 635h2v1h-2zM292 635h2v1h-2zM295 635h2v1h-2zM289 636h2v1h-2zM292 636h2v1h-2zM295 636h2v1h-2zM289 637h5v1h-5zM295 637h2v1h-2zM289 638h2v1h-2zM292 638h2v1h-2zM295 638h2v1h-2zM295 639h2v1h-2zM295 640h2v1h-2zM293 641h4v1h-4zM301 631h10v1h-10zM301 632h2v1h-2zM305 632h2v1h-2zM309 632h2v1h-2zM301 633h2v1h-2zM305 633h2v1h-2zM309 633h2v1h-2zM301 634h10v1h-10zM301 635h2v1h-2zM305 635h2v1h-2zM309 635h2v1h-2zM301 636h2v1h-2zM305 636h2v1h-2zM309 636h2v1h-2zM301 637h10v1h-10zM301 638h2v1h-2zM305 638h2v1h-2zM309 638h2v1h-2zM301 639h2v1h-2zM305 639h2v1h-2zM309 639h2v1h-2zM300 640h2v1h-2zM305 640h2v1h-2zM309 640h2v1h-2zM300 641h2v1h-2zM305 641h2v1h-2zM308 641h3v1h-3zM316 631h2v1h-2zM318 631h6v1h-6zM316 632h2v1h-2zM318 632h2v1h-2zM322 632h2v1h-2zM315 633h2v1h-2zM318 633h2v1h-2zM322 633h2v1h-2zM315 634h2v1h-2zM318 634h6v1h-6zM314 635h3v1h-3zM320 635h2v1h-2zM313 636h2v1h-2zM315 636h2v1h-2zM317 636h8v1h-8zM315 637h2v1h-2zM320 637h2v1h-2zM315 638h2v1h-2zM319 638h4v1h-4zM315 639h2v1h-2zM318 639h2v1h-2zM320 639h2v1h-2zM322 639h2v1h-2zM315 640h2v1h-2zM317 640h2v1h-2zM320 640h2v1h-2zM323 640h2v1h-2zM315 641h2v1h-2zM320 641h2v1h-2zM327 631h2v1h-2zM328 632h2v1h-2zM330 632h8v1h-8zM328 633h2v1h-2zM333 633h2v1h-2zM333 634h2v1h-2zM326 635h4v1h-4zM331 635h2v1h-2zM333 635h2v1h-2zM328 636h2v1h-2zM331 636h2v1h-2zM333 636h4v1h-4zM328 637h2v1h-2zM331 637h2v1h-2zM333 637h2v1h-2zM328 638h2v1h-2zM330 638h3v1h-3zM333 638h2v1h-2zM328 639h3v1h-3zM331 639h2v1h-2zM333 639h2v1h-2zM328 640h2v1h-2zM331 640h2v1h-2zM333 640h2v1h-2zM329 641h9v1h-9zM344 631h2v1h-2zM343 632h2v1h-2zM345 632h2v1h-2zM342 633h2v1h-2zM346 633h2v1h-2zM341 634h2v1h-2zM347 634h2v1h-2zM339 635h3v1h-3zM342 635h6v1h-6zM348 635h3v1h-3zM344 636h2v1h-2zM340 637h10v1h-10zM344 638h2v1h-2zM341 639h2v1h-2zM344 639h2v1h-2zM347 639h2v1h-2zM342 640h2v1h-2zM344 640h2v1h-2zM346 640h2v1h-2zM339 641h12v1h-12z" fill="#000"/><text x="352" y="640" font-family="Liberation Sans" font-size="11" fill="#000" text-anchor="start" textLength="3" lengthAdjust="spacingAndGlyphs" font-weight="bold" >:</text><text x="357" y="640" font-family="Liberation Sans" font-size="11" fill="#000" text-anchor="start" textLength="24" lengthAdjust="spacingAndGlyphs" font-weight="bold" >1.80</text><path d="M391 631h2v1h-2zM393 631h6v1h-6zM391 632h2v1h-2zM393 632h2v1h-2zM397 632h2v1h-2zM390 633h2v1h-2zM393 633h2v1h-2zM397 633h2v1h-2zM390 634h2v1h-2zM393 634h6v1h-6zM389 635h3v1h-3zM395 635h2v1h-2zM388 636h2v1h-2zM390 636h2v1h-2zM392 636h8v1h-8zM390 637h2v1h-2zM395 637h2v1h-2zM390 638h2v1h-2zM394 638h4v1h-4zM390 639h2v1h-2zM393 639h2v1h-2zM395 639h2v1h-2zM397 639h2v1h-2zM390 640h2v1h-2zM392 640h2v1h-2zM395 640h2v1h-2zM398 640h2v1h-2zM390 641h2v1h-2zM395 641h2v1h-2zM402 631h2v1h-2zM403 632h2v1h-2zM405 632h8v1h-8zM403 633h2v1h-2zM408 633h2v1h-2zM408 634h2v1h-2zM401 635h4v1h-4zM406 635h2v1h-2zM408 635h2v1h-2zM403 636h2v1h-2zM406 636h2v1h-2zM408 636h4v1h-4zM403 637h2v1h-2zM406 637h2v1h-2zM408 637h2v1h-2zM403 638h2v1h-2zM405 638h3v1h-3zM408 638h2v1h-2zM403 639h3v1h-3zM406 639h2v1h-2zM408 639h2v1h-2zM403 640h2v1h-2zM406 640h2v1h-2zM408 640h2v1h-2zM404 641h9v1h-9zM419 631h2v1h-2zM418 632h2v1h-2zM420 632h2v1h-2zM417 633h2v1h-2zM421 633h2v1h-2zM416 634h2v1h-2zM422 634h2v1h-2zM414 635h3v1h-3zM417 635h6v1h-6zM423 635h3v1h-3zM419 636h2v1h-2zM415 637h10v1h-10zM419 638h2v1h-2zM416 639h2v1h-2zM419 639h2v1h-2zM422 639h2v1h-2zM417 640h2v1h-2zM419 640h2v1h-2zM421 640h2v1h-2zM414 641h12v1h-12zM428 631h2v1h-2zM433 631h2v1h-2zM428 632h2v1h-2zM433 632h2v1h-2zM428 633h2v1h-2zM433 633h2v1h-2zM436 633h2v1h-2zM428 634h2v1h-2zM433 634h2v1h-2zM435 634h2v1h-2zM428 635h5v1h-5zM433 635h3v1h-3zM428 636h2v1h-2zM433 636h2v1h-2zM428 637h2v1h-2zM433 637h2v1h-2zM428 638h2v1h-2zM433 638h2v1h-2zM428 639h2v1h-2zM430 639h3v1h-3zM433 639h2v1h-2zM437 639h2v1h-2zM428 640h3v1h-3zM433 640h2v1h-2zM437 640h2v1h-2zM428 641h2v1h-2zM434 641h5v1h-5zM442 631h7v1h-7zM450 631h2v1h-2zM442 632h2v1h-2zM445 632h2v1h-2zM450 632h2v1h-2zM442 633h2v1h-2zM445 633h2v1h-2zM448 633h2v1h-2zM450 633h2v1h-2zM441 634h3v1h-3zM444 634h2v1h-2zM446 634h4v1h-4zM450 634h2v1h-2zM441 635h3v1h-3zM444 635h2v1h-2zM447 635h3v1h-3zM450 635h2v1h-2zM440 636h2v1h-2zM442 636h4v1h-4zM446 636h2v1h-2zM448 636h2v1h-2zM450 636h2v1h-2zM442 637h2v1h-2zM445 637h3v1h-3zM448 637h2v1h-2zM450 637h2v1h-2zM442 638h2v1h-2zM446 638h2v1h-2zM448 638h2v1h-2zM450 638h2v1h-2zM442 639h2v1h-2zM445 639h2v1h-2zM450 639h2v1h-2zM442 640h2v1h-2zM444 640h2v1h-2zM450 640h2v1h-2zM442 641h3v1h-3zM449 641h3v1h-3z" fill="#000"/><text x="455" y="640" font-family="Liberation Sans" font-size="11" fill="#000" text-anchor="start" textLength="3" lengthAdjust="spacingAndGlyphs" font-weight="bold" >:</text><text x="459" y="640" font-family="Liberation Sans" font-size="11" fill="#000" text-anchor="start" textLength="50" lengthAdjust="spacingAndGlyphs" font-weight="bold" >111.92%</text><text x="1014" y="640" font-family="Liberation Sans" font-size="11.5" fill="#000" text-anchor="end" textLength="25" lengthAdjust="spacingAndGlyphs" font-weight="bold" >2.61</text><rect x="15" y="693" width="1006" height="21" fill="#ECEAEC" /><rect x="15" y="693" width="1006" height="1" fill="#000000" /><rect x="17" y="693" width="45" height="17" fill="#FFFFFF" /><rect x="17" y="693" width="1" height="18" fill="#000" /><rect x="61" y="693" width="1" height="18" fill="#000" /><rect x="17" y="710" width="45" height="1" fill="#000" /><rect x="62" y="694" width="1" height="18" fill="#808080" /><rect x="18" y="711" width="45" height="1" fill="#808080" /><path d="M32 697h1v1h-1zM27 698h11v1h-11zM30 700h1v1h-1zM34 700h1v1h-1zM29 701h1v1h-1zM35 701h1v1h-1zM28 702h1v1h-1zM30 702h1v1h-1zM34 702h1v1h-1zM36 702h1v1h-1zM30 703h1v1h-1zM34 703h1v1h-1zM31 704h1v1h-1zM33 704h1v1h-1zM32 705h1v1h-1zM30 706h2v1h-2zM33 706h2v1h-2zM28 707h2v1h-2zM35 707h3v1h-3zM41 697h7v1h-7zM41 698h1v1h-1zM47 698h1v1h-1zM41 699h7v1h-7zM41 700h1v1h-1zM47 700h1v1h-1zM41 701h7v1h-7zM41 702h1v1h-1zM41 703h8v1h-8zM40 704h1v1h-1zM43 704h1v1h-1zM45 704h1v1h-1zM48 704h1v1h-1zM39 705h1v1h-1zM42 705h1v1h-1zM45 705h1v1h-1zM48 705h1v1h-1zM41 706h1v1h-1zM44 706h1v1h-1zM48 706h1v1h-1zM40 707h1v1h-1zM43 707h1v1h-1zM46 707h2v1h-2z" fill="#000"/><path d="M71 697h5v1h-5zM77 697h1v1h-1zM80 697h1v1h-1zM71 698h1v1h-1zM75 698h1v1h-1zM77 698h1v1h-1zM80 698h1v1h-1zM71 699h1v1h-1zM73 699h1v1h-1zM75 699h1v1h-1zM77 699h1v1h-1zM79 699h1v1h-1zM71 700h1v1h-1zM73 700h1v1h-1zM75 700h1v1h-1zM77 700h2v1h-2zM71 701h1v1h-1zM73 701h1v1h-1zM75 701h1v1h-1zM77 701h1v1h-1zM71 702h1v1h-1zM73 702h1v1h-1zM75 702h7v1h-7zM71 703h1v1h-1zM73 703h1v1h-1zM75 703h1v1h-1zM77 703h1v1h-1zM79 703h1v1h-1zM73 704h1v1h-1zM77 704h1v1h-1zM79 704h1v1h-1zM72 705h1v1h-1zM74 705h1v1h-1zM77 705h1v1h-1zM80 705h1v1h-1zM72 706h1v1h-1zM75 706h1v1h-1zM77 706h2v1h-2zM80 706h1v1h-1zM71 707h1v1h-1zM75 707h1v1h-1zM77 707h1v1h-1zM81 707h1v1h-1zM88 697h1v1h-1zM89 698h1v1h-1zM85 699h8v1h-8zM85 700h1v1h-1zM92 700h1v1h-1zM85 701h1v1h-1zM92 701h1v1h-1zM85 702h8v1h-8zM85 703h1v1h-1zM85 704h1v1h-1zM85 705h1v1h-1zM84 706h1v1h-1zM83 707h1v1h-1zM97 697h9v1h-9zM97 698h1v1h-1zM97 699h1v1h-1zM101 699h1v1h-1zM97 700h1v1h-1zM101 700h1v1h-1zM97 701h1v1h-1zM99 701h7v1h-7zM97 702h1v1h-1zM101 702h1v1h-1zM105 702h1v1h-1zM97 703h1v1h-1zM101 703h1v1h-1zM105 703h1v1h-1zM97 704h1v1h-1zM100 704h1v1h-1zM105 704h1v1h-1zM96 705h1v1h-1zM100 705h1v1h-1zM105 705h1v1h-1zM96 706h1v1h-1zM99 706h1v1h-1zM105 706h1v1h-1zM95 707h1v1h-1zM98 707h1v1h-1zM103 707h2v1h-2zM112 697h1v1h-1zM112 698h1v1h-1zM108 699h9v1h-9zM108 700h1v1h-1zM112 700h1v1h-1zM116 700h1v1h-1zM108 701h1v1h-1zM112 701h1v1h-1zM116 701h1v1h-1zM108 702h9v1h-9zM109 703h1v1h-1zM112 703h1v1h-1zM110 704h1v1h-1zM112 704h1v1h-1zM111 705h1v1h-1zM110 706h1v1h-1zM112 706h2v1h-2zM107 707h3v1h-3zM114 707h4v1h-4z" fill="#8C8C8C"/><path d="M142 697h1v1h-1zM148 697h2v1h-2zM139 698h6v1h-6zM146 698h2v1h-2zM140 699h1v1h-1zM144 699h1v1h-1zM146 699h1v1h-1zM141 700h1v1h-1zM143 700h1v1h-1zM146 700h1v1h-1zM139 701h6v1h-6zM146 701h4v1h-4zM142 702h1v1h-1zM146 702h1v1h-1zM148 702h1v1h-1zM139 703h6v1h-6zM146 703h1v1h-1zM148 703h1v1h-1zM142 704h1v1h-1zM146 704h1v1h-1zM148 704h1v1h-1zM140 705h1v1h-1zM142 705h1v1h-1zM144 705h1v1h-1zM146 705h1v1h-1zM148 705h1v1h-1zM139 706h1v1h-1zM142 706h1v1h-1zM145 706h1v1h-1zM148 706h1v1h-1zM141 707h2v1h-2zM144 707h1v1h-1zM148 707h1v1h-1zM153 697h1v1h-1zM156 697h6v1h-6zM154 698h1v1h-1zM161 698h1v1h-1zM152 699h1v1h-1zM154 699h6v1h-6zM161 699h1v1h-1zM152 700h1v1h-1zM155 700h1v1h-1zM158 700h1v1h-1zM161 700h1v1h-1zM152 701h1v1h-1zM155 701h4v1h-4zM161 701h1v1h-1zM152 702h1v1h-1zM155 702h1v1h-1zM158 702h1v1h-1zM161 702h1v1h-1zM152 703h1v1h-1zM155 703h4v1h-4zM161 703h1v1h-1zM152 704h1v1h-1zM155 704h1v1h-1zM158 704h2v1h-2zM161 704h1v1h-1zM152 705h1v1h-1zM154 705h5v1h-5zM161 705h1v1h-1zM152 706h1v1h-1zM158 706h1v1h-1zM161 706h1v1h-1zM152 707h1v1h-1zM160 707h2v1h-2z" fill="#8C8C8C"/><path d="M184 697h6v1h-6zM191 697h1v1h-1zM185 698h1v1h-1zM188 698h1v1h-1zM191 698h4v1h-4zM184 699h7v1h-7zM192 699h1v1h-1zM185 700h1v1h-1zM187 700h1v1h-1zM189 700h1v1h-1zM191 700h1v1h-1zM193 700h1v1h-1zM184 701h11v1h-11zM185 703h9v1h-9zM186 705h7v1h-7zM186 706h1v1h-1zM192 706h1v1h-1zM186 707h7v1h-7zM198 697h1v1h-1zM201 697h5v1h-5zM198 698h1v1h-1zM201 698h1v1h-1zM205 698h1v1h-1zM196 699h6v1h-6zM205 699h1v1h-1zM198 700h1v1h-1zM201 700h1v1h-1zM203 700h2v1h-2zM198 701h1v1h-1zM200 701h2v1h-2zM198 702h2v1h-2zM201 702h6v1h-6zM197 703h2v1h-2zM201 703h1v1h-1zM203 703h1v1h-1zM205 703h1v1h-1zM196 704h1v1h-1zM198 704h1v1h-1zM201 704h1v1h-1zM203 704h1v1h-1zM205 704h1v1h-1zM198 705h1v1h-1zM201 705h1v1h-1zM204 705h1v1h-1zM198 706h1v1h-1zM201 706h1v1h-1zM203 706h1v1h-1zM205 706h1v1h-1zM196 707h3v1h-3zM201 707h2v1h-2zM206 707h1v1h-1z" fill="#8C8C8C"/><path d="M229 697h1v1h-1zM233 697h5v1h-5zM229 698h1v1h-1zM233 698h1v1h-1zM237 698h1v1h-1zM227 699h5v1h-5zM233 699h1v1h-1zM236 699h1v1h-1zM227 700h1v1h-1zM229 700h1v1h-1zM231 700h1v1h-1zM233 700h1v1h-1zM236 700h1v1h-1zM227 701h1v1h-1zM229 701h1v1h-1zM231 701h1v1h-1zM233 701h1v1h-1zM235 701h1v1h-1zM227 702h5v1h-5zM233 702h1v1h-1zM236 702h1v1h-1zM227 703h1v1h-1zM229 703h1v1h-1zM231 703h1v1h-1zM233 703h1v1h-1zM237 703h1v1h-1zM227 704h1v1h-1zM229 704h1v1h-1zM231 704h1v1h-1zM233 704h1v1h-1zM237 704h1v1h-1zM227 705h5v1h-5zM233 705h1v1h-1zM235 705h1v1h-1zM237 705h1v1h-1zM227 706h1v1h-1zM231 706h1v1h-1zM233 706h1v1h-1zM236 706h1v1h-1zM233 707h1v1h-1zM241 697h1v1h-1zM246 697h1v1h-1zM241 698h4v1h-4zM246 698h4v1h-4zM240 699h1v1h-1zM243 699h1v1h-1zM245 699h1v1h-1zM247 699h1v1h-1zM239 700h1v1h-1zM242 700h1v1h-1zM244 700h1v1h-1zM248 700h1v1h-1zM240 701h9v1h-9zM242 702h1v1h-1zM245 702h1v1h-1zM248 702h1v1h-1zM241 703h3v1h-3zM245 703h4v1h-4zM240 704h1v1h-1zM242 704h1v1h-1zM244 704h2v1h-2zM248 704h1v1h-1zM239 705h1v1h-1zM242 705h1v1h-1zM245 705h4v1h-4zM242 706h1v1h-1zM245 706h1v1h-1zM248 706h1v1h-1zM242 707h1v1h-1zM245 707h4v1h-4z" fill="#8C8C8C"/><path d="M273 697h1v1h-1zM273 698h4v1h-4zM278 698h4v1h-4zM272 699h1v1h-1zM274 699h1v1h-1zM278 699h1v1h-1zM281 699h1v1h-1zM272 700h7v1h-7zM281 700h1v1h-1zM274 701h2v1h-2zM278 701h4v1h-4zM273 702h1v1h-1zM276 702h1v1h-1zM278 702h1v1h-1zM281 702h1v1h-1zM272 703h1v1h-1zM274 703h7v1h-7zM274 704h1v1h-1zM280 704h1v1h-1zM274 705h7v1h-7zM274 706h1v1h-1zM280 706h1v1h-1zM274 707h7v1h-7zM285 697h1v1h-1zM290 697h1v1h-1zM284 698h1v1h-1zM287 698h1v1h-1zM290 698h1v1h-1zM292 698h1v1h-1zM283 699h6v1h-6zM290 699h2v1h-2zM290 700h1v1h-1zM293 700h1v1h-1zM284 701h5v1h-5zM290 701h4v1h-4zM284 702h1v1h-1zM288 702h1v1h-1zM284 703h5v1h-5zM290 703h1v1h-1zM292 703h1v1h-1zM284 704h1v1h-1zM288 704h1v1h-1zM290 704h2v1h-2zM284 705h5v1h-5zM290 705h1v1h-1zM293 705h1v1h-1zM284 706h1v1h-1zM288 706h1v1h-1zM290 706h1v1h-1zM293 706h1v1h-1zM284 707h1v1h-1zM287 707h2v1h-2zM290 707h4v1h-4zM300 697h1v1h-1zM295 698h11v1h-11zM298 700h1v1h-1zM302 700h1v1h-1zM297 701h1v1h-1zM303 701h1v1h-1zM296 702h1v1h-1zM298 702h1v1h-1zM302 702h1v1h-1zM304 702h1v1h-1zM298 703h1v1h-1zM302 703h1v1h-1zM299 704h1v1h-1zM301 704h1v1h-1zM300 705h1v1h-1zM298 706h2v1h-2zM301 706h2v1h-2zM296 707h2v1h-2zM303 707h3v1h-3zM309 697h7v1h-7zM309 698h1v1h-1zM315 698h1v1h-1zM309 699h7v1h-7zM309 700h1v1h-1zM315 700h1v1h-1zM309 701h7v1h-7zM309 702h1v1h-1zM309 703h8v1h-8zM308 704h1v1h-1zM311 704h1v1h-1zM313 704h1v1h-1zM316 704h1v1h-1zM307 705h1v1h-1zM310 705h1v1h-1zM313 705h1v1h-1zM316 705h1v1h-1zM309 706h1v1h-1zM312 706h1v1h-1zM316 706h1v1h-1zM308 707h1v1h-1zM311 707h1v1h-1zM314 707h2v1h-2z" fill="#8C8C8C"/><path d="M342 698h7v1h-7zM342 699h1v1h-1zM348 699h1v1h-1zM342 700h1v1h-1zM348 700h1v1h-1zM342 701h1v1h-1zM348 701h1v1h-1zM342 702h7v1h-7zM342 703h1v1h-1zM348 703h1v1h-1zM342 704h1v1h-1zM348 704h1v1h-1zM342 705h1v1h-1zM348 705h1v1h-1zM342 706h7v1h-7zM342 707h1v1h-1zM348 707h1v1h-1zM357 697h1v1h-1zM357 698h1v1h-1zM352 699h11v1h-11zM357 700h1v1h-1zM357 701h1v1h-1zM353 702h9v1h-9zM357 703h1v1h-1zM355 704h1v1h-1zM358 704h1v1h-1zM361 704h1v1h-1zM353 705h1v1h-1zM355 705h1v1h-1zM358 705h1v1h-1zM360 705h1v1h-1zM362 705h1v1h-1zM353 706h1v1h-1zM355 706h1v1h-1zM360 706h1v1h-1zM362 706h1v1h-1zM352 707h1v1h-1zM356 707h5v1h-5z" fill="#8C8C8C"/><rect x="130" y="698" width="1" height="11" fill="#909090" /><rect x="174" y="698" width="1" height="11" fill="#909090" /><rect x="218" y="698" width="1" height="11" fill="#909090" /><rect x="262" y="698" width="1" height="11" fill="#909090" /><rect x="330" y="698" width="1" height="11" fill="#909090" /><rect x="375" y="698" width="1" height="11" fill="#909090" /><rect x="0" y="715" width="1024" height="1" fill="#A8A7A8" /><rect x="0" y="716" width="1024" height="1" fill="#FFFFFF" /><rect x="0" y="717" width="1024" height="21" fill="#ECEAEC" /><path d="M2 724h8v1h-8zM9 725h1v1h-1zM3 726h7v1h-7zM9 727h1v1h-1zM2 728h8v1h-8zM8 729h1v1h-1zM1 730h11v1h-11zM3 731h1v1h-1zM8 731h1v1h-1zM4 732h1v1h-1zM8 732h1v1h-1zM6 733h1v1h-1zM8 733h1v1h-1zM7 734h1v1h-1zM18 724h1v1h-1zM21 724h1v1h-1zM18 725h1v1h-1zM22 725h1v1h-1zM13 726h11v1h-11zM18 727h1v1h-1zM15 728h1v1h-1zM18 728h1v1h-1zM21 728h1v1h-1zM16 729h1v1h-1zM18 729h1v1h-1zM20 729h1v1h-1zM17 730h3v1h-3zM16 731h1v1h-1zM18 731h1v1h-1zM20 731h1v1h-1zM15 732h1v1h-1zM18 732h1v1h-1zM21 732h1v1h-1zM13 733h2v1h-2zM18 733h1v1h-1zM22 733h2v1h-2zM17 734h2v1h-2zM28 724h1v1h-1zM26 725h5v1h-5zM32 725h4v1h-4zM28 726h1v1h-1zM32 726h1v1h-1zM35 726h1v1h-1zM26 727h5v1h-5zM32 727h1v1h-1zM34 727h1v1h-1zM28 728h1v1h-1zM32 728h1v1h-1zM35 728h1v1h-1zM25 729h6v1h-6zM32 729h4v1h-4zM27 730h1v1h-1zM30 730h1v1h-1zM32 730h1v1h-1zM26 731h9v1h-9zM27 732h1v1h-1zM30 732h1v1h-1zM34 732h1v1h-1zM27 733h1v1h-1zM30 733h1v1h-1zM33 733h2v1h-2zM30 734h1v1h-1zM44 724h1v1h-1zM38 725h4v1h-4zM44 725h1v1h-1zM38 726h1v1h-1zM41 726h1v1h-1zM44 726h1v1h-1zM38 727h1v1h-1zM41 727h1v1h-1zM43 727h5v1h-5zM38 728h4v1h-4zM44 728h1v1h-1zM47 728h1v1h-1zM38 729h1v1h-1zM41 729h1v1h-1zM44 729h1v1h-1zM47 729h1v1h-1zM38 730h4v1h-4zM44 730h1v1h-1zM47 730h1v1h-1zM38 731h1v1h-1zM41 731h1v1h-1zM44 731h1v1h-1zM47 731h1v1h-1zM38 732h1v1h-1zM40 732h4v1h-4zM47 732h1v1h-1zM37 733h3v1h-3zM43 733h1v1h-1zM45 733h1v1h-1zM47 733h1v1h-1zM42 734h1v1h-1zM46 734h1v1h-1z" fill="#000"/><text x="49" y="733" font-family="Liberation Sans" font-size="11" fill="#000" text-anchor="start" stroke="#000" stroke-width="0.2" >,</text><path d="M54 724h1v1h-1zM60 724h1v1h-1zM55 725h1v1h-1zM57 725h7v1h-7zM55 726h1v1h-1zM60 726h1v1h-1zM58 727h5v1h-5zM53 728h3v1h-3zM60 728h1v1h-1zM55 729h1v1h-1zM57 729h7v1h-7zM55 730h1v1h-1zM58 730h1v1h-1zM62 730h1v1h-1zM55 731h1v1h-1zM58 731h5v1h-5zM55 732h1v1h-1zM58 732h1v1h-1zM62 732h1v1h-1zM55 733h2v1h-2zM58 733h5v1h-5zM55 734h1v1h-1zM58 734h1v1h-1zM62 734h1v1h-1zM67 724h1v1h-1zM72 724h1v1h-1zM67 725h1v1h-1zM73 725h1v1h-1zM65 726h11v1h-11zM67 727h1v1h-1zM70 727h1v1h-1zM72 727h1v1h-1zM75 727h1v1h-1zM67 728h1v1h-1zM69 728h1v1h-1zM72 728h1v1h-1zM67 729h2v1h-2zM70 729h6v1h-6zM66 730h2v1h-2zM71 730h1v1h-1zM74 730h1v1h-1zM65 731h1v1h-1zM67 731h1v1h-1zM70 731h2v1h-2zM74 731h1v1h-1zM67 732h1v1h-1zM72 732h2v1h-2zM67 733h1v1h-1zM71 733h1v1h-1zM73 733h1v1h-1zM65 734h3v1h-3zM69 734h2v1h-2zM74 734h2v1h-2z" fill="#000"/><text x="77" y="733" font-family="Liberation Sans" font-size="11" fill="#000" text-anchor="start" textLength="12" lengthAdjust="spacingAndGlyphs" stroke="#000" stroke-width="0.2" >F1</text><path d="M90 724h1v1h-1zM92 724h3v1h-3zM97 724h1v1h-1zM90 725h1v1h-1zM94 725h6v1h-6zM90 726h2v1h-2zM93 726h1v1h-1zM97 726h1v1h-1zM99 726h1v1h-1zM89 727h1v1h-1zM93 727h1v1h-1zM95 727h5v1h-5zM89 728h6v1h-6zM97 728h1v1h-1zM99 728h1v1h-1zM90 729h1v1h-1zM94 729h6v1h-6zM89 730h3v1h-3zM94 730h1v1h-1zM97 730h1v1h-1zM90 731h1v1h-1zM92 731h1v1h-1zM94 731h6v1h-6zM90 732h1v1h-1zM93 732h1v1h-1zM97 732h1v1h-1zM90 733h2v1h-2zM93 733h2v1h-2zM97 733h1v1h-1zM90 734h1v1h-1zM92 734h1v1h-1zM95 734h5v1h-5z" fill="#000"/><rect x="303" y="720" width="1" height="17" fill="#A8A8A8" /><rect x="304" y="720" width="1" height="17" fill="#FFFFFF" /><rect x="413" y="720" width="1" height="17" fill="#A8A8A8" /><rect x="414" y="720" width="1" height="17" fill="#FFFFFF" /><rect x="514" y="720" width="1" height="17" fill="#A8A8A8" /><rect x="515" y="720" width="1" height="17" fill="#FFFFFF" /><rect x="586" y="720" width="1" height="17" fill="#A8A8A8" /><rect x="587" y="720" width="1" height="17" fill="#FFFFFF" /><rect x="657" y="720" width="1" height="17" fill="#A8A8A8" /><rect x="658" y="720" width="1" height="17" fill="#FFFFFF" /><rect x="726" y="720" width="1" height="17" fill="#A8A8A8" /><rect x="727" y="720" width="1" height="17" fill="#FFFFFF" /><rect x="797" y="720" width="1" height="17" fill="#A8A8A8" /><rect x="798" y="720" width="1" height="17" fill="#FFFFFF" /><rect x="863" y="720" width="1" height="17" fill="#A8A8A8" /><rect x="864" y="720" width="1" height="17" fill="#FFFFFF" /><text x="308" y="733" font-family="Liberation Sans" font-size="11" fill="#000" text-anchor="start" textLength="36" lengthAdjust="spacingAndGlyphs" stroke="#000" stroke-width="0.2" >Default</text><rect x="868" y="722" width="2" height="10" fill="#4A8A18" /><rect x="868" y="732" width="2" height="2" fill="#B81010" /><rect x="872" y="722" width="2" height="8" fill="#4A8A18" /><rect x="872" y="730" width="2" height="4" fill="#B81010" /><rect x="876" y="722" width="2" height="7" fill="#4A8A18" /><rect x="876" y="729" width="2" height="5" fill="#B81010" /><rect x="880" y="722" width="2" height="5" fill="#4A8A18" /><rect x="880" y="727" width="2" height="7" fill="#B81010" /><rect x="884" y="722" width="2" height="4" fill="#4A8A18" /><rect x="884" y="726" width="2" height="8" fill="#B81010" /><rect x="888" y="722" width="2" height="2" fill="#4A8A18" /><rect x="888" y="724" width="2" height="10" fill="#B81010" /><text x="919" y="733" font-family="Liberation Sans" font-size="11" fill="#000" text-anchor="start" textLength="41" lengthAdjust="spacingAndGlyphs" stroke="#000" stroke-width="0.2" >436/3 kb</text><path d="M1022,736 l0,0" /><path d="M1019,736 l0,0" /><path d="M1016,736 l0,0" /><path d="M1013,736 l0,0" /><path d="M1012,737 L1022,727 M1016,737 L1022,731 M1020,737 L1022,735" stroke="#A0A0A0" stroke-width="1.2" shape-rendering="auto"/><rect x="0" y="738" width="1024" height="1" fill="#223CA0" /><rect x="0" y="739" width="1024" height="1" fill="#76B4F2" /><rect x="0" y="740" width="1024" height="1" fill="#6EAEF1" /><rect x="0" y="741" width="1024" height="1" fill="#66A8F0" /><rect x="0" y="742" width="1024" height="1" fill="#62A4EE" /><rect x="0" y="743" width="1024" height="1" fill="#5E9FED" /><rect x="0" y="744" width="1024" height="1" fill="#5A9AEC" /><rect x="0" y="745" width="1024" height="1" fill="#5696EA" /><rect x="0" y="746" width="1024" height="1" fill="#5393E8" /><rect x="0" y="747" width="1024" height="1" fill="#5090E7" /><rect x="0" y="748" width="1024" height="1" fill="#4E8CE5" /><rect x="0" y="749" width="1024" height="1" fill="#4B89E4" /><rect x="0" y="750" width="1024" height="1" fill="#4886E2" /><rect x="0" y="751" width="1024" height="1" fill="#4683E1" /><rect x="0" y="752" width="1024" height="1" fill="#4480DF" /><rect x="0" y="753" width="1024" height="1" fill="#427DDE" /><rect x="0" y="754" width="1024" height="1" fill="#407ADD" /><rect x="0" y="755" width="1024" height="1" fill="#3E77DB" /><rect x="0" y="756" width="1024" height="1" fill="#3C74DA" /><rect x="0" y="757" width="1024" height="1" fill="#3A71D9" /><rect x="0" y="758" width="1024" height="1" fill="#396FD7" /><rect x="0" y="759" width="1024" height="1" fill="#376CD6" /><rect x="0" y="760" width="1024" height="1" fill="#3569D5" /><rect x="0" y="761" width="1024" height="1" fill="#3467D3" /><rect x="0" y="762" width="1024" height="1" fill="#3264D2" /><rect x="0" y="763" width="1024" height="1" fill="#3062D0" /><rect x="0" y="764" width="1024" height="1" fill="#2F5FCE" /><rect x="0" y="765" width="1024" height="1" fill="#2D5DCC" /><rect x="0" y="766" width="1024" height="1" fill="#2C5ACA" /><rect x="0" y="767" width="1024" height="1" fill="#2A58C8" /><defs><linearGradient id="sg" x1="0" y1="0" x2="0" y2="1"><stop offset="0" stop-color="#B8DCB8"/><stop offset="0.08" stop-color="#70B870"/><stop offset="0.5" stop-color="#58A858"/><stop offset="0.54" stop-color="#1C9A1C"/><stop offset="0.8" stop-color="#16B416"/><stop offset="1" stop-color="#10BE10"/></linearGradient><linearGradient id="tray" x1="0" y1="0" x2="0" y2="1"><stop offset="0" stop-color="#FFFFFF"/><stop offset="0.1" stop-color="#EEF6FE"/><stop offset="0.35" stop-color="#D4E8FA"/><stop offset="0.6" stop-color="#B4D6F6"/><stop offset="0.8" stop-color="#90BEF0"/><stop offset="1" stop-color="#6A9AE2"/></linearGradient><linearGradient id="btn" x1="0" y1="0" x2="0" y2="1"><stop offset="0" stop-color="#70ACF4"/><stop offset="0.3" stop-color="#5A98EC"/><stop offset="0.6" stop-color="#4684E2"/><stop offset="1" stop-color="#3A70D8"/></linearGradient><linearGradient id="btna" x1="0" y1="0" x2="0" y2="1"><stop offset="0" stop-color="#1A4AA8"/><stop offset="0.5" stop-color="#1E50B4"/><stop offset="1" stop-color="#2458C0"/></linearGradient></defs><path d="M0,739 H90 Q99,739 99,753.5 Q99,768 90,768 H0 Z" fill="url(#sg)" shape-rendering="auto"/><path d="M92,739 Q100,741 100,753" stroke="#8AD88A" stroke-width="1" fill="none" opacity="0.6" shape-rendering="auto"/><path d="M12,746 q4,-2 8,0 v5 q-4,-2 -8,0 z" fill="#F05A24" shape-rendering="auto"/><path d="M21,746 q4,2 8,0 v5 q-4,2 -8,0 z" fill="#7BC242" shape-rendering="auto"/><path d="M11,752 q4,-2 8,0 v5 q-4,-2 -8,0 z" fill="#3E8AE8" shape-rendering="auto"/><path d="M20,752 q4,2 8,0 v5 q-4,2 -8,0 z" fill="#F8C400" shape-rendering="auto"/><g transform="translate(39,742) skewX(-14)"><path d="M25 3h2v1h-2zM34 3h1v1h-1zM2 4h14v1h-14zM25 4h2v1h-2zM33 4h2v1h-2zM5 5h2v1h-2zM11 5h1v1h-1zM25 5h1v1h-1zM33 5h1v1h-1zM5 6h2v1h-2zM11 6h1v1h-1zM25 6h1v1h-1zM32 6h1v1h-1zM36 6h1v1h-1zM5 7h2v1h-2zM11 7h1v1h-1zM23 7h6v1h-6zM32 7h1v1h-1zM36 7h2v1h-2zM5 8h2v1h-2zM11 8h1v1h-1zM25 8h1v1h-1zM27 8h2v1h-2zM31 8h1v1h-1zM37 8h2v1h-2zM5 9h2v1h-2zM11 9h1v1h-1zM24 9h2v1h-2zM27 9h2v1h-2zM30 9h7v1h-7zM38 9h1v1h-1zM5 10h2v1h-2zM11 10h1v1h-1zM24 10h1v1h-1zM27 10h1v1h-1zM38 10h1v1h-1zM1 11h16v1h-16zM24 11h1v1h-1zM27 11h1v1h-1zM5 12h2v1h-2zM11 12h1v1h-1zM24 12h1v1h-1zM27 12h1v1h-1zM31 12h7v1h-7zM5 13h2v1h-2zM11 13h1v1h-1zM23 13h5v1h-5zM31 13h1v1h-1zM37 13h1v1h-1zM5 14h2v1h-2zM11 14h1v1h-1zM25 14h2v1h-2zM31 14h1v1h-1zM37 14h1v1h-1zM5 15h2v1h-2zM11 15h1v1h-1zM25 15h4v1h-4zM31 15h1v1h-1zM37 15h1v1h-1zM5 16h1v1h-1zM11 16h1v1h-1zM25 16h1v1h-1zM28 16h1v1h-1zM31 16h1v1h-1zM37 16h1v1h-1zM4 17h2v1h-2zM11 17h1v1h-1zM24 17h2v1h-2zM31 17h7v1h-7zM3 18h2v1h-2zM11 18h1v1h-1zM22 18h3v1h-3zM31 18h1v1h-1zM37 18h1v1h-1zM1 19h2v1h-2zM11 19h1v1h-1z" fill="#FFFFFF"/></g><circle cx="119" cy="753" r="7" fill="#F8B040" stroke="#D86A10" stroke-width="1.2" shape-rendering="auto"/><circle cx="119" cy="751" r="4" fill="#FFE8B0" opacity="0.8" shape-rendering="auto"/><ellipse cx="114" cy="754" rx="1.6" ry="2.2" fill="#101020" shape-rendering="auto"/><ellipse cx="124" cy="754" rx="1.6" ry="2.2" fill="#101020" shape-rendering="auto"/><ellipse cx="142" cy="753" rx="6" ry="5" fill="none" stroke="#1A70D0" stroke-width="2.2" shape-rendering="auto"/><path d="M137,753 h10" stroke="#1A70D0" stroke-width="1.8" shape-rendering="auto"/><path d="M147.5,756 q-3,3.5 -7,2.5" stroke="#2E8EE8" stroke-width="2" fill="none" shape-rendering="auto"/><path d="M134,760 q2,-9 14,-13" stroke="#48A8F0" stroke-width="1.5" fill="none" shape-rendering="auto"/><circle cx="166" cy="753" r="7.5" fill="#B8E8F4" stroke="#1A58B8" stroke-width="1.4" shape-rendering="auto"/><path d="M159,753 a7,7 0 0 0 7,7 v-7 z" fill="#1A58B8" shape-rendering="auto"/><path d="M163,747 v10 M163,749 h4 M166.5,755 v5 M164,757.5 h5" stroke="#FFFFFF" stroke-width="2" shape-rendering="auto"/><text x="185" y="751" font-family="Liberation Sans" font-size="12" fill="#FFFFFF" text-anchor="start" font-weight="bold" >»</text><rect x="203.5" y="741.5" width="105" height="24" rx="3" fill="url(#btn)" stroke="#2048A8" shape-rendering="auto"/><rect x="205" y="743" width="102" height="1" fill="#7AB0F8" opacity="0.7"/><rect x="311.5" y="741.5" width="105" height="24" rx="3" fill="url(#btn)" stroke="#2048A8" shape-rendering="auto"/><rect x="313" y="743" width="102" height="1" fill="#7AB0F8" opacity="0.7"/><rect x="419.5" y="741.5" width="105" height="24" rx="3" fill="url(#btna)" stroke="#0E2A70" shape-rendering="auto"/><rect x="528.5" y="741.5" width="104" height="24" rx="3" fill="url(#btn)" stroke="#2048A8" shape-rendering="auto"/><rect x="530" y="743" width="101" height="1" fill="#7AB0F8" opacity="0.7"/><rect x="636.5" y="741.5" width="105" height="24" rx="3" fill="url(#btn)" stroke="#2048A8" shape-rendering="auto"/><rect x="638" y="743" width="102" height="1" fill="#7AB0F8" opacity="0.7"/><circle cx="219" cy="753" r="7" fill="#22B022" stroke="#0A7A0A" stroke-width="0.8" shape-rendering="auto"/><text x="214.5" y="757.5" font-family="Liberation Sans" font-weight="bold" font-size="11" fill="#FFF" shape-rendering="auto">e</text><path d="M237 749h4v1h-4zM237 750h3v1h-3zM237 751h2v1h-2zM237 752h2v1h-2zM237 753h1v1h-1zM237 754h1v1h-1zM237 755h1v1h-1zM237 756h2v1h-2zM237 757h2v1h-2zM237 758h3v1h-3zM237 759h4v1h-4z" fill="#FFFFFF"/><path d="M246 749h1v1h-1zM250 749h1v1h-1zM243 750h11v1h-11zM246 751h1v1h-1zM251 751h1v1h-1zM248 752h1v1h-1zM252 752h1v1h-1zM245 753h9v1h-9zM245 754h1v1h-1zM248 754h1v1h-1zM245 755h1v1h-1zM248 755h1v1h-1zM251 755h1v1h-1zM245 756h1v1h-1zM248 756h1v1h-1zM250 756h1v1h-1zM245 757h1v1h-1zM249 757h1v1h-1zM253 757h1v1h-1zM244 758h1v1h-1zM248 758h1v1h-1zM250 758h1v1h-1zM253 758h1v1h-1zM243 759h1v1h-1zM246 759h2v1h-2zM251 759h3v1h-3zM258 749h1v1h-1zM258 750h7v1h-7zM258 751h1v1h-1zM263 751h1v1h-1zM257 752h1v1h-1zM259 752h1v1h-1zM262 752h1v1h-1zM256 753h1v1h-1zM260 753h2v1h-2zM260 754h1v1h-1zM258 755h7v1h-7zM255 756h4v1h-4zM264 756h1v1h-1zM258 757h1v1h-1zM264 757h1v1h-1zM258 758h1v1h-1zM264 758h1v1h-1zM258 759h7v1h-7zM267 750h11v1h-11zM272 751h1v1h-1zM271 752h1v1h-1zM269 753h7v1h-7zM269 754h1v1h-1zM275 754h1v1h-1zM269 755h1v1h-1zM275 755h1v1h-1zM269 756h7v1h-7zM269 757h1v1h-1zM275 757h1v1h-1zM269 758h1v1h-1zM275 758h1v1h-1zM269 759h7v1h-7z" fill="#FFFFFF"/><text x="280" y="758" font-family="Liberation Sans" font-size="11" fill="#FFFFFF" text-anchor="start" stroke="#FFFFFF" stroke-width="0.2" >...</text><rect x="320.5" y="745.5" width="14" height="14" rx="3" fill="#F07A2A" stroke="#B82010" shape-rendering="auto"/><circle cx="327.5" cy="752" r="4.5" fill="#FFB040" shape-rendering="auto"/><text x="339" y="758" font-family="Liberation Sans" font-size="11.5" fill="#FFFFFF" text-anchor="start" textLength="52" lengthAdjust="spacingAndGlyphs" stroke="#FFFFFF" stroke-width="0.2" >2 Power...</text><path d="M404,751 h6 l-3,3 z" fill="#FFF" shape-rendering="auto"/><rect x="433" y="746" width="4" height="12" fill="#2A6AC8" /><rect x="438" y="744" width="4" height="12" fill="#2460C0" /><text x="449" y="758" font-family="Liberation Sans" font-size="11.5" fill="#FFFFFF" text-anchor="start" textLength="60" lengthAdjust="spacingAndGlyphs" stroke="#FFFFFF" stroke-width="0.2" >8081: Met...</text><path d="M538.5,745.5 h8 l3,3 v11 h-11 z" fill="#FFF" stroke="#888" shape-rendering="auto"/><text x="535" y="758" font-family="Liberation Serif" font-style="italic" font-weight="bold" font-size="13" fill="#2A80E0" shape-rendering="auto">e</text><text x="556" y="758" font-family="Liberation Sans" font-size="11.5" fill="#FFFFFF" text-anchor="start" textLength="55" lengthAdjust="spacingAndGlyphs" stroke="#FFFFFF" stroke-width="0.2" >20120201...</text><path d="M644.5,748.5 h5 l2,2 h8 v9 h-15 z" fill="#F0C840" stroke="#A88A10" shape-rendering="auto"/><text x="664" y="758" font-family="Liberation Sans" font-size="11.5" fill="#FFFFFF" text-anchor="start" textLength="14" lengthAdjust="spacingAndGlyphs" stroke="#FFFFFF" stroke-width="0.2" >D:\</text><path d="M680 749h1v1h-1zM683 749h5v1h-5zM680 750h1v1h-1zM683 750h1v1h-1zM687 750h1v1h-1zM678 751h10v1h-10zM680 752h1v1h-1zM683 752h1v1h-1zM687 752h1v1h-1zM680 753h1v1h-1zM683 753h5v1h-5zM680 754h2v1h-2zM679 755h2v1h-2zM682 755h7v1h-7zM678 756h1v1h-1zM680 756h1v1h-1zM683 756h1v1h-1zM685 756h1v1h-1zM680 757h1v1h-1zM683 757h1v1h-1zM685 757h4v1h-4zM680 758h1v1h-1zM682 758h1v1h-1zM684 758h2v1h-2zM678 759h4v1h-4zM685 759h4v1h-4zM691 749h10v1h-10zM691 750h1v1h-1zM694 750h1v1h-1zM700 750h1v1h-1zM691 751h1v1h-1zM694 751h5v1h-5zM700 751h1v1h-1zM691 752h1v1h-1zM693 752h2v1h-2zM697 752h1v1h-1zM700 752h1v1h-1zM691 753h2v1h-2zM695 753h2v1h-2zM700 753h1v1h-1zM691 754h1v1h-1zM694 754h1v1h-1zM697 754h1v1h-1zM700 754h1v1h-1zM691 755h3v1h-3zM695 755h1v1h-1zM698 755h3v1h-3zM691 756h1v1h-1zM696 756h1v1h-1zM700 756h1v1h-1zM691 757h1v1h-1zM695 757h1v1h-1zM700 757h1v1h-1zM691 758h1v1h-1zM696 758h1v1h-1zM700 758h1v1h-1zM691 759h10v1h-10z" fill="#FFFFFF"/><rect x="754.5" y="749.5" width="13" height="9" fill="#F4F4F4" stroke="#555" shape-rendering="auto"/><rect x="756" y="752" width="11" height="1" fill="#777" /><rect x="756" y="754" width="11" height="1" fill="#777" /><rect x="756" y="756" width="11" height="1" fill="#777" /><path d="M782 749h1v1h-1zM784 749h1v1h-1zM786 749h1v1h-1zM779 750h3v1h-3zM784 750h1v1h-1zM787 750h1v1h-1zM781 751h1v1h-1zM784 751h1v1h-1zM778 752h11v1h-11zM781 753h1v1h-1zM784 753h1v1h-1zM781 754h2v1h-2zM784 754h1v1h-1zM787 754h1v1h-1zM780 755h2v1h-2zM784 755h1v1h-1zM786 755h1v1h-1zM778 756h2v1h-2zM781 756h1v1h-1zM785 756h1v1h-1zM781 757h1v1h-1zM784 757h2v1h-2zM788 757h1v1h-1zM779 758h1v1h-1zM781 758h1v1h-1zM783 758h1v1h-1zM786 758h1v1h-1zM788 758h1v1h-1zM780 759h1v1h-1zM787 759h2v1h-2zM793 749h1v1h-1zM797 749h1v1h-1zM792 750h1v1h-1zM797 750h1v1h-1zM791 751h4v1h-4zM796 751h5v1h-5zM791 752h1v1h-1zM794 752h2v1h-2zM800 752h1v1h-1zM791 753h1v1h-1zM794 753h1v1h-1zM800 753h1v1h-1zM791 754h4v1h-4zM796 754h1v1h-1zM800 754h1v1h-1zM791 755h1v1h-1zM794 755h1v1h-1zM797 755h1v1h-1zM800 755h1v1h-1zM791 756h1v1h-1zM794 756h1v1h-1zM797 756h1v1h-1zM800 756h1v1h-1zM791 757h1v1h-1zM794 757h1v1h-1zM800 757h1v1h-1zM791 758h4v1h-4zM800 758h1v1h-1zM791 759h1v1h-1zM794 759h1v1h-1zM798 759h2v1h-2zM807 749h1v1h-1zM807 750h1v1h-1zM803 751h9v1h-9zM803 752h1v1h-1zM807 752h1v1h-1zM811 752h1v1h-1zM803 753h9v1h-9zM803 754h1v1h-1zM807 754h1v1h-1zM811 754h1v1h-1zM803 755h1v1h-1zM807 755h1v1h-1zM811 755h1v1h-1zM803 756h9v1h-9zM807 757h1v1h-1zM812 757h1v1h-1zM807 758h1v1h-1zM812 758h1v1h-1zM808 759h5v1h-5zM815 749h3v1h-3zM821 749h1v1h-1zM815 750h1v1h-1zM817 750h1v1h-1zM822 750h1v1h-1zM815 751h1v1h-1zM817 751h1v1h-1zM819 751h6v1h-6zM815 752h3v1h-3zM815 753h1v1h-1zM817 753h1v1h-1zM819 753h1v1h-1zM822 753h1v1h-1zM824 753h1v1h-1zM815 754h1v1h-1zM817 754h1v1h-1zM819 754h2v1h-2zM822 754h1v1h-1zM824 754h1v1h-1zM815 755h3v1h-3zM819 755h1v1h-1zM821 755h1v1h-1zM824 755h1v1h-1zM815 756h1v1h-1zM817 756h1v1h-1zM819 756h2v1h-2zM822 756h1v1h-1zM824 756h1v1h-1zM815 757h1v1h-1zM817 757h1v1h-1zM819 757h1v1h-1zM824 757h1v1h-1zM814 758h1v1h-1zM817 758h1v1h-1zM819 758h6v1h-6zM814 759h1v1h-1zM816 759h2v1h-2zM819 759h1v1h-1zM824 759h1v1h-1z" fill="#FFFFFF"/><text x="836" y="751" font-family="Liberation Sans" font-size="12" fill="#FFFFFF" text-anchor="start" font-weight="bold" >»</text><path d="M859,739 H1024 V768 H859 Z" fill="url(#tray)"/><circle cx="859" cy="753" r="8" fill="#C8DEF8" stroke="#F4F8FF" stroke-width="1.2" shape-rendering="auto"/><circle cx="859" cy="751" r="5" fill="#E8F2FE" shape-rendering="auto"/><path d="M861,749 l-4,4 l4,4" stroke="#2A4A9A" stroke-width="1.5" fill="none" shape-rendering="auto"/><path d="M871,752 l3,-3 l2,1 l3,-3 l2,2 l2,-2 l1,3 l3,1 l-1,3 l1,3 l-3,1 l-1,3 l-3,-1 l-3,2 l-2,-2 l-3,0 z" fill="#101010" shape-rendering="auto"/><path d="M880,745 v14 M873,752 h13 M875,747 l10,10 M885,747 l-10,10" stroke="#F8F000" stroke-width="1.6" shape-rendering="auto"/><rect x="873" y="754" width="4" height="3" fill="#F0F0F0" /><path d="M890.5,749.5 h3 l5,-4 v14 l-5,-4 h-3 z" fill="#E86A40" stroke="#301008" stroke-width="1" shape-rendering="auto"/><path d="M900.5,748 q2,4 0,8 M902.5,746.5 q3,5.5 0,11" stroke="#601808" stroke-width="1" fill="none" shape-rendering="auto"/><rect x="912.5" y="745.5" width="7" height="6" fill="#40508C" stroke="#A0A8E0" stroke-width="0.8" shape-rendering="auto"/><rect x="907.5" y="749.5" width="7" height="6" fill="#40508C" stroke="#A0A8E0" stroke-width="0.8" shape-rendering="auto"/><ellipse cx="911" cy="758" rx="4" ry="1.5" fill="#E0E4F0" shape-rendering="auto"/><rect x="924.5" y="747.5" width="8" height="7" fill="#60B8F0" stroke="#3A6AB0" stroke-width="0.8" shape-rendering="auto"/><ellipse cx="929" cy="757" rx="4" ry="1.5" fill="#E0E8F8" stroke="#6080C0" stroke-width="0.5" shape-rendering="auto"/><path d="M935,748 q2,3 0,6 M937.5,746.5 q3,4.5 0,9 M940,745 q4,6 0,12" stroke="#20C020" stroke-width="1.1" fill="none" shape-rendering="auto"/><rect x="943" y="746" width="13" height="14" fill="#FFFFFF" /><rect x="944" y="747" width="11" height="10" fill="#605000" /><rect x="944" y="747" width="1" height="1" fill="#101000" /><rect x="946" y="747" width="1" height="1" fill="#101000" /><rect x="948" y="747" width="1" height="1" fill="#101000" /><rect x="950" y="747" width="1" height="1" fill="#101000" /><rect x="952" y="747" width="1" height="1" fill="#101000" /><rect x="954" y="747" width="1" height="1" fill="#101000" /><rect x="944" y="749" width="1" height="1" fill="#101000" /><rect x="946" y="749" width="1" height="1" fill="#101000" /><rect x="948" y="749" width="1" height="1" fill="#101000" /><rect x="950" y="749" width="1" height="1" fill="#101000" /><rect x="952" y="749" width="1" height="1" fill="#101000" /><rect x="954" y="749" width="1" height="1" fill="#101000" /><rect x="944" y="751" width="1" height="1" fill="#101000" /><rect x="946" y="751" width="1" height="1" fill="#101000" /><rect x="948" y="751" width="1" height="1" fill="#101000" /><rect x="950" y="751" width="1" height="1" fill="#101000" /><rect x="952" y="751" width="1" height="1" fill="#101000" /><rect x="954" y="751" width="1" height="1" fill="#101000" /><rect x="944" y="753" width="1" height="1" fill="#101000" /><rect x="946" y="753" width="1" height="1" fill="#101000" /><rect x="948" y="753" width="1" height="1" fill="#101000" /><rect x="950" y="753" width="1" height="1" fill="#101000" /><rect x="952" y="753" width="1" height="1" fill="#101000" /><rect x="954" y="753" width="1" height="1" fill="#101000" /><rect x="944" y="755" width="1" height="1" fill="#101000" /><rect x="946" y="755" width="1" height="1" fill="#101000" /><rect x="948" y="755" width="1" height="1" fill="#101000" /><rect x="950" y="755" width="1" height="1" fill="#101000" /><rect x="952" y="755" width="1" height="1" fill="#101000" /><rect x="954" y="755" width="1" height="1" fill="#101000" /><rect x="944" y="756" width="11" height="2" fill="#F8E800" /><circle cx="968" cy="753" r="7.5" fill="#F0E020" stroke="#3A9A10" stroke-width="1.5" shape-rendering="auto"/><path d="M964,753 h8 M968,749 v8" stroke="#106010" stroke-width="2.2" shape-rendering="auto"/><text x="983" y="758" font-family="Liberation Sans" font-size="11.5" fill="#000000" text-anchor="start" textLength="27" lengthAdjust="spacingAndGlyphs" stroke="#000000" stroke-width="0.2" >19:28</text><rect x="11.5" y="53.5" width="12" height="10" rx="1" fill="#FFFFFF" stroke="#3A84DA" stroke-width="1.2" shape-rendering="auto"/><rect x="12" y="53.5" width="11" height="2" fill="#3A84DA" shape-rendering="auto"/><path d="M14,56 v5 M13,57 l1,-1 l1,1 M13,60 l1,1 l1,-1" stroke="#8898A8" stroke-width="0.9" fill="none" shape-rendering="auto"/><path d="M20.0,56.5 h4.0 v3.5 h3.5 v4.0 h-3.5 v3.5 h-4.0 v-3.5 h-3.5 v-4.0 h3.5 z" fill="#2ED82E" stroke="#0A8A0A" stroke-width="1" shape-rendering="auto"/><path d="M31,60 h5.5 l-2.75,3 z" fill="#000" shape-rendering="auto"/><rect x="49.5" y="58.5" width="13" height="10" rx="1" fill="#FFFFFF" stroke="#3A84DA" stroke-width="1.2" shape-rendering="auto"/><rect x="50" y="58.5" width="12" height="2" fill="#3A84DA" shape-rendering="auto"/><rect x="46.5" y="53.5" width="13" height="10" rx="1" fill="#FFFFFF" stroke="#3A84DA" stroke-width="1.2" shape-rendering="auto"/><rect x="47" y="53.5" width="12" height="2" fill="#3A84DA" shape-rendering="auto"/><path d="M49,58 v4 h8 M55,60 l2,2 l-2,2 M52,66 h8" stroke="#8898A8" stroke-width="0.9" fill="none" shape-rendering="auto"/><path d="M66,60 h5.5 l-2.75,3 z" fill="#000" shape-rendering="auto"/><rect x="88.5" y="53.5" width="15" height="14.5" rx="1.5" fill="#FFFFFF" stroke="#3A88E0" stroke-width="1.5" shape-rendering="auto"/><path d="M94,56 l3.5,3.5 h-2 v3 h-3 v-3 h-2 z" fill="#1EAA1E" shape-rendering="auto"/><path d="M98,66.5 l3.5,-3.5 h-2 v-3 h-3 v3 h-2 z" fill="#F0602A" shape-rendering="auto"/><circle cx="124.5" cy="61.5" r="5.3" fill="none" stroke="#555" stroke-width="1.6" shape-rendering="auto"/><path d="M124.5,54 v15 M117,61.5 h15" stroke="#555" stroke-width="1.6" shape-rendering="auto"/><path d="M143.5,55.5 h4 l1.5,1.5 h5.5 v7 h-11 z" fill="#F4D870" stroke="#B89020" shape-rendering="auto"/><path d="M155,57.5 l1.9,3.9 l4.3,0.6 l-3.1,3 l0.8,4.3 l-3.9,-2 l-3.9,2 l0.8,-4.3 l-3.1,-3 l4.3,-0.6 z" fill="#F8D838" stroke="#A88010" stroke-width="0.9" shape-rendering="auto"/><rect x="146" y="66" width="1" height="1" fill="#303070" /><rect x="146" y="68" width="1" height="1" fill="#303070" /><rect x="146" y="70" width="1" height="1" fill="#303070" /><rect x="172.5" y="54" width="15" height="14" rx="1.5" fill="#FFFFFF" stroke="#2A78D0" stroke-width="1.5" shape-rendering="auto"/><rect x="173" y="55" width="2" height="12" fill="#3A84DA" /><rect x="176" y="56" width="2" height="2" fill="#E01010" /><rect x="179" y="57" width="8" height="1" fill="#A8B8D0" /><rect x="176" y="59" width="2" height="2" fill="#202020" /><rect x="179" y="60" width="8" height="1" fill="#A8B8D0" /><rect x="176" y="62" width="2" height="2" fill="#202020" /><rect x="179" y="63" width="8" height="1" fill="#A8B8D0" /><rect x="176" y="65" width="2" height="2" fill="#E01010" /><rect x="179" y="66" width="8" height="1" fill="#A8B8D0" /><rect x="200.5" y="53.5" width="12" height="13" fill="#F8F8F8" stroke="#8A8A8A" shape-rendering="auto"/><path d="M203,56 v8 M202,57 l1,-1 l1,1 M206,56 v4 h4" stroke="#707070" stroke-width="0.8" fill="none" shape-rendering="auto"/><path d="M211,65 L217,70" stroke="#B89018" stroke-width="2.6" stroke-linecap="round" shape-rendering="auto"/><circle cx="208" cy="61.5" r="4.8" fill="#C8E4F8" fill-opacity="0.85" stroke="#3A88D8" stroke-width="1.3" shape-rendering="auto"/><path d="M235.5,53.5 h8 l3,3 v10.5 h-11 z" fill="#F8F8F8" stroke="#6A6A6A" shape-rendering="auto"/><rect x="238" y="56" width="4" height="2" fill="#707070" /><rect x="238" y="60" width="7" height="1" fill="#909090" /><rect x="238" y="62" width="5" height="1" fill="#909090" /><path d="M243.0,59.0 h4.0 v3.5 h3.5 v4.0 h-3.5 v3.5 h-4.0 v-3.5 h-3.5 v-4.0 h3.5 z" fill="#2ED82E" stroke="#0A8A0A" stroke-width="1" shape-rendering="auto"/><path d="M309.5,53 L317,60.8 L309.5,68.5 L302,60.8 Z" fill="#F4D850" stroke="#B88A10" stroke-width="1.2" shape-rendering="auto"/><path d="M309.5,56.5 v6" stroke="#4A3A10" stroke-width="2" shape-rendering="auto"/><rect x="308.5" y="64" width="2" height="2" fill="#4A3A10" /><path d="M331,61 L338,68 L345,61 Z" fill="#F4E080" stroke="#B89020" stroke-width="0.8" shape-rendering="auto"/><ellipse cx="337" cy="59" rx="8" ry="3.2" fill="#48A0E0" stroke="#2070B8" stroke-width="0.8" shape-rendering="auto"/><ellipse cx="337" cy="56.5" rx="4" ry="3" fill="#70C0F0" stroke="#2070B8" stroke-width="0.8" shape-rendering="auto"/><circle cx="341.5" cy="64.5" r="4.2" fill="#E02010" stroke="#A01008" stroke-width="0.8" shape-rendering="auto"/><rect x="340" y="63" width="3" height="3" fill="#FFFFFF" /><path d="M423,54 L431,62 L427.5,62.5 L430,68 L428,69 L425.5,63.5 L423,66 Z" fill="#454545" shape-rendering="auto"/><path d="M455.5,54 v6 M455.5,63 v6 M448,61.5 h6 M457,61.5 h6" stroke="#505050" stroke-width="1.5" shape-rendering="auto"/><path d="M489.5,54 v14" stroke="#505050" stroke-width="1.5" shape-rendering="auto"/><path d="M512,61.5 h12" stroke="#505050" stroke-width="1.5" shape-rendering="auto"/><path d="M540,68 L552,56" stroke="#505050" stroke-width="1.4" shape-rendering="auto"/><path d="M566,64 L576,55 M568,67 L578,58 M567,59 h10 M566,63 h10" stroke="#555" stroke-width="1.2" shape-rendering="auto"/><path d="M570,60 l-2,3 M574,58 l-2,3" stroke="#555" stroke-width="1" shape-rendering="auto"/><text x="576" y="69" font-family="Liberation Sans" font-size="8" fill="#444" text-anchor="start" font-weight="bold" >E</text><path d="M597,54.5 h12" stroke="#555" stroke-width="1" stroke-dasharray="1 1"/><path d="M597,57.5 h12" stroke="#555" stroke-width="1" stroke-dasharray="1 1"/><path d="M597,60.5 h12" stroke="#555" stroke-width="1" stroke-dasharray="1 1"/><path d="M597,63.5 h12" stroke="#555" stroke-width="1" stroke-dasharray="1 1"/><path d="M597,66.5 h12" stroke="#555" stroke-width="1" stroke-dasharray="1 1"/><text x="604" y="70" font-family="Liberation Sans" font-size="8" fill="#444" text-anchor="start" font-weight="bold" >F</text><text x="625" y="66" font-family="Liberation Sans" font-size="12" fill="#6A6A7A" text-anchor="start" font-weight="bold" >A</text><rect x="651.5" y="55.5" width="12" height="12" fill="none" stroke="#555" stroke-width="1" stroke-dasharray="1 1"/><text x="653" y="66" font-family="Liberation Sans" font-size="11" fill="#555" text-anchor="start" font-weight="bold" >T</text><path d="M681,56 l3,-3 l3,3 l-3,3 z M686,63 l3,-3 l3,3 l-3,3 z" fill="#505050" shape-rendering="auto"/><path d="M679,60 l3,3 l4,-5" stroke="#404040" stroke-width="1.5" fill="none" shape-rendering="auto"/><path d="M697,60 h5.5 l-2.75,3 z" fill="#000" shape-rendering="auto"/><path d="M280.5,82 V93.5 H292" stroke="#555" stroke-width="1.1" fill="none" shape-rendering="auto"/><path d="M278,85 L280.5,82 L283,85 M289,91 L292,93.5 L289,96" stroke="#555" stroke-width="1" fill="none" shape-rendering="auto"/><path d="M287.5,83 v8 M287.5,84 h2 M285.5,90 h2" stroke="#18A018" stroke-width="1.3" fill="none" shape-rendering="auto"/><path d="M308.5,82 V93.5 H320" stroke="#555" stroke-width="1.1" fill="none" shape-rendering="auto"/><path d="M306,85 L308.5,82 L311,85 M317,91 L320,93.5 L317,96" stroke="#555" stroke-width="1" fill="none" shape-rendering="auto"/><path d="M314.5,80 v12" stroke="#106010" stroke-width="1" shape-rendering="auto"/><rect x="312.5" y="82.5" width="4" height="7" fill="#30D030" stroke="#108010" stroke-width="1" shape-rendering="auto"/><path d="M336.5,82 V93.5 H348" stroke="#555" stroke-width="1.1" fill="none" shape-rendering="auto"/><path d="M334,85 L336.5,82 L339,85 M345,91 L348,93.5 L345,96" stroke="#555" stroke-width="1" fill="none" shape-rendering="auto"/><path d="M335,90 Q340,83 343,84 Q346,85 348,89" stroke="#20A020" stroke-width="1.3" fill="none" shape-rendering="auto"/><path d="M376.0,89.0 L380.5,93.5" stroke="#B89018" stroke-width="3" stroke-linecap="round" shape-rendering="auto"/><path d="M376.0,89.0 L380.5,93.5" stroke="#F0D060" stroke-width="1.5" stroke-linecap="round" shape-rendering="auto"/><circle cx="372.5" cy="85.5" r="5.3" fill="#D8ECFC" stroke="#2A78D0" stroke-width="1.6" shape-rendering="auto"/><path d="M369.5,85.5 h6" stroke="#2A78D0" stroke-width="2" shape-rendering="auto"/><path d="M372.5,82.5 v6" stroke="#2A78D0" stroke-width="2" shape-rendering="auto"/><path d="M404.0,89.0 L408.5,93.5" stroke="#B89018" stroke-width="3" stroke-linecap="round" shape-rendering="auto"/><path d="M404.0,89.0 L408.5,93.5" stroke="#F0D060" stroke-width="1.5" stroke-linecap="round" shape-rendering="auto"/><circle cx="400.5" cy="85.5" r="5.3" fill="#D8ECFC" stroke="#2A78D0" stroke-width="1.6" shape-rendering="auto"/><path d="M397.5,85.5 h6" stroke="#2A78D0" stroke-width="2" shape-rendering="auto"/><path d="M432.5,82 V93.5 H444" stroke="#555" stroke-width="1.1" fill="none" shape-rendering="auto"/><path d="M430,85 L432.5,82 L435,85 M441,91 L444,93.5 L441,96" stroke="#555" stroke-width="1" fill="none" shape-rendering="auto"/><path d="M435.5,83 l5,4 l-5,4 z" fill="#20B020" shape-rendering="auto"/><path d="M460.5,82 V93.5 H472" stroke="#555" stroke-width="1.1" fill="none" shape-rendering="auto"/><path d="M458,85 L460.5,82 L463,85 M469,91 L472,93.5 L469,96" stroke="#555" stroke-width="1" fill="none" shape-rendering="auto"/><path d="M466.5,81 v10" stroke="#2A70D0" stroke-width="1.3" shape-rendering="auto"/><path d="M472,86.5 h-4 M470,84 l-2.5,2.5 l2.5,2.5" stroke="#D03010" stroke-width="1.3" fill="none" shape-rendering="auto"/><path d="M491.5,80.5 h7 l3,3 v9 h-10 z" fill="#F8F8F8" stroke="#707070" shape-rendering="auto"/><path d="M493.5,83.5 h7 l3,3 v9 h-10 z" fill="#FFFFFF" stroke="#707070" shape-rendering="auto"/><path d="M499.0,86.0 h4.0 v3.5 h3.5 v4.0 h-3.5 v3.5 h-4.0 v-3.5 h-3.5 v-4.0 h3.5 z" fill="#2ED82E" stroke="#0A8A0A" stroke-width="1" shape-rendering="auto"/><path d="M510,87 h5.5 l-2.75,3 z" fill="#000" shape-rendering="auto"/><circle cx="533" cy="88" r="8" fill="#2A78D8" stroke="#0A3A88" stroke-width="0.8" shape-rendering="auto"/><circle cx="533" cy="88" r="6.2" fill="#F4F8FF" stroke="#9AC0F0" stroke-width="0.6" shape-rendering="auto"/><path d="M533,84.5 v3.5 h3" stroke="#303030" stroke-width="1" fill="none" shape-rendering="auto"/><path d="M545,87 h5.5 l-2.75,3 z" fill="#000" shape-rendering="auto"/><rect x="560.5" y="81.5" width="16" height="13" fill="#FFFFFF" stroke="#2A70C8" stroke-width="1.3" shape-rendering="auto"/><rect x="561" y="82" width="16" height="2" fill="#3A84DA" /><path d="M563,88 l3,-1 l3,1 l3,-1 l3,0" stroke="#D03020" stroke-width="1" fill="none" shape-rendering="auto"/><rect x="561" y="89" width="16" height="1" fill="#A8B8D0" /><path d="M563,93 l3,-2 l3,1 l3,-2 l3,1" stroke="#20A020" stroke-width="1" fill="none" shape-rendering="auto"/><path d="M580,87 h5.5 l-2.75,3 z" fill="#000" shape-rendering="auto"/></svg></body></html>
